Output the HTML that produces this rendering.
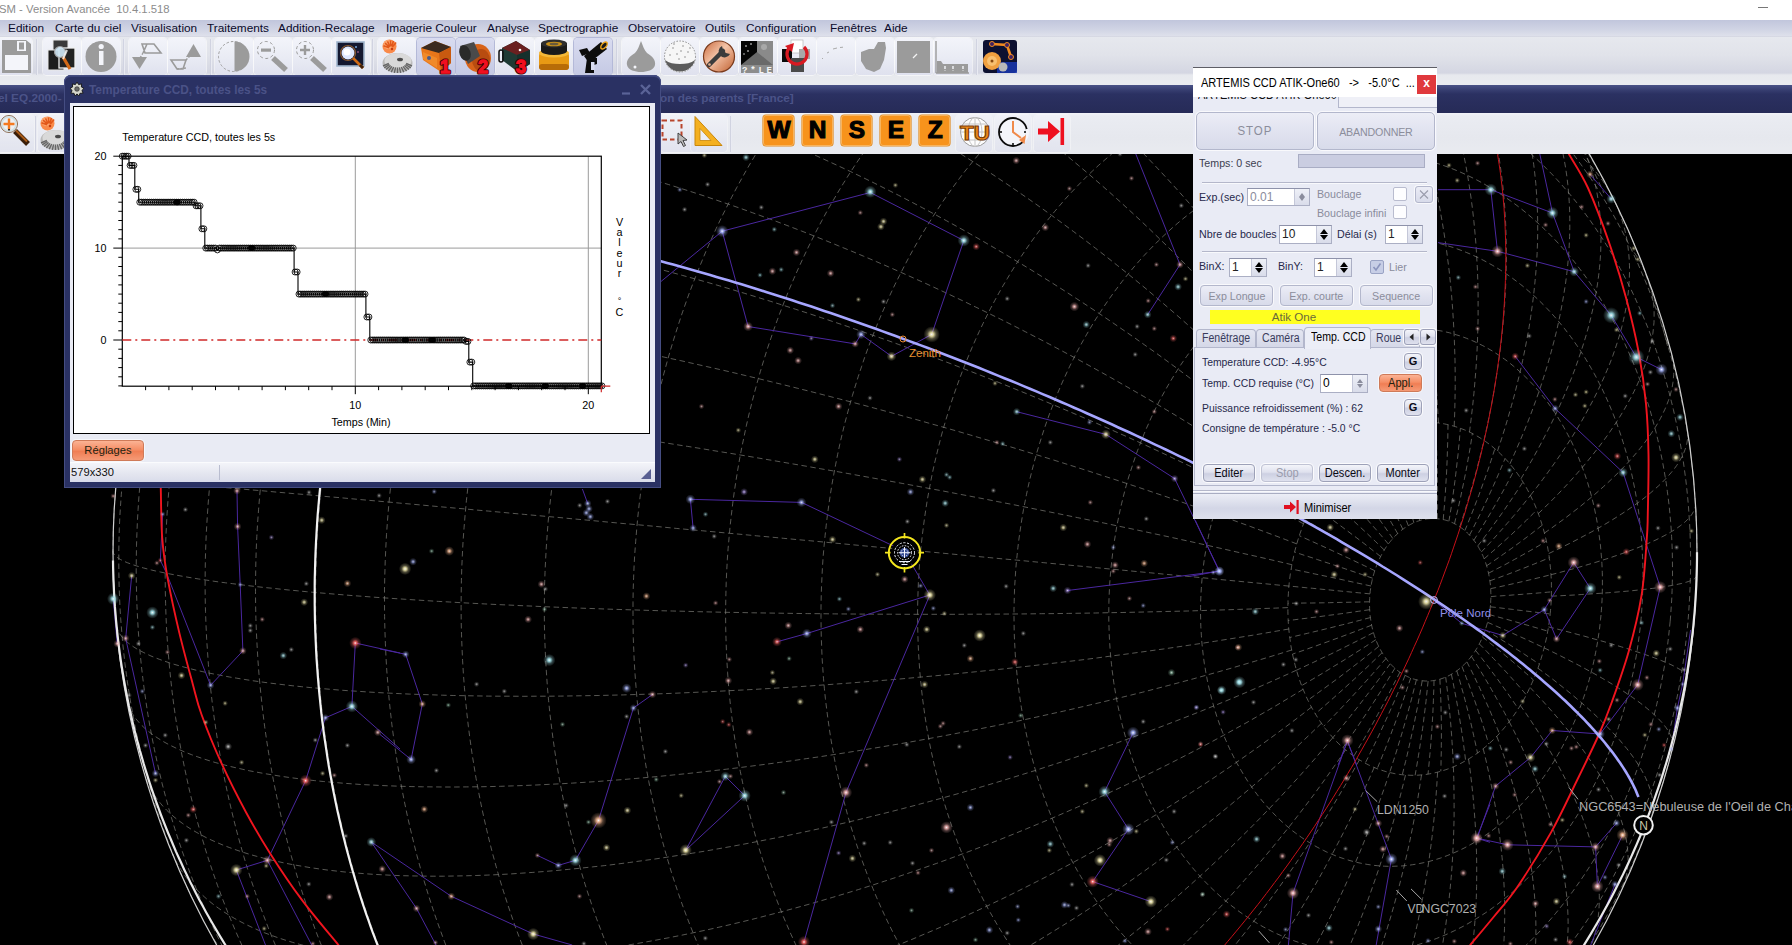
<!DOCTYPE html><html lang="fr"><head><meta charset="utf-8"><title>PRISM</title><style>
*{box-sizing:border-box;margin:0;padding:0}
html,body{width:1792px;height:945px;overflow:hidden;background:#000}
body{position:relative;font-family:"Liberation Sans",sans-serif;font-size:12px;color:#000}
.abs{position:absolute}
#titlebar{left:0;top:0;width:1792px;height:20px;background:#fff}
#titlebar span{position:absolute;left:-1px;top:2.500px;font-size:11.400px;color:#8c8c8c;white-space:pre;transform:scaleX(.992);transform-origin:0 50%}
#menubar{left:0;top:20px;width:1792px;height:17px;background:linear-gradient(#c1c6dc,#d0d4e4 55%,#dee0eb 94%,#cfd1dc)}
#menubar span{position:absolute;top:.700px;font-size:11.600px;color:#0a0a2a;white-space:nowrap;transform:scaleX(1.020);transform-origin:0 50%}
#tb1{left:0;top:37px;width:1792px;height:49px;background:linear-gradient(#e6e8ee 0,#e1e3ea 18px,#d4d6e2 36px,#e7e9ee 38px,#eaecf0 49px)}
.tbtn{position:absolute;top:1px;width:38px;height:37px;border-radius:4px;background:linear-gradient(#f3f4fa,#e9ebf4 55%,#dfe1ee);box-shadow:0 0 0 1px rgba(255,255,255,.55)}
.tbtn.hi{background:linear-gradient(#d9dcf0,#c5c9e4);box-shadow:0 0 0 1px #b4b9d8}
.tsep{position:absolute;top:2px;width:2px;height:36px;background:linear-gradient(90deg,#c4c7d8,#f6f7fb)}
#mdititle{left:0;top:85px;width:1792px;height:28px;background:linear-gradient(#4a5286 0,#3a4174 4px,#2b3162 9px,#292e5d 60%,#262b57)}
#mdititle span{position:absolute;top:6px;font-size:11.800px;font-weight:bold;color:#4b5388;white-space:nowrap}
#tb2{left:0;top:113px;width:1792px;height:41px;background:linear-gradient(#f1f2f8 0,#eaecf2 3px,#e6e8ee 60%,#e9ebf0 100%)}
svg{position:absolute;left:0;top:0;overflow:visible}


#cw{left:63.5px;top:75px;width:597.5px;height:413px;border-radius:7px 7px 0 0;background:#2a3163;box-shadow:inset 0 0 0 1px #454d82, inset 0 2px 0 #3b437a}
#cw .ttl{position:absolute;left:25.5px;top:7.5px;font-size:11.850px;font-weight:bold;color:#4a5287;white-space:nowrap}
#cwc{left:6.5px;top:28px;width:585px;height:379px;background:#e9ebf4}
#plot{left:3px;top:3px;width:577px;height:328px;background:#fff;border:1px solid #000}
#regl{left:2px;top:337px;width:72px;height:21px;border:1px solid #cf7a58;border-radius:4px;background:linear-gradient(#fbb394,#f58e66 45%,#f07e54 55%,#f59a76);font-size:11.200px;line-height:19px;text-align:center;color:#221;box-shadow:0 0 0 1px rgba(255,255,255,.6)}
#cwst{left:0;top:359px;width:585px;height:20px;background:linear-gradient(#f3f4f9,#e3e5ef 60%,#d9dcea);border-top:1px solid #fafbfd;font-size:11.200px}
#cwst span{position:absolute;left:1px;top:3px;color:#111}
#cwst i{position:absolute;left:149px;top:2px;width:1px;height:15px;background:#b9bdd0}


#dg{left:1193px;top:67px;width:244px;height:452px;background:#e9ebf5;border-top:1px solid #5e5e66;overflow:hidden;font-size:11.6px;color:#26284a}
#dg .abs{white-space:nowrap}
.nw{transform:scaleX(.92);transform-origin:0 50%}
.nx{display:inline-block;transform:scaleX(.92);transform-origin:50% 50%}
#dgt{left:0;top:0;width:244px;height:29px;background:#fff;z-index:3}
#dgt span{position:absolute;left:8px;top:8px;font-size:12.2px;color:#000;white-space:pre;transform:scaleX(.905);transform-origin:0 50%}
#dgx{left:224px;top:7px;width:19px;height:19px;background:#e0393d;color:#fff;font-size:12px;font-weight:bold;text-align:center;line-height:17px}
.bb{border:1px solid #b3b7cc;border-radius:5px;background:linear-gradient(#ecedf6,#e1e3f0 50%,#d8dbea);color:#8b8d9b;text-align:center;box-shadow:0 0 0 1px rgba(255,255,255,.7)}
.sb{border:1px solid #9da1b8;border-radius:4px;background:linear-gradient(#f4f5fa,#dfe1ee 45%,#cdd0e2 55%,#dfe1ee);color:#0a0a14;text-align:center;box-shadow:0 0 0 1px rgba(255,255,255,.8);font-size:12px;line-height:16px}
.sb.dis{color:#9a9cac;border-color:#c0c3d4}
.gl{color:#8a8c9c}
.in{background:#fff;border:1px solid #abafc4;border-top-color:#8e92aa;font-size:12px;line-height:16px;padding-left:2px;color:#222}
.in.g{color:#8a8c9c}
.sp{position:absolute;right:0;top:0;width:15px;height:100%;background:linear-gradient(#eef0f7,#d9dcea);border-left:1px solid #c4c7d8}
.sp:before,.sp:after{content:"";position:absolute;left:3px;border:4px solid transparent}
.sp:before{top:-1px;border-bottom:5px solid #000}
.sp:after{bottom:-1px;border-top:5px solid #000}
.sp.g:before{border-bottom-color:#8a8c9c;border-width:3px;border-bottom-width:4px;left:4px;top:1px}
.sp.g:after{border-top-color:#8a8c9c;border-width:3px;border-top-width:4px;left:4px;bottom:1px}
.cb{background:#fdfdff;border:1px solid #b9bccf;border-radius:2px}
.hr{height:1px;background:#b4b7ca;box-shadow:0 1px 0 #f8f9fc}
.tab{top:261px;height:19px;border:1px solid #b3b7cc;border-bottom:none;border-radius:4px 4px 0 0;background:linear-gradient(#e4e6f1,#d4d7e7);color:#3a3c5c;font-size:12px;line-height:17px;padding-left:5px}

</style></head><body>
<svg id="sky" width="1792" height="945" viewBox="0 0 1792 945">
<defs><clipPath id="skyclip"><rect x="0" y="154" width="1792" height="791"/></clipPath></defs>
<g clip-path="url(#skyclip)">
<path d="M1490.5 605.1L1490.3 606.5L1490.2 607.9L1490.0 609.4L1489.8 610.8L1489.6 612.2L1489.4 613.6L1489.1 615.0L1488.9 616.3L1488.6 617.7L1488.3 619.1L1488.0 620.5L1487.6 621.9L1487.3 623.2L1486.9 624.6L1486.5 625.9L1486.1 627.3L1485.7 628.6L1485.3 629.9L1484.8 631.2L1484.4 632.5L1483.9 633.8L1483.4 635.1L1482.8 636.4L1482.3 637.6L1481.8 638.9L1481.2 640.1L1480.6 641.3L1480.0 642.6L1479.4 643.8L1478.8 644.9L1478.1 646.1L1477.5 647.3L1476.8 648.4L1476.1 649.5L1475.4 650.7L1474.7 651.8L1474.0 652.8L1473.2 653.9L1472.5 655.0L1471.7 656.0L1470.9 657.0L1470.1 658.0L1469.3 659.0L1468.5 659.9L1467.7 660.9L1466.9 661.8L1466.0 662.7L1465.2 663.6L1464.3 664.5L1463.4 665.3L1462.5 666.1L1461.6 667.0L1460.7 667.7L1459.8 668.5L1458.8 669.3L1457.9 670.0L1457.0 670.7L1456.0 671.4L1455.0 672.0L1454.1 672.7L1453.1 673.3L1452.1 673.9L1451.1 674.4L1450.1 675.0L1449.1 675.5L1448.1 676.0L1447.1 676.5L1446.1 676.9L1445.1 677.4L1444.0 677.8L1443.0 678.2L1442.0 678.5L1440.9 678.9L1439.9 679.2L1438.8 679.5L1437.8 679.7L1436.7 680.0L1435.7 680.2L1434.6 680.4L1433.6 680.5L1432.5 680.7L1431.4 680.8L1430.4 680.9L1429.3 681.0L1428.3 681.0L1427.2 681.0L1426.1 681.0L1425.1 681.0L1424.0 680.9L1423.0 680.8L1421.9 680.7L1420.9 680.6L1419.8 680.5L1418.8 680.3L1417.8 680.1L1416.7 679.8L1415.7 679.6L1414.7 679.3L1413.6 679.0L1412.6 678.7L1411.6 678.3L1410.6 678.0L1409.6 677.6L1408.6 677.1L1407.6 676.7L1406.7 676.2L1405.7 675.7L1404.7 675.2L1403.8 674.7L1402.8 674.1L1401.9 673.5L1400.9 672.9L1400.0 672.3L1399.1 671.7L1398.2 671.0L1397.3 670.3L1396.4 669.6L1395.5 668.8L1394.7 668.1L1393.8 667.3L1393.0 666.5L1392.2 665.7L1391.3 664.8L1390.5 664.0L1389.7 663.1L1388.9 662.2L1388.2 661.3L1387.4 660.3L1386.7 659.4L1385.9 658.4L1385.2 657.4L1384.5 656.4L1383.8 655.4L1383.2 654.4L1382.5 653.3L1381.8 652.2L1381.2 651.1L1380.6 650.0L1380.0 648.9L1379.4 647.8L1378.8 646.6L1378.3 645.4L1377.7 644.3L1377.2 643.1L1376.7 641.9L1376.2 640.7L1375.7 639.4L1375.3 638.2L1374.8 636.9L1374.4 635.7L1374.0 634.4L1373.6 633.1L1373.2 631.8L1372.9 630.5L1372.5 629.2L1372.2 627.8L1371.9 626.5L1371.6 625.2L1371.4 623.8L1371.1 622.4L1370.9 621.1L1370.7 619.7L1370.5 618.3L1370.3 616.9L1370.1 615.6L1370.0 614.2L1369.9 612.8L1369.8 611.4L1369.7 610.0L1369.6 608.6L1369.6 607.1L1369.5 605.7L1369.5 604.3L1369.5 602.9L1369.6 601.5L1369.6 600.1L1369.7 598.6L1369.7 597.2L1369.8 595.8L1370.0 594.4L1370.1 593.0L1370.2 591.6L1370.4 590.2L1370.6 588.7L1370.8 587.3L1371.0 585.9L1371.3 584.5L1371.5 583.2L1371.8 581.8L1372.1 580.4L1372.4 579.0L1372.8 577.6L1373.1 576.3L1373.5 574.9L1373.9 573.6L1374.3 572.2L1374.7 570.9L1375.1 569.6L1375.6 568.3L1376.1 567.0L1376.5 565.7L1377.0 564.4L1377.6 563.1L1378.1 561.9L1378.6 560.6L1379.2 559.4L1379.8 558.2L1380.4 556.9L1381.0 555.7L1381.6 554.6L1382.3 553.4L1382.9 552.2L1383.6 551.1L1384.3 550.0L1385.0 548.8L1385.7 547.7L1386.4 546.7L1387.2 545.6L1387.9 544.6L1388.7 543.5L1389.5 542.5L1390.3 541.5L1391.1 540.5L1391.9 539.6L1392.7 538.6L1393.5 537.7L1394.4 536.8L1395.3 535.9L1396.1 535.0L1397.0 534.2L1397.9 533.4L1398.8 532.5L1399.7 531.8L1400.6 531.0L1401.6 530.2L1402.5 529.5L1403.4 528.8L1404.4 528.1L1405.4 527.5L1406.3 526.8L1407.3 526.2L1408.3 525.6L1409.3 525.1L1410.3 524.5L1411.3 524.0L1412.3 523.5L1413.3 523.0L1414.3 522.6L1415.4 522.1L1416.4 521.7L1417.4 521.3L1418.4 521.0L1419.5 520.6L1420.5 520.3L1421.6 520.0L1422.6 519.8L1423.7 519.5L1424.7 519.3L1425.8 519.1L1426.8 519.0L1427.9 518.8L1429.0 518.7L1430.0 518.6L1431.1 518.5L1432.1 518.5L1433.2 518.5L1434.3 518.5L1435.3 518.5L1436.4 518.6L1437.4 518.7L1438.5 518.8L1439.5 518.9L1440.6 519.1L1441.6 519.2L1442.6 519.4L1443.7 519.7L1444.7 519.9L1445.7 520.2L1446.8 520.5L1447.8 520.8L1448.8 521.2L1449.8 521.5L1450.8 521.9L1451.8 522.4L1452.8 522.8L1453.7 523.3L1454.7 523.8L1455.7 524.3L1456.6 524.8L1457.6 525.4L1458.5 526.0L1459.5 526.6L1460.4 527.2L1461.3 527.9L1462.2 528.5L1463.1 529.2L1464.0 529.9L1464.9 530.7L1465.7 531.4L1466.6 532.2L1467.4 533.0L1468.3 533.8L1469.1 534.7L1469.9 535.5L1470.7 536.4L1471.5 537.3L1472.2 538.2L1473.0 539.2L1473.7 540.1L1474.5 541.1L1475.2 542.1L1475.9 543.1L1476.6 544.1L1477.2 545.1L1477.9 546.2L1478.6 547.3L1479.2 548.4L1479.8 549.5L1480.4 550.6L1481.0 551.7L1481.6 552.9L1482.1 554.1L1482.7 555.2L1483.2 556.4L1483.7 557.6L1484.2 558.9L1484.7 560.1L1485.1 561.3L1485.6 562.6L1486.0 563.9L1486.4 565.1L1486.8 566.4L1487.2 567.7L1487.5 569.0L1487.9 570.3L1488.2 571.7L1488.5 573.0L1488.8 574.3L1489.0 575.7L1489.3 577.1L1489.5 578.4L1489.7 579.8L1489.9 581.2L1490.1 582.6L1490.3 583.9L1490.4 585.3L1490.5 586.7L1490.6 588.1L1490.7 589.5L1490.8 591.0L1490.8 592.4L1490.9 593.8L1490.9 595.2L1490.9 596.6L1490.9 598.0L1490.8 599.4L1490.7 600.9L1490.7 602.3L1490.6 603.7L1490.5 605.1M1550.5 610.5L1550.2 613.5L1549.9 616.6L1549.5 619.7L1549.1 622.7L1548.7 625.8L1548.2 628.8L1547.6 631.8L1547.1 634.9L1546.5 637.9L1545.8 640.9L1545.1 643.9L1544.4 646.8L1543.6 649.8L1542.8 652.7L1542.0 655.6L1541.1 658.6L1540.2 661.4L1539.3 664.3L1538.3 667.2L1537.3 670.0L1536.2 672.8L1535.1 675.6L1534.0 678.4L1532.8 681.1L1531.6 683.8L1530.4 686.5L1529.1 689.1L1527.9 691.8L1526.5 694.4L1525.2 697.0L1523.8 699.5L1522.3 702.0L1520.9 704.5L1519.4 707.0L1517.9 709.4L1516.3 711.8L1514.7 714.1L1513.1 716.4L1511.5 718.7L1509.8 720.9L1508.1 723.1L1506.4 725.3L1504.7 727.4L1502.9 729.5L1501.1 731.6L1499.3 733.6L1497.5 735.6L1495.6 737.5L1493.7 739.4L1491.8 741.2L1489.8 743.0L1487.9 744.8L1485.9 746.5L1483.9 748.1L1481.9 749.8L1479.8 751.3L1477.8 752.9L1475.7 754.3L1473.6 755.8L1471.5 757.2L1469.4 758.5L1467.3 759.8L1465.1 761.0L1462.9 762.2L1460.8 763.4L1458.6 764.4L1456.4 765.5L1454.2 766.5L1451.9 767.4L1449.7 768.3L1447.5 769.1L1445.2 769.9L1442.9 770.6L1440.7 771.3L1438.4 771.9L1436.1 772.5L1433.8 773.0L1431.5 773.5L1429.3 773.9L1427.0 774.3L1424.7 774.6L1422.4 774.8L1420.1 775.0L1417.8 775.2L1415.5 775.3L1413.2 775.3L1410.9 775.3L1408.6 775.2L1406.3 775.1L1404.0 774.9L1401.7 774.7L1399.4 774.4L1397.2 774.1L1394.9 773.7L1392.7 773.2L1390.4 772.7L1388.2 772.2L1385.9 771.6L1383.7 770.9L1381.5 770.2L1379.3 769.5L1377.1 768.7L1375.0 767.8L1372.8 766.9L1370.7 765.9L1368.5 764.9L1366.4 763.8L1364.3 762.7L1362.2 761.5L1360.2 760.3L1358.1 759.1L1356.1 757.7L1354.1 756.4L1352.1 755.0L1350.2 753.5L1348.2 752.0L1346.3 750.4L1344.4 748.8L1342.5 747.2L1340.7 745.5L1338.8 743.8L1337.0 742.0L1335.3 740.2L1333.5 738.3L1331.8 736.4L1330.1 734.4L1328.4 732.5L1326.8 730.4L1325.1 728.4L1323.6 726.2L1322.0 724.1L1320.5 721.9L1319.0 719.7L1317.5 717.4L1316.1 715.1L1314.7 712.8L1313.3 710.4L1311.9 708.0L1310.6 705.6L1309.4 703.1L1308.1 700.6L1306.9 698.1L1305.7 695.5L1304.6 692.9L1303.5 690.3L1302.4 687.6L1301.4 685.0L1300.4 682.3L1299.4 679.5L1298.5 676.8L1297.6 674.0L1296.8 671.2L1296.0 668.4L1295.2 665.5L1294.5 662.7L1293.8 659.8L1293.1 656.9L1292.5 654.0L1291.9 651.1L1291.3 648.1L1290.8 645.1L1290.4 642.2L1290.0 639.2L1289.6 636.2L1289.2 633.1L1288.9 630.1L1288.6 627.1L1288.4 624.0L1288.2 621.0L1288.1 617.9L1288.0 614.9L1287.9 611.8L1287.9 608.7L1287.9 605.6L1288.0 602.6L1288.0 599.5L1288.2 596.4L1288.4 593.3L1288.6 590.2L1288.8 587.2L1289.1 584.1L1289.4 581.0L1289.8 578.0L1290.2 574.9L1290.7 571.9L1291.2 568.8L1291.7 565.8L1292.3 562.8L1292.9 559.8L1293.5 556.8L1294.2 553.8L1294.9 550.8L1295.7 547.8L1296.5 544.9L1297.3 542.0L1298.2 539.1L1299.1 536.2L1300.1 533.3L1301.1 530.5L1302.1 527.6L1303.1 524.8L1304.2 522.0L1305.3 519.3L1306.5 516.5L1307.7 513.8L1308.9 511.1L1310.2 508.5L1311.5 505.8L1312.8 503.2L1314.2 500.7L1315.6 498.1L1317.0 495.6L1318.5 493.1L1320.0 490.7L1321.5 488.3L1323.0 485.9L1324.6 483.5L1326.2 481.2L1327.8 478.9L1329.5 476.7L1331.2 474.5L1332.9 472.3L1334.7 470.2L1336.4 468.1L1338.2 466.0L1340.1 464.0L1341.9 462.1L1343.8 460.1L1345.7 458.3L1347.6 456.4L1349.5 454.6L1351.5 452.9L1353.4 451.1L1355.4 449.5L1357.5 447.9L1359.5 446.3L1361.6 444.8L1363.6 443.3L1365.7 441.9L1367.8 440.5L1369.9 439.1L1372.1 437.8L1374.2 436.6L1376.4 435.4L1378.6 434.3L1380.8 433.2L1383.0 432.1L1385.2 431.2L1387.4 430.2L1389.7 429.3L1391.9 428.5L1394.1 427.7L1396.4 427.0L1398.7 426.3L1400.9 425.7L1403.2 425.1L1405.5 424.6L1407.8 424.1L1410.1 423.7L1412.4 423.3L1414.7 423.0L1417.0 422.8L1419.3 422.6L1421.6 422.4L1423.9 422.4L1426.2 422.3L1428.5 422.3L1430.8 422.4L1433.1 422.5L1435.4 422.7L1437.6 422.9L1439.9 423.2L1442.2 423.5L1444.4 423.9L1446.7 424.4L1448.9 424.9L1451.2 425.4L1453.4 426.0L1455.6 426.7L1457.8 427.4L1460.0 428.2L1462.2 429.0L1464.4 429.8L1466.5 430.7L1468.7 431.7L1470.8 432.7L1472.9 433.8L1475.0 434.9L1477.1 436.1L1479.2 437.3L1481.2 438.6L1483.2 439.9L1485.2 441.2L1487.2 442.7L1489.2 444.1L1491.1 445.6L1493.0 447.2L1494.9 448.8L1496.8 450.4L1498.7 452.1L1500.5 453.9L1502.3 455.6L1504.1 457.5L1505.8 459.3L1507.6 461.2L1509.3 463.2L1510.9 465.2L1512.6 467.2L1514.2 469.3L1515.8 471.4L1517.4 473.5L1518.9 475.7L1520.4 478.0L1521.8 480.2L1523.3 482.5L1524.7 484.9L1526.1 487.2L1527.4 489.6L1528.7 492.1L1530.0 494.5L1531.2 497.0L1532.4 499.6L1533.6 502.1L1534.8 504.7L1535.9 507.3L1536.9 510.0L1538.0 512.7L1539.0 515.4L1539.9 518.1L1540.8 520.8L1541.7 523.6L1542.6 526.4L1543.4 529.2L1544.2 532.1L1544.9 534.9L1545.6 537.8L1546.3 540.7L1546.9 543.6L1547.5 546.6L1548.0 549.5L1548.5 552.5L1549.0 555.5L1549.4 558.5L1549.8 561.5L1550.1 564.5L1550.4 567.5L1550.7 570.5L1550.9 573.6L1551.1 576.6L1551.3 579.7L1551.4 582.8L1551.4 585.8L1551.5 588.9L1551.4 592.0L1551.4 595.1L1551.3 598.1L1551.2 601.2L1551.0 604.3L1550.8 607.4L1550.5 610.5M1601.0 615.0L1600.5 619.6L1600.0 624.3L1599.5 629.0L1598.8 633.6L1598.1 638.3L1597.4 642.9L1596.6 647.5L1595.7 652.2L1594.8 656.7L1593.8 661.3L1592.8 665.9L1591.6 670.4L1590.5 674.9L1589.3 679.4L1588.0 683.8L1586.7 688.3L1585.3 692.7L1583.8 697.1L1582.3 701.4L1580.8 705.7L1579.2 710.0L1577.5 714.2L1575.8 718.5L1574.0 722.6L1572.2 726.8L1570.3 730.9L1568.4 734.9L1566.4 738.9L1564.4 742.9L1562.3 746.8L1560.2 750.7L1558.0 754.5L1555.8 758.3L1553.5 762.1L1551.2 765.8L1548.8 769.4L1546.4 773.0L1544.0 776.5L1541.5 780.0L1538.9 783.4L1536.4 786.8L1533.7 790.1L1531.1 793.3L1528.4 796.5L1525.6 799.6L1522.9 802.7L1520.1 805.7L1517.2 808.6L1514.3 811.5L1511.4 814.3L1508.5 817.0L1505.5 819.7L1502.4 822.3L1499.4 824.9L1496.3 827.3L1493.2 829.7L1490.1 832.1L1486.9 834.3L1483.7 836.5L1480.5 838.6L1477.3 840.7L1474.0 842.6L1470.7 844.5L1467.4 846.3L1464.1 848.1L1460.8 849.7L1457.4 851.3L1454.0 852.8L1450.7 854.2L1447.2 855.6L1443.8 856.9L1440.4 858.1L1436.9 859.2L1433.5 860.2L1430.0 861.2L1426.5 862.0L1423.1 862.8L1419.6 863.5L1416.1 864.2L1412.6 864.7L1409.1 865.2L1405.6 865.6L1402.1 865.9L1398.6 866.1L1395.0 866.2L1391.5 866.3L1388.0 866.3L1384.5 866.2L1381.1 866.0L1377.6 865.7L1374.1 865.4L1370.6 864.9L1367.2 864.4L1363.7 863.8L1360.3 863.1L1356.8 862.4L1353.4 861.5L1350.0 860.6L1346.7 859.6L1343.3 858.5L1339.9 857.4L1336.6 856.2L1333.3 854.8L1330.0 853.4L1326.7 852.0L1323.5 850.4L1320.3 848.8L1317.1 847.1L1313.9 845.3L1310.8 843.4L1307.7 841.5L1304.6 839.5L1301.5 837.4L1298.5 835.3L1295.5 833.0L1292.5 830.8L1289.6 828.4L1286.7 825.9L1283.8 823.4L1281.0 820.9L1278.2 818.2L1275.5 815.5L1272.8 812.7L1270.1 809.9L1267.5 807.0L1264.9 804.0L1262.3 801.0L1259.8 797.9L1257.3 794.7L1254.9 791.5L1252.5 788.2L1250.2 784.9L1247.9 781.5L1245.7 778.0L1243.5 774.5L1241.4 770.9L1239.3 767.3L1237.2 763.7L1235.2 760.0L1233.3 756.2L1231.4 752.4L1229.5 748.5L1227.8 744.6L1226.0 740.7L1224.3 736.7L1222.7 732.6L1221.1 728.5L1219.6 724.4L1218.2 720.3L1216.7 716.1L1215.4 711.8L1214.1 707.6L1212.9 703.3L1211.7 698.9L1210.6 694.6L1209.5 690.2L1208.5 685.8L1207.5 681.3L1206.7 676.8L1205.8 672.3L1205.1 667.8L1204.3 663.3L1203.7 658.7L1203.1 654.1L1202.6 649.5L1202.1 644.9L1201.7 640.3L1201.4 635.7L1201.1 631.0L1200.8 626.3L1200.7 621.7L1200.6 617.0L1200.5 612.3L1200.6 607.6L1200.6 602.9L1200.8 598.2L1201.0 593.5L1201.3 588.8L1201.6 584.1L1202.0 579.4L1202.4 574.8L1202.9 570.1L1203.5 565.4L1204.1 560.7L1204.8 556.1L1205.6 551.5L1206.4 546.8L1207.2 542.2L1208.2 537.6L1209.1 533.1L1210.2 528.5L1211.3 524.0L1212.5 519.5L1213.7 515.0L1214.9 510.5L1216.3 506.1L1217.7 501.7L1219.1 497.3L1220.6 493.0L1222.2 488.7L1223.8 484.4L1225.4 480.1L1227.2 475.9L1228.9 471.8L1230.8 467.6L1232.6 463.5L1234.6 459.5L1236.5 455.5L1238.6 451.5L1240.6 447.6L1242.8 443.7L1244.9 439.8L1247.2 436.1L1249.4 432.3L1251.8 428.6L1254.1 425.0L1256.5 421.4L1259.0 417.9L1261.5 414.4L1264.0 411.0L1266.6 407.6L1269.2 404.3L1271.9 401.1L1274.6 397.9L1277.3 394.8L1280.1 391.7L1282.9 388.7L1285.7 385.8L1288.6 382.9L1291.5 380.1L1294.5 377.3L1297.5 374.7L1300.5 372.1L1303.5 369.5L1306.6 367.0L1309.7 364.7L1312.9 362.3L1316.0 360.1L1319.2 357.9L1322.4 355.8L1325.7 353.7L1328.9 351.8L1332.2 349.9L1335.5 348.1L1338.8 346.3L1342.2 344.7L1345.5 343.1L1348.9 341.6L1352.3 340.1L1355.7 338.8L1359.1 337.5L1362.6 336.3L1366.0 335.2L1369.5 334.2L1372.9 333.2L1376.4 332.4L1379.9 331.6L1383.4 330.9L1386.9 330.2L1390.4 329.7L1393.9 329.2L1397.4 328.8L1400.9 328.5L1404.4 328.3L1407.9 328.1L1411.4 328.1L1414.9 328.1L1418.4 328.2L1421.9 328.4L1425.4 328.7L1428.9 329.0L1432.3 329.5L1435.8 330.0L1439.2 330.6L1442.7 331.2L1446.1 332.0L1449.5 332.8L1452.9 333.8L1456.3 334.8L1459.7 335.8L1463.0 337.0L1466.3 338.2L1469.6 339.6L1472.9 340.9L1476.2 342.4L1479.4 344.0L1482.7 345.6L1485.9 347.3L1489.0 349.1L1492.2 350.9L1495.3 352.9L1498.4 354.9L1501.4 357.0L1504.5 359.1L1507.5 361.3L1510.4 363.6L1513.3 366.0L1516.2 368.4L1519.1 371.0L1521.9 373.5L1524.7 376.2L1527.5 378.9L1530.2 381.7L1532.9 384.5L1535.5 387.4L1538.1 390.4L1540.6 393.4L1543.1 396.5L1545.6 399.7L1548.0 402.9L1550.4 406.2L1552.7 409.5L1555.0 412.9L1557.3 416.4L1559.4 419.9L1561.6 423.4L1563.7 427.1L1565.7 430.7L1567.7 434.4L1569.7 438.2L1571.6 442.0L1573.4 445.9L1575.2 449.8L1576.9 453.7L1578.6 457.7L1580.2 461.8L1581.8 465.8L1583.3 470.0L1584.8 474.1L1586.2 478.3L1587.6 482.5L1588.8 486.8L1590.1 491.1L1591.3 495.4L1592.4 499.8L1593.5 504.2L1594.5 508.6L1595.4 513.1L1596.3 517.5L1597.1 522.0L1597.9 526.6L1598.6 531.1L1599.2 535.7L1599.8 540.3L1600.4 544.8L1600.8 549.5L1601.2 554.1L1601.6 558.7L1601.9 563.4L1602.1 568.1L1602.3 572.7L1602.4 577.4L1602.4 582.1L1602.4 586.8L1602.3 591.5L1602.2 596.2L1602.0 600.9L1601.7 605.6L1601.4 610.3L1601.0 615.0M1641.1 618.5L1640.5 624.7L1639.8 631.0L1639.0 637.2L1638.2 643.4L1637.3 649.5L1636.3 655.7L1635.2 661.8L1634.1 668.0L1632.8 674.1L1631.5 680.1L1630.1 686.2L1628.7 692.2L1627.1 698.2L1625.5 704.2L1623.8 710.1L1622.0 716.0L1620.2 721.8L1618.3 727.7L1616.3 733.4L1614.2 739.2L1612.1 744.9L1609.8 750.5L1607.6 756.1L1605.2 761.7L1602.8 767.1L1600.3 772.6L1597.7 778.0L1595.1 783.3L1592.4 788.6L1589.6 793.8L1586.8 799.0L1583.9 804.1L1581.0 809.1L1578.0 814.1L1574.9 819.0L1571.7 823.8L1568.5 828.6L1565.3 833.3L1562.0 837.9L1558.6 842.4L1555.2 846.9L1551.7 851.3L1548.1 855.6L1544.6 859.8L1540.9 864.0L1537.2 868.1L1533.5 872.0L1529.7 876.0L1525.9 879.8L1522.0 883.5L1518.1 887.1L1514.1 890.7L1510.1 894.2L1506.0 897.5L1501.9 900.8L1497.8 904.0L1493.7 907.1L1489.5 910.1L1485.2 913.0L1480.9 915.8L1476.6 918.5L1472.3 921.1L1468.0 923.6L1463.6 926.1L1459.1 928.4L1454.7 930.6L1450.2 932.7L1445.8 934.7L1441.2 936.6L1436.7 938.4L1432.2 940.1L1427.6 941.7L1423.0 943.1L1418.4 944.5L1413.8 945.8L1409.2 946.9L1404.6 948.0L1399.9 948.9L1395.3 949.8L1390.6 950.5L1386.0 951.1L1381.3 951.6L1376.7 952.0L1372.0 952.3L1367.3 952.5L1362.7 952.6L1358.0 952.6L1353.4 952.4L1348.7 952.2L1344.1 951.8L1339.5 951.4L1334.9 950.8L1330.3 950.1L1325.7 949.3L1321.1 948.4L1316.6 947.4L1312.0 946.3L1307.5 945.1L1303.0 943.7L1298.5 942.3L1294.1 940.8L1289.7 939.1L1285.3 937.4L1280.9 935.5L1276.5 933.6L1272.2 931.5L1268.0 929.3L1263.7 927.1L1259.5 924.7L1255.3 922.2L1251.2 919.7L1247.1 917.0L1243.0 914.2L1239.0 911.4L1235.0 908.4L1231.1 905.4L1227.2 902.2L1223.3 899.0L1219.5 895.6L1215.8 892.2L1212.1 888.7L1208.4 885.1L1204.8 881.4L1201.2 877.6L1197.7 873.7L1194.3 869.8L1190.9 865.8L1187.6 861.6L1184.3 857.4L1181.1 853.2L1177.9 848.8L1174.8 844.4L1171.8 839.8L1168.8 835.3L1165.9 830.6L1163.0 825.9L1160.3 821.1L1157.5 816.2L1154.9 811.3L1152.3 806.3L1149.8 801.2L1147.3 796.1L1145.0 790.9L1142.7 785.6L1140.4 780.3L1138.3 774.9L1136.2 769.5L1134.1 764.0L1132.2 758.5L1130.3 752.9L1128.5 747.3L1126.8 741.6L1125.2 735.9L1123.6 730.2L1122.1 724.4L1120.7 718.5L1119.4 712.6L1118.1 706.7L1116.9 700.8L1115.8 694.8L1114.8 688.8L1113.8 682.8L1113.0 676.7L1112.2 670.6L1111.5 664.5L1110.9 658.4L1110.3 652.2L1109.9 646.0L1109.5 639.8L1109.2 633.6L1109.0 627.4L1108.8 621.2L1108.8 615.0L1108.8 608.7L1108.9 602.5L1109.1 596.3L1109.4 590.0L1109.7 583.8L1110.2 577.5L1110.7 571.3L1111.3 565.1L1112.0 558.9L1112.7 552.7L1113.5 546.5L1114.5 540.3L1115.5 534.1L1116.5 528.0L1117.7 521.9L1118.9 515.8L1120.2 509.7L1121.6 503.6L1123.1 497.6L1124.6 491.6L1126.2 485.7L1127.9 479.7L1129.7 473.8L1131.6 468.0L1133.5 462.2L1135.5 456.4L1137.5 450.7L1139.7 445.0L1141.9 439.3L1144.2 433.7L1146.5 428.2L1149.0 422.7L1151.4 417.2L1154.0 411.8L1156.6 406.5L1159.3 401.2L1162.1 396.0L1164.9 390.9L1167.8 385.8L1170.8 380.7L1173.8 375.8L1176.9 370.9L1180.0 366.0L1183.2 361.3L1186.5 356.6L1189.8 352.0L1193.1 347.4L1196.6 342.9L1200.1 338.5L1203.6 334.2L1207.2 330.0L1210.8 325.8L1214.5 321.8L1218.2 317.8L1222.0 313.9L1225.9 310.1L1229.7 306.3L1233.7 302.7L1237.6 299.1L1241.6 295.7L1245.7 292.3L1249.8 289.0L1253.9 285.8L1258.1 282.7L1262.3 279.7L1266.5 276.8L1270.8 274.0L1275.1 271.3L1279.4 268.7L1283.8 266.2L1288.2 263.8L1292.6 261.5L1297.0 259.3L1301.5 257.1L1306.0 255.1L1310.5 253.2L1315.0 251.4L1319.6 249.8L1324.1 248.2L1328.7 246.7L1333.3 245.3L1337.9 244.0L1342.5 242.9L1347.2 241.8L1351.8 240.9L1356.5 240.1L1361.1 239.3L1365.8 238.7L1370.4 238.2L1375.1 237.8L1379.7 237.5L1384.4 237.3L1389.1 237.2L1393.7 237.3L1398.4 237.4L1403.0 237.6L1407.6 238.0L1412.3 238.5L1416.9 239.0L1421.5 239.7L1426.1 240.5L1430.6 241.4L1435.2 242.4L1439.7 243.5L1444.2 244.8L1448.7 246.1L1453.2 247.5L1457.7 249.1L1462.1 250.7L1466.5 252.5L1470.9 254.3L1475.2 256.3L1479.5 258.3L1483.8 260.5L1488.0 262.8L1492.2 265.1L1496.4 267.6L1500.6 270.2L1504.7 272.8L1508.7 275.6L1512.8 278.5L1516.7 281.4L1520.7 284.5L1524.6 287.6L1528.4 290.9L1532.2 294.2L1536.0 297.6L1539.7 301.1L1543.3 304.7L1546.9 308.4L1550.5 312.2L1554.0 316.1L1557.4 320.0L1560.8 324.1L1564.2 328.2L1567.4 332.4L1570.7 336.7L1573.8 341.0L1576.9 345.5L1580.0 350.0L1582.9 354.6L1585.8 359.2L1588.7 364.0L1591.5 368.8L1594.2 373.6L1596.9 378.6L1599.4 383.6L1602.0 388.6L1604.4 393.8L1606.8 399.0L1609.1 404.2L1611.3 409.5L1613.5 414.9L1615.6 420.3L1617.6 425.8L1619.5 431.3L1621.4 436.9L1623.2 442.5L1624.9 448.2L1626.6 453.9L1628.1 459.7L1629.6 465.5L1631.1 471.3L1632.4 477.2L1633.6 483.1L1634.8 489.0L1635.9 495.0L1637.0 501.0L1637.9 507.1L1638.8 513.1L1639.5 519.2L1640.2 525.3L1640.9 531.5L1641.4 537.6L1641.9 543.8L1642.2 550.0L1642.5 556.2L1642.8 562.4L1642.9 568.6L1643.0 574.8L1642.9 581.1L1642.8 587.3L1642.6 593.6L1642.4 599.8L1642.0 606.0L1641.6 612.3L1641.1 618.5M1670.2 621.1L1669.4 628.8L1668.6 636.4L1667.7 644.1L1666.6 651.7L1665.5 659.3L1664.3 666.9L1662.9 674.5L1661.5 682.1L1660.0 689.6L1658.4 697.1L1656.7 704.5L1654.9 712.0L1653.0 719.3L1651.0 726.7L1648.9 734.0L1646.7 741.3L1644.4 748.5L1642.1 755.7L1639.6 762.8L1637.0 769.8L1634.4 776.9L1631.7 783.8L1628.9 790.7L1626.0 797.6L1623.0 804.3L1619.9 811.0L1616.7 817.7L1613.5 824.3L1610.2 830.8L1606.8 837.2L1603.3 843.6L1599.7 849.9L1596.1 856.1L1592.4 862.2L1588.6 868.2L1584.7 874.2L1580.8 880.0L1576.7 885.8L1572.7 891.5L1568.5 897.1L1564.3 902.6L1560.0 908.0L1555.6 913.4L1551.2 918.6L1546.7 923.7L1542.2 928.7L1537.6 933.6L1532.9 938.5L1528.2 943.2L1523.4 947.8L1518.5 952.3L1513.6 956.6L1508.7 960.9M1150.5 962.7L1145.9 958.5L1141.3 954.2L1136.8 949.7L1132.4 945.2L1128.0 940.5L1123.7 935.7L1119.4 930.9L1115.2 925.9L1111.1 920.8L1107.1 915.6L1103.1 910.4L1099.2 905.0L1095.4 899.5L1091.6 894.0L1088.0 888.3L1084.4 882.6L1080.9 876.7L1077.4 870.8L1074.1 864.8L1070.8 858.7L1067.6 852.5L1064.5 846.3L1061.5 840.0L1058.6 833.6L1055.7 827.1L1053.0 820.5L1050.3 813.9L1047.7 807.2L1045.3 800.5L1042.9 793.7L1040.5 786.8L1038.3 779.9L1036.2 772.9L1034.2 765.8L1032.3 758.7L1030.4 751.6L1028.7 744.4L1027.0 737.1L1025.5 729.9L1024.0 722.5L1022.7 715.2L1021.4 707.7L1020.2 700.3L1019.2 692.8L1018.2 685.3L1017.3 677.8L1016.6 670.2L1015.9 662.6L1015.3 655.0L1014.9 647.4L1014.5 639.8L1014.2 632.1L1014.1 624.4L1014.0 616.7L1014.0 609.1L1014.2 601.4L1014.4 593.7L1014.7 586.0L1015.2 578.3L1015.7 570.6L1016.3 562.9L1017.1 555.2L1017.9 547.6L1018.8 539.9L1019.9 532.3L1021.0 524.7L1022.2 517.1L1023.5 509.5L1025.0 502.0L1026.5 494.4L1028.1 486.9L1029.8 479.5L1031.6 472.1L1033.5 464.7L1035.5 457.3L1037.6 450.0L1039.8 442.8L1042.1 435.5L1044.4 428.4L1046.9 421.2L1049.4 414.2L1052.1 407.2L1054.8 400.2L1057.6 393.3L1060.5 386.5L1063.5 379.7L1066.6 373.0L1069.7 366.3L1073.0 359.8L1076.3 353.2L1079.7 346.8L1083.2 340.5L1086.8 334.2L1090.4 328.0L1094.1 321.8L1097.9 315.8L1101.8 309.8L1105.7 304.0L1109.7 298.2L1113.8 292.5L1118.0 286.9L1122.2 281.4L1126.5 276.0L1130.9 270.7L1135.3 265.4L1139.8 260.3L1144.3 255.3L1148.9 250.4L1153.6 245.6L1158.3 240.9L1163.1 236.3L1168.0 231.8L1172.8 227.4L1177.8 223.1L1182.8 218.9L1187.8 214.9L1192.9 211.0L1198.0 207.2L1203.2 203.5L1208.4 199.9L1213.7 196.4L1219.0 193.1L1224.4 189.9L1229.7 186.8L1235.1 183.8L1240.6 180.9L1246.1 178.2L1251.6 175.6L1257.1 173.2L1262.7 170.8L1268.2 168.6L1273.8 166.5L1279.5 164.6L1285.1 162.7L1290.8 161.0L1296.5 159.5L1302.2 158.0L1307.9 156.7L1313.6 155.6L1319.3 154.5L1325.1 153.6L1330.8 152.9L1336.5 152.2L1342.3 151.7L1348.0 151.4L1353.8 151.2L1359.5 151.1L1365.2 151.1L1371.0 151.3L1376.7 151.6L1382.4 152.0L1388.1 152.6L1393.8 153.3L1399.5 154.1L1405.1 155.1L1410.8 156.2L1416.4 157.5L1422.0 158.8L1427.5 160.3L1433.1 162.0L1438.6 163.8L1444.1 165.7L1449.5 167.7L1454.9 169.8L1460.3 172.1L1465.7 174.5L1471.0 177.1L1476.3 179.7L1481.5 182.5L1486.7 185.5L1491.9 188.5L1497.0 191.7L1502.0 195.0L1507.0 198.4L1512.0 201.9L1516.9 205.5L1521.8 209.3L1526.6 213.2L1531.3 217.2L1536.0 221.3L1540.6 225.5L1545.2 229.8L1549.7 234.3L1554.1 238.8L1558.5 243.5L1562.8 248.3L1567.1 253.2L1571.3 258.1L1575.4 263.2L1579.4 268.4L1583.4 273.7L1587.3 279.0L1591.1 284.5L1594.8 290.1L1598.5 295.7L1602.1 301.5L1605.6 307.3L1609.0 313.2L1612.4 319.2L1615.7 325.3L1618.9 331.5L1622.0 337.7L1625.0 344.1L1627.9 350.5L1630.7 356.9L1633.5 363.5L1636.2 370.1L1638.7 376.8L1641.2 383.5L1643.6 390.3L1645.9 397.2L1648.2 404.1L1650.3 411.1L1652.3 418.2L1654.2 425.3L1656.1 432.4L1657.8 439.6L1659.5 446.9L1661.0 454.2L1662.5 461.5L1663.8 468.9L1665.1 476.3L1666.3 483.7L1667.3 491.2L1668.3 498.7L1669.2 506.2L1669.9 513.8L1670.6 521.4L1671.2 529.0L1671.6 536.6L1672.0 544.3L1672.3 551.9L1672.4 559.6L1672.5 567.3L1672.5 575.0L1672.3 582.7L1672.1 590.3L1671.8 598.0L1671.3 605.7L1670.8 613.4L1670.2 621.1M1687.9 622.7L1687.0 631.7L1686.0 640.7L1684.9 649.7L1683.7 658.6L1682.4 667.6L1680.9 676.5L1679.4 685.4L1677.7 694.2L1675.9 703.1L1674.0 711.9L1672.0 720.6L1669.9 729.3L1667.7 738.0L1665.3 746.6L1662.9 755.2L1660.3 763.7L1657.6 772.2L1654.9 780.6L1652.0 789.0L1649.0 797.3L1645.9 805.5L1642.7 813.7L1639.4 821.8L1636.0 829.8L1632.5 837.8L1628.9 845.7L1625.2 853.5L1621.3 861.2L1617.4 868.8L1613.5 876.4L1609.4 883.8L1605.2 891.2L1600.9 898.5L1596.5 905.7L1592.1 912.8L1587.5 919.8L1582.9 926.7L1578.2 933.4L1573.4 940.1L1568.5 946.7L1563.6 953.2L1558.5 959.5M1022.2 962.2L1017.6 955.9L1013.1 949.5L1008.7 943.0L1004.4 936.3L1000.2 929.6L996.1 922.8L992.1 915.8L988.1 908.8L984.3 901.6L980.6 894.4L976.9 887.0L973.4 879.6L969.9 872.1L966.6 864.5L963.4 856.8L960.2 849.0L957.2 841.2L954.3 833.3L951.5 825.3L948.8 817.2L946.2 809.1L943.7 800.9L941.3 792.6L939.0 784.2L936.9 775.9L934.8 767.4L932.9 758.9L931.0 750.3L929.3 741.7L927.7 733.1L926.3 724.4L924.9 715.6L923.7 706.9L922.5 698.1L921.5 689.2L920.6 680.3L919.8 671.4L919.2 662.5L918.6 653.5L918.2 644.6L917.9 635.6L917.7 626.6L917.6 617.6L917.6 608.5L917.8 599.5L918.1 590.5L918.4 581.4L919.0 572.4L919.6 563.4L920.3 554.4L921.2 545.4L922.2 536.4L923.3 527.4L924.5 518.4L925.8 509.5L927.2 500.6L928.8 491.7L930.5 482.8L932.2 474.0L934.1 465.2L936.2 456.4L938.3 447.7L940.5 439.0L942.8 430.4L945.3 421.8L947.9 413.3L950.5 404.8L953.3 396.4L956.2 388.1L959.2 379.8L962.3 371.5L965.5 363.4L968.8 355.3L972.2 347.2L975.7 339.3L979.3 331.4L983.0 323.6L986.8 315.9L990.7 308.2L994.7 300.7L998.8 293.2L1003.0 285.8L1007.3 278.6L1011.6 271.4L1016.1 264.3L1020.6 257.3L1025.3 250.4L1030.0 243.6L1034.8 236.9L1039.7 230.3L1044.6 223.9L1049.7 217.5L1054.8 211.3L1060.0 205.2L1065.2 199.1L1070.6 193.2L1076.0 187.5L1081.5 181.8L1087.0 176.3L1092.6 170.9L1098.3 165.6L1104.1 160.5L1109.9 155.5L1115.7 150.6L1121.6 145.8L1127.6 141.2L1133.6 136.7L1139.7 132.4M1502.2 130.6L1507.9 134.8L1513.6 139.3L1519.3 143.8L1524.9 148.5L1530.4 153.3L1535.8 158.3L1541.2 163.4L1546.4 168.6L1551.7 173.9L1556.8 179.4L1561.9 185.0L1566.9 190.7L1571.8 196.6L1576.6 202.5L1581.3 208.6L1586.0 214.8L1590.6 221.1L1595.0 227.5L1599.4 234.1L1603.7 240.7L1608.0 247.5L1612.1 254.3L1616.1 261.2L1620.0 268.3L1623.9 275.4L1627.6 282.7L1631.3 290.0L1634.8 297.4L1638.2 305.0L1641.6 312.6L1644.8 320.2L1648.0 328.0L1651.0 335.9L1653.9 343.8L1656.7 351.8L1659.4 359.9L1662.0 368.0L1664.5 376.2L1666.9 384.5L1669.2 392.8L1671.3 401.2L1673.4 409.6L1675.3 418.2L1677.1 426.7L1678.8 435.3L1680.4 444.0L1681.9 452.7L1683.3 461.4L1684.5 470.2L1685.7 479.0L1686.7 487.8L1687.6 496.7L1688.4 505.6L1689.0 514.6L1689.6 523.5L1690.0 532.5L1690.3 541.5L1690.5 550.5L1690.6 559.5L1690.6 568.5L1690.4 577.5L1690.1 586.6L1689.7 595.6L1689.2 604.6L1688.6 613.7L1687.9 622.7M1693.9 623.2L1692.9 633.4L1691.8 643.6L1690.6 653.8L1689.2 664.0L1687.7 674.1L1686.1 684.2L1684.3 694.3L1682.4 704.3L1680.4 714.3L1678.2 724.3L1675.9 734.2L1673.5 744.1L1671.0 753.9L1668.4 763.7L1665.6 773.4L1662.7 783.1L1659.6 792.7L1656.5 802.2L1653.2 811.7L1649.8 821.1L1646.3 830.4L1642.7 839.7L1638.9 848.9L1635.1 858.0L1631.1 867.0L1627.0 875.9L1622.8 884.7L1618.5 893.5L1614.1 902.1L1609.6 910.7L1604.9 919.2L1600.2 927.5L1595.3 935.8L1590.4 943.9L1585.3 952.0L1580.2 959.9M910.0 963.3L905.4 955.4L900.9 947.4L896.6 939.3L892.3 931.1L888.2 922.8L884.2 914.4L880.3 905.9L876.5 897.2L872.9 888.5L869.3 879.7L865.9 870.8L862.6 861.9L859.4 852.8L856.3 843.6L853.4 834.4L850.5 825.1L847.8 815.8L845.3 806.3L842.8 796.8L840.5 787.2L838.3 777.6L836.2 767.9L834.3 758.1L832.5 748.3L830.8 738.5L829.3 728.6L827.9 718.6L826.6 708.6L825.4 698.6L824.4 688.6L823.5 678.5L822.8 668.3L822.1 658.2L821.7 648.0L821.3 637.8L821.1 627.6L821.0 617.4L821.0 607.2L821.2 597.0L821.5 586.7L822.0 576.5L822.5 566.2L823.2 556.0L824.1 545.8L825.1 535.6L826.2 525.4L827.4 515.2L828.8 505.1L830.3 494.9L831.9 484.8L833.7 474.8L835.6 464.7L837.6 454.7L839.7 444.7L842.0 434.8L844.4 424.9L847.0 415.1L849.6 405.3L852.4 395.6L855.3 386.0L858.3 376.4L861.5 366.8L864.7 357.3L868.1 347.9L871.6 338.6L875.3 329.3L879.0 320.2L882.9 311.1L886.9 302.1L890.9 293.1L895.1 284.3L899.5 275.5L903.9 266.9L908.4 258.3L913.0 249.9L917.8 241.5L922.6 233.2L927.6 225.1L932.6 217.1L937.8 209.1L943.0 201.3L948.4 193.6L953.8 186.1L959.3 178.6L964.9 171.3L970.7 164.1L976.5 157.0L982.3 150.1L988.3 143.2L994.4 136.6L1000.5 130.0M1556.8 133.7L1562.3 140.3L1567.8 147.1L1573.2 154.0L1578.4 161.0L1583.6 168.2L1588.7 175.4L1593.7 182.8L1598.6 190.4L1603.3 198.0L1608.0 205.8L1612.6 213.6L1617.0 221.6L1621.4 229.7L1625.6 237.9L1629.8 246.2L1633.8 254.7L1637.7 263.2L1641.4 271.8L1645.1 280.5L1648.7 289.3L1652.1 298.2L1655.4 307.2L1658.6 316.2L1661.7 325.4L1664.6 334.6L1667.4 343.9L1670.1 353.3L1672.7 362.7L1675.2 372.2L1677.5 381.8L1679.7 391.4L1681.7 401.1L1683.7 410.9L1685.5 420.7L1687.1 430.5L1688.7 440.5L1690.1 450.4L1691.4 460.4L1692.5 470.4L1693.6 480.5L1694.5 490.6L1695.2 500.7L1695.8 510.8L1696.3 521.0L1696.7 531.2L1696.9 541.4L1697.0 551.6L1696.9 561.8L1696.8 572.1L1696.5 582.3L1696.0 592.5L1695.4 602.8L1694.7 613.0L1693.9 623.2M804.3 962.2L799.8 953.0L795.3 943.7L791.0 934.4L786.9 924.9L782.8 915.3L778.9 905.6L775.1 895.7L771.5 885.8L768.0 875.9L764.6 865.8L761.3 855.6L758.2 845.3L755.2 835.0L752.4 824.6L749.7 814.1L747.2 803.5L744.7 792.9L742.5 782.2L740.3 771.5L738.3 760.7L736.5 749.8L734.8 738.9L733.2 727.9L731.8 716.9L730.5 705.8L729.4 694.7L728.4 683.6L727.6 672.5L726.9 661.3L726.4 650.1L726.0 638.8L725.7 627.6L725.6 616.3L725.7 605.0L725.9 593.8L726.2 582.5L726.7 571.2L727.3 559.9L728.1 548.6L729.1 537.3L730.1 526.1L731.4 514.8L732.7 503.6L734.2 492.4L735.9 481.2L737.7 470.1L739.6 459.0L741.7 447.9L744.0 436.9L746.3 425.9L748.8 415.0L751.5 404.1L754.3 393.2L757.2 382.5L760.3 371.7L763.5 361.1L766.8 350.5L770.3 340.0L773.9 329.5L777.6 319.2L781.5 308.9L785.5 298.7L789.6 288.5L793.9 278.5L798.3 268.6L802.8 258.7L807.4 249.0L812.2 239.3L817.0 229.8L822.0 220.3L827.1 211.0L832.4 201.8L837.7 192.7L843.2 183.7L848.7 174.9L854.4 166.1L860.2 157.5L866.1 149.0L872.1 140.7L878.2 132.5M1577.7 137.1L1583.0 145.4L1588.3 153.8L1593.5 162.4L1598.5 171.1L1603.4 179.9L1608.2 188.8L1612.9 197.9L1617.4 207.0L1621.9 216.3L1626.2 225.7L1630.3 235.2L1634.4 244.8L1638.3 254.5L1642.1 264.3L1645.7 274.2L1649.2 284.2L1652.6 294.3L1655.9 304.5L1659.0 314.7L1662.0 325.0L1664.8 335.5L1667.5 345.9M703.5 957.2L699.0 946.9L694.6 936.6L690.4 926.1L686.3 915.5L682.4 904.9L678.6 894.1L675.0 883.2L671.4 872.3L668.1 861.2L664.9 850.1L661.8 838.8L658.9 827.5L656.2 816.1L653.6 804.7L651.1 793.2L648.8 781.6L646.6 769.9L644.7 758.2L642.8 746.4L641.1 734.6L639.6 722.7L638.2 710.8L637.0 698.8L636.0 686.8L635.1 674.8L634.3 662.7L633.8 650.7L633.3 638.5L633.1 626.4L633.0 614.3L633.0 602.1L633.2 589.9L633.6 577.8L634.1 565.6L634.8 553.4L635.7 541.3L636.7 529.1L637.8 517.0L639.1 504.9L640.6 492.8L642.2 480.7L644.0 468.6L646.0 456.6L648.1 444.6L650.3 432.7L652.7 420.8L655.3 409.0L658.0 397.2L660.8 385.4L663.8 373.8L667.0 362.1L670.3 350.6L673.8 339.1L677.4 327.7L681.1 316.3L685.0 305.1L689.0 293.9L693.2 282.8L697.5 271.8L702.0 260.9L706.5 250.0L711.3 239.3L716.1 228.7L721.1 218.2L726.3 207.8L731.5 197.5L736.9 187.3L742.4 177.3L748.0 167.3L753.8 157.5L759.7 147.8L765.7 138.3M1574.1 134.2L1579.4 143.7L1584.5 153.3L1589.6 163.1L1594.5 173.0L1599.3 183.0L1603.9 193.1M614.2 963.1L609.6 952.2L605.1 941.1L600.8 929.9L596.6 918.7L592.6 907.3L588.8 895.8L585.0 884.2L581.5 872.5L578.1 860.7L574.9 848.8L571.8 836.8L568.9 824.8L566.1 812.7L563.5 800.5L561.1 788.2L558.8 775.9L556.7 763.5L554.8 751.1L553.0 738.6L551.4 726.0L549.9 713.4L548.6 700.7L547.5 688.1L546.6 675.3L545.8 662.6L545.2 649.8L544.7 637.0L544.4 624.1L544.3 611.3L544.4 598.4L544.6 585.6L545.0 572.7L545.6 559.8L546.3 547.0L547.2 534.1L548.2 521.2L549.5 508.4L550.9 495.6L552.4 482.8L554.1 470.0L556.0 457.3L558.1 444.6L560.3 431.9L562.7 419.3L565.2 406.7L567.9 394.2L570.8 381.7L573.8 369.3L577.0 356.9L580.3 344.6L583.8 332.4L587.5 320.3L591.3 308.2L595.3 296.2L599.4 284.3L603.6 272.5L608.0 260.7L612.6 249.1L617.3 237.5L622.2 226.1L627.2 214.8L632.3 203.5L637.6 192.4L643.0 181.4L648.6 170.5L654.3 159.8L660.1 149.1L666.1 138.6M528.9 961.8L524.3 950.3L519.8 938.7L515.4 927.0L511.3 915.1L507.3 903.2L503.4 891.1L499.7 879.0L496.2 866.7L492.8 854.4L489.6 841.9L486.6 829.4L483.7 816.8L481.0 804.1L478.5 791.4L476.1 778.6L474.0 765.7L471.9 752.8L470.1 739.8L468.4 726.7L466.9 713.6L465.6 700.4L464.4 687.3L463.4 674.0L462.6 660.8L462.0 647.5L461.5 634.2L461.2 620.8L461.1 607.5L461.2 594.1L461.4 580.7L461.8 567.3L462.4 554.0L463.1 540.6L464.1 527.2L465.2 513.8L466.4 500.5L467.9 487.2L469.5 473.9L471.3 460.6L473.3 447.4L475.4 434.1L477.7 421.0L480.2 407.9L482.8 394.8L485.6 381.8L488.6 368.8L491.7 355.9L495.0 343.0L498.5 330.3L502.2 317.5L506.0 304.9L509.9 292.4L514.0 279.9L518.3 267.5L522.7 255.2L527.3 243.0L532.1 230.9L537.0 218.9L542.0 207.0L547.2 195.2L552.5 183.6L558.0 172.0L563.7 160.6L569.5 149.3L575.4 138.1M449.1 953.6L444.5 941.7L440.1 929.7L435.8 917.6L431.7 905.4L427.8 893.1L424.0 880.6L420.4 868.1L416.9 855.4L413.7 842.7L410.6 829.9L407.6 817.0L404.9 804.1L402.3 791.0L399.9 777.9L397.6 764.7L395.6 751.5L393.7 738.2L391.9 724.8L390.4 711.4L389.0 698.0L387.9 684.5L386.8 670.9L386.0 657.4L385.4 643.8L384.9 630.1L384.6 616.5L384.5 602.8L384.5 589.1L384.8 575.5L385.2 561.8L385.8 548.1L386.5 534.4L387.5 520.7L388.6 507.0L389.9 493.4L391.4 479.7L393.1 466.1L394.9 452.6L396.9 439.0L399.1 425.5L401.5 412.0L404.0 398.6L406.7 385.2L409.6 371.9L412.6 358.6L415.8 345.4L419.2 332.3L422.8 319.2L426.5 306.2L430.4 293.3L434.4 280.4L438.6 267.7L443.0 255.0L447.5 242.4L452.2 229.9L457.1 217.6L462.1 205.3L467.3 193.1L472.6 181.0L478.0 169.1L483.7 157.3L489.4 145.6L495.3 134.0M385.5 962.8L380.7 951.0L376.1 939.0L371.6 926.9L367.3 914.7L363.2 902.3L359.2 889.9L355.4 877.4L351.8 864.7L348.3 852.0L345.0 839.2L341.9 826.3L338.9 813.3L336.2 800.2L333.6 787.1L331.1 773.9L328.9 760.6L326.8 747.2L324.9 733.8L323.1 720.4L321.6 706.9L320.2 693.3L319.0 679.7L318.0 666.1L317.2 652.4L316.5 638.7L316.0 625.0L315.7 611.2L315.6 597.4L315.7 583.7L315.9 569.9L316.3 556.1L316.9 542.3L317.7 528.5L318.7 514.7L319.8 500.9L321.1 487.1L322.6 473.4L324.3 459.7L326.1 446.0L328.1 432.4L330.3 418.7L332.7 405.2L335.3 391.6L338.0 378.1L340.9 364.7L344.0 351.3L347.2 338.0L350.6 324.8L354.2 311.6L357.9 298.5L361.9 285.5L365.9 272.5L370.2 259.7L374.6 246.9L379.2 234.2L383.9 221.7L388.8 209.2L393.8 196.8L399.0 184.6L404.4 172.4L409.9 160.4L415.6 148.5L421.4 136.7M324.9 954.1L320.2 942.4L315.6 930.5L311.2 918.4L306.9 906.3L302.8 894.1L298.8 881.7L295.1 869.3L291.5 856.8L288.0 844.1L284.7 831.4L281.6 818.6L278.7 805.7L275.9 792.7L273.3 779.7L270.9 766.5L268.7 753.4L266.6 740.1L264.7 726.8L263.0 713.4L261.5 700.0L260.1 686.6L258.9 673.1L257.9 659.5L257.1 645.9L256.4 632.3L255.9 618.7L255.6 605.1L255.5 591.4L255.6 577.7L255.8 564.0L256.2 550.3L256.8 536.6L257.6 522.9L258.6 509.2L259.7 495.6L261.0 481.9L262.5 468.3L264.1 454.6L266.0 441.1L268.0 427.5L270.2 414.0L272.5 400.5L275.0 387.1L277.8 373.7L280.6 360.3L283.7 347.1L286.9 333.9L290.3 320.7L293.8 307.6L297.6 294.6L301.4 281.7L305.5 268.8L309.7 256.1L314.1 243.4L318.6 230.8L323.3 218.3L328.2 205.9L333.2 193.7L338.3 181.5L343.7 169.4L349.1 157.5L354.8 145.7L360.5 133.9M282.7 962.1L277.8 950.8L273.0 939.5L268.3 927.9L263.9 916.3L259.5 904.6L255.4 892.7L251.3 880.7L247.5 868.7L243.8 856.5L240.3 844.2L236.9 831.9L233.7 819.4L230.7 806.9L227.8 794.3L225.1 781.6L222.6 768.9L220.2 756.0L218.0 743.1L216.0 730.2L214.1 717.2L212.4 704.1L210.9 691.0L209.6 677.8L208.4 664.6L207.5 651.4L206.6 638.1L206.0 624.8L205.5 611.5L205.2 598.1L205.1 584.8L205.2 571.4L205.4 558.0L205.8 544.6L206.4 531.2L207.2 517.8L208.1 504.4L209.2 491.1L210.5 477.7L211.9 464.4L213.5 451.1L215.3 437.8L217.3 424.5L219.4 411.3L221.7 398.1L224.2 385.0L226.9 371.9L229.7 358.9L232.7 345.9L235.8 333.0L239.1 320.1L242.6 307.3L246.2 294.6L250.0 281.9L254.0 269.4L258.1 256.9L262.4 244.5L266.8 232.2L271.4 220.0L276.2 207.9L281.1 195.9L286.1 184.0L291.3 172.2L296.7 160.5L302.2 148.9L307.8 137.5M249.8 962.1L244.8 951.6L239.9 940.8L235.1 930.0L230.5 919.0L226.0 907.9L221.7 896.7L217.5 885.4L213.5 874.0L209.6 862.5L205.9 850.9L202.4 839.2L199.0 827.4L195.7 815.5L192.7 803.5L189.7 791.5L187.0 779.3L184.4 767.1L181.9 754.8L179.7 742.5L177.6 730.1L175.6 717.6L173.8 705.1L172.2 692.5L170.8 679.9L169.5 667.2L168.4 654.5L167.4 641.8L166.6 629.0L166.0 616.2L165.6 603.4L165.3 590.5L165.2 577.7L165.2 564.8L165.4 551.9L165.8 539.0L166.4 526.1L167.1 513.2L168.0 500.4L169.1 487.5L170.3 474.6L171.7 461.8L173.3 449.0L175.0 436.2L176.9 423.4L178.9 410.7L181.2 398.0L183.5 385.4L186.1 372.8L188.8 360.3L191.7 347.8L194.7 335.3L197.9 323.0L201.2 310.6L204.7 298.4L208.4 286.2L212.2 274.2L216.1 262.1L220.3 250.2L224.5 238.4L229.0 226.6L233.5 215.0L238.2 203.4L243.1 192.0L248.1 180.6L253.3 169.4L258.5 158.2L264.0 147.2L269.5 136.3M231.5 963.2L226.3 953.6L221.2 943.8L216.3 933.9L211.5 923.9L206.9 913.8L202.4 903.5L198.0 893.1L193.8 882.6L189.7 872.1L185.8 861.4L182.0 850.6L178.3 839.7L174.8 828.7L171.4 817.6L168.2 806.4L165.2 795.2L162.2 783.9L159.5 772.5L156.9 761.0L154.4 749.4L152.1 737.8L149.9 726.1L147.9 714.4L146.1 702.6L144.4 690.7L142.9 678.9L141.5 666.9L140.3 654.9L139.2 642.9L138.3 630.9L137.6 618.8L137.0 606.7L136.6 594.5L136.3 582.4L136.2 570.2L136.3 558.0L136.5 545.8L136.9 533.6L137.4 521.4L138.1 509.3L138.9 497.1L139.9 484.9L141.1 472.7L142.4 460.6L143.9 448.5L145.5 436.4L147.3 424.3L149.3 412.3L151.4 400.3L153.6 388.3L156.0 376.4L158.6 364.5L161.3 352.7L164.2 341.0L167.2 329.2L170.3 317.6L173.6 306.0L177.1 294.5L180.7 283.1L184.5 271.7L188.4 260.4L192.4 249.2L196.6 238.1L200.9 227.1L205.4 216.2L210.0 205.3L214.7 194.6L219.6 183.9L224.6 173.4L229.7 163.0L235.0 152.7L240.4 142.5L245.9 132.4M193.1 900.0L188.6 890.7L184.3 881.3L180.1 871.8L176.1 862.2L172.2 852.4L168.4 842.6L164.7 832.7L161.2 822.7L157.8 812.6L154.5 802.4L151.4 792.1L148.4 781.7L145.6 771.3L142.9 760.8L140.3 750.2L137.9 739.5L135.6 728.8L133.5 718.0L131.5 707.2L129.6 696.3L127.9 685.3L126.4 674.4L124.9 663.3L123.7 652.2L122.5 641.1L121.6 630.0L120.7 618.8L120.0 607.6L119.5 596.3L119.1 585.1L118.9 573.8L118.8 562.5L118.8 551.2L119.0 539.9L119.3 528.6L119.8 517.2L120.5 505.9L121.3 494.6L122.2 483.3L123.3 472.0L124.5 460.8L125.9 449.5L127.4 438.3L129.0 427.1L130.8 415.9L132.8 404.8L134.9 393.7L137.1 382.6L139.5 371.6L142.0 360.7L144.7 349.7L147.5 338.9L150.4 328.1L153.5 317.3L156.7 306.6L160.0 296.0L163.5 285.5L167.1 275.0L170.9 264.6L174.8 254.3L178.8 244.1L182.9 233.9L187.2 223.9L191.6 213.9L196.1 204.0L200.7 194.2L205.5 184.6L210.4 175.0L215.4 165.6L220.5 156.2L225.8 147.0L231.1 137.8M113.0 554.6L113.0 544.4L113.2 534.1L113.5 523.8L114.0 513.6L114.6 503.3L115.3 493.0L116.1 482.8L117.1 472.5L118.2 462.3L119.5 452.1L120.8 441.9L122.3 431.8L124.0 421.6L125.7 411.5L127.6 401.4L129.7 391.4L131.8 381.4L134.1 371.5L136.5 361.5L139.1 351.7L141.7 341.9L144.5 332.1L147.4 322.4L150.5 312.8L153.6 303.2L156.9 293.7L160.3 284.3L163.8 274.9L167.5 265.6L171.2 256.4L175.1 247.3L179.1 238.3L183.2 229.3L187.4 220.4L191.7 211.7L196.2 203.0L200.7 194.4L205.4 185.9L210.1 177.5L215.0 169.2L219.9 161.1L225.0 153.0L230.2 145.1L235.4 137.2M1548.5 626.9L1556.2 628.8L1563.6 630.7L1570.9 632.6L1577.9 634.5L1584.8 636.3L1591.4 638.2L1597.9 640.0L1604.1 641.7L1610.1 643.5L1615.9 645.2L1621.5 646.9L1626.9 648.5L1632.0 650.2L1636.9 651.8L1641.6 653.3L1646.1 654.9L1650.4 656.4L1654.4 657.8L1658.2 659.3L1661.7 660.7L1665.1 662.1L1668.2 663.4L1671.0 664.7L1673.7 666.0L1676.1 667.3L1678.3 668.5L1680.2 669.6L1681.9 670.8L1683.3 671.9L1684.6 673.0L1685.5 674.0L1686.3 675.0L1686.8 675.9L1687.1 676.9L1687.1 677.7M1544.1 647.9L1551.5 651.4L1558.6 654.9L1565.5 658.4L1572.3 661.9L1578.8 665.3L1585.1 668.7L1591.2 672.0L1597.1 675.3L1602.8 678.6L1608.3 681.8L1613.6 685.0L1618.7 688.2L1623.5 691.3L1628.1 694.4L1632.5 697.4L1636.7 700.4L1640.6 703.3L1644.4 706.2L1647.9 709.1L1651.1 711.9L1654.2 714.6L1657.0 717.3L1659.6 720.0L1662.0 722.6L1664.1 725.1L1666.0 727.6L1667.7 730.1L1669.1 732.5L1670.3 734.8L1671.3 737.1L1672.0 739.3L1672.5 741.5L1672.8 743.6L1672.8 745.6L1672.6 747.6M1537.9 668.2L1544.8 673.3L1551.5 678.3L1557.9 683.3L1564.2 688.3L1570.3 693.2L1576.1 698.1L1581.8 703.0L1587.2 707.8L1592.5 712.5L1597.5 717.2L1602.3 721.9L1606.9 726.5L1611.3 731.0L1615.5 735.5L1619.5 739.9L1623.2 744.3L1626.8 748.6L1630.1 752.9L1633.2 757.1L1636.0 761.2L1638.7 765.3L1641.1 769.3L1643.3 773.3L1645.3 777.2L1647.0 781.0L1648.5 784.7L1649.8 788.4L1650.9 792.0L1651.8 795.5L1652.4 799.0L1652.8 802.3L1652.9 805.6L1652.8 808.9L1652.5 812.0L1652.0 815.1L1651.3 818.1M1530.0 687.4L1536.2 694.0L1542.3 700.5L1548.1 707.0L1553.8 713.4L1559.3 719.8L1564.6 726.1L1569.6 732.3L1574.5 738.5L1579.2 744.7L1583.6 750.8L1587.9 756.8L1591.9 762.8L1595.7 768.7L1599.4 774.5L1602.8 780.3L1606.0 786.0L1609.0 791.7L1611.8 797.2L1614.3 802.7L1616.7 808.1L1618.8 813.4L1620.7 818.7L1622.4 823.9L1623.8 829.0L1625.1 834.0L1626.1 838.9L1626.9 843.7L1627.5 848.5L1627.9 853.1L1628.1 857.7L1628.0 862.2L1627.7 866.5L1627.2 870.8L1626.5 875.0L1625.5 879.1L1624.4 883.1L1623.0 887.0L1621.4 890.7M1520.3 705.4L1525.9 713.3L1531.2 721.2L1536.3 729.0L1541.3 736.7L1546.0 744.5L1550.6 752.1L1555.0 759.7L1559.1 767.2L1563.1 774.7L1566.9 782.1L1570.4 789.4L1573.8 796.6L1576.9 803.8L1579.9 810.9L1582.6 817.9L1585.2 824.9L1587.5 831.7L1589.6 838.5L1591.6 845.2L1593.3 851.8L1594.8 858.3L1596.0 864.7L1597.1 871.0L1598.0 877.2L1598.6 883.3L1599.1 889.4L1599.3 895.3L1599.3 901.1L1599.1 906.8L1598.7 912.4L1598.1 917.9L1597.3 923.3L1596.3 928.5L1595.0 933.7L1593.6 938.7L1591.9 943.6L1590.0 948.4L1587.9 953.1L1585.7 957.7L1583.2 962.1M1509.2 721.7L1513.9 730.9L1518.4 740.0L1522.7 749.1L1526.8 758.0L1530.7 767.0L1534.5 775.8L1538.0 784.6L1541.4 793.3L1544.5 802.0L1547.5 810.6L1550.2 819.1L1552.8 827.5L1555.2 835.8L1557.4 844.0L1559.3 852.2L1561.1 860.3L1562.7 868.2L1564.1 876.1L1565.2 883.9L1566.2 891.5L1567.0 899.1L1567.6 906.6L1567.9 913.9L1568.1 921.2L1568.1 928.3L1567.8 935.4L1567.4 942.3L1566.7 949.0L1565.9 955.7L1564.9 962.3M1496.8 736.3L1500.5 746.5L1504.1 756.7L1507.4 766.9L1510.6 776.9L1513.6 787.0L1516.4 796.9L1519.0 806.8L1521.5 816.5L1523.7 826.2L1525.8 835.9L1527.7 845.4L1529.3 854.8L1530.8 864.2L1532.1 873.5L1533.2 882.6L1534.2 891.7L1534.9 900.6L1535.4 909.5L1535.8 918.2L1535.9 926.9L1535.9 935.4L1535.6 943.8L1535.2 952.1L1534.6 960.2M1483.2 748.7L1485.9 759.9L1488.4 771.1L1490.7 782.2L1492.9 793.2L1494.9 804.1L1496.7 815.0L1498.3 825.8L1499.7 836.5L1501.0 847.1L1502.1 857.6L1503.0 868.0L1503.7 878.4L1504.2 888.6L1504.6 898.7L1504.7 908.8L1504.7 918.7L1504.5 928.5L1504.1 938.2L1503.6 947.8L1502.8 957.2M1468.6 759.0L1470.2 771.0L1471.6 782.9L1472.9 794.7L1473.9 806.5L1474.8 818.2L1475.6 829.8L1476.1 841.4L1476.5 852.8L1476.7 864.2L1476.7 875.4L1476.6 886.6L1476.3 897.7L1475.8 908.6L1475.1 919.5L1474.2 930.2L1473.2 940.8L1472.0 951.3L1470.7 961.7M1453.4 766.8L1453.8 779.4L1454.0 791.9L1454.1 804.4L1454.1 816.7L1453.8 829.0L1453.4 841.2L1452.8 853.3L1452.1 865.4L1451.2 877.3L1450.1 889.1L1448.9 900.8L1447.4 912.5L1445.9 924.0L1444.1 935.4L1442.2 946.7L1440.2 957.8M1437.6 772.2L1436.8 785.1L1435.9 798.1L1434.8 810.9L1433.5 823.7L1432.1 836.4L1430.5 849.0L1428.8 861.5L1426.9 873.9L1424.8 886.2L1422.6 898.4L1420.2 910.5L1417.7 922.5L1415.0 934.4L1412.2 946.2L1409.2 957.9M1421.5 774.9L1419.5 788.1L1417.4 801.2L1415.1 814.3L1412.6 827.3L1410.0 840.2L1407.2 853.0L1404.3 865.7L1401.2 878.3L1398.0 890.8L1394.6 903.2L1391.1 915.6L1387.4 927.8L1383.6 939.8L1379.6 951.8L1375.5 963.6M1405.5 775.1L1402.2 788.3L1398.9 801.4L1395.4 814.5L1391.7 827.5L1387.9 840.4L1383.9 853.2L1379.8 865.9L1375.5 878.5L1371.1 891.1L1366.6 903.5L1361.9 915.8L1357.1 928.0L1352.2 940.1L1347.1 952.1L1341.8 963.9M1389.6 772.6L1385.2 785.6L1380.6 798.5L1375.9 811.4L1371.0 824.2L1366.0 836.9L1360.9 849.6L1355.6 862.1L1350.2 874.5L1344.6 886.9L1339.0 899.1L1333.1 911.3L1327.2 923.3L1321.1 935.2L1314.9 947.0L1308.6 958.7M1374.2 767.5L1368.6 780.1L1362.9 792.7L1357.0 805.2L1351.0 817.6L1344.8 829.9L1338.5 842.2L1332.1 854.3L1325.6 866.4L1318.9 878.4L1312.1 890.3L1305.2 902.0L1298.1 913.7L1291.0 925.3L1283.7 936.7L1276.3 948.0L1268.8 959.3M1359.4 759.9L1352.7 771.9L1345.9 783.9L1338.9 795.8L1331.8 807.7L1324.5 819.5L1317.2 831.2L1309.7 842.8L1302.0 854.3L1294.3 865.7L1286.4 877.0L1278.4 888.3L1270.3 899.4L1262.1 910.4L1253.8 921.3L1245.4 932.1L1236.9 942.8L1228.2 953.4L1219.5 963.8M1345.6 749.9L1337.8 761.2L1329.9 772.4L1321.9 783.6L1313.8 794.7L1305.5 805.7L1297.1 816.6L1288.6 827.5L1279.9 838.3L1271.2 849.0L1262.3 859.6L1253.3 870.1L1244.2 880.5L1235.1 890.8L1225.8 901.1L1216.4 911.2L1206.9 921.2L1197.4 931.0L1187.7 940.8L1178.0 950.5L1168.1 960.0M1332.9 737.6L1324.1 748.0L1315.3 758.3L1306.3 768.5L1297.2 778.7L1287.9 788.8L1278.6 798.9L1269.1 808.8L1259.6 818.7L1249.9 828.5L1240.1 838.2L1230.2 847.9L1220.2 857.4L1210.1 866.9L1200.0 876.2L1189.7 885.5L1179.4 894.6L1168.9 903.7L1158.4 912.6L1147.8 921.5L1137.1 930.2L1126.4 938.8L1115.6 947.3L1104.7 955.7L1093.8 963.9M1321.4 723.3L1311.8 732.6L1302.1 741.8L1292.3 751.0L1282.3 760.1L1272.2 769.1L1262.0 778.1L1251.7 787.0L1241.3 795.8L1230.8 804.6L1220.2 813.3L1209.5 821.9L1198.7 830.4L1187.8 838.9L1176.8 847.2L1165.7 855.5L1154.6 863.6L1143.4 871.7L1132.1 879.7L1120.7 887.6L1109.3 895.4L1097.8 903.0L1086.3 910.6L1074.7 918.1L1063.0 925.4L1051.3 932.6L1039.6 939.8L1027.8 946.8L1016.0 953.6L1004.1 960.4M1311.5 707.1L1301.1 715.2L1290.6 723.2L1280.0 731.1L1269.3 739.0L1258.5 746.8L1247.5 754.6L1236.5 762.3L1225.4 770.0L1214.1 777.6L1202.8 785.1L1191.4 792.5L1179.8 799.9L1168.3 807.2L1156.6 814.4L1144.8 821.6L1133.0 828.6L1121.1 835.6L1109.1 842.5L1097.1 849.3L1085.0 856.0L1072.9 862.6L1060.7 869.1L1048.5 875.6L1036.2 881.9L1023.9 888.1L1011.5 894.3L999.2 900.3L986.7 906.2L974.3 912.0L961.8 917.7L949.4 923.3L936.9 928.8L924.4 934.1L911.9 939.4L899.4 944.5L886.8 949.5L874.3 954.4L861.9 959.2L849.4 963.8M233.9 964.4L229.6 959.8L225.5 955.0L221.6 950.2L218.0 945.2L214.5 940.1L211.2 934.8L208.2 929.5M1303.1 689.3L1292.1 696.0L1281.0 702.7L1269.8 709.3L1258.4 715.8L1247.0 722.4L1235.4 728.8L1223.7 735.2L1212.0 741.6L1200.1 747.9L1188.2 754.1L1176.2 760.3L1164.1 766.4L1151.9 772.4L1139.6 778.4L1127.3 784.3L1114.9 790.1L1102.4 795.9L1089.9 801.6L1077.3 807.2L1064.7 812.7L1052.0 818.2L1039.3 823.5L1026.5 828.8L1013.7 834.0L1000.9 839.2L988.0 844.2L975.1 849.2L962.2 854.0L949.3 858.8L936.3 863.5L923.4 868.0L910.4 872.5L897.5 876.9L884.5 881.2L871.6 885.4L858.6 889.5L845.7 893.4L832.8 897.3L819.9 901.1L807.0 904.8L794.2 908.3L781.4 911.8L768.6 915.1L755.9 918.4L743.3 921.5L730.6 924.5L718.1 927.4L705.5 930.2L693.1 932.8L680.7 935.4L668.4 937.8L656.1 940.1L644.0 942.3L631.9 944.4L619.9 946.4L607.9 948.2L596.1 949.9L584.4 951.5L572.7 953.0L561.2 954.4L549.8 955.6L538.4 956.7L527.2 957.7L516.1 958.6L505.1 959.3L494.3 960.0L483.5 960.4L472.9 960.8L462.5 961.1L452.1 961.2L441.9 961.2L431.9 961.1L421.9 960.8L412.2 960.4L402.6 959.9L393.1 959.3L383.8 958.6L374.6 957.7L365.6 956.7L356.8 955.6L348.1 954.4L339.7 953.0L331.3 951.5L323.2 949.9L315.2 948.2L307.5 946.3L299.8 944.4L292.4 942.3L285.2 940.1L278.2 937.8L271.3 935.3L264.6 932.8L258.2 930.1L251.9 927.3L245.8 924.4L240.0 921.4L234.3 918.3L228.8 915.0L223.6 911.7L218.5 908.2L213.7 904.7L209.1 901.0L204.7 897.2L200.5 893.3L196.5 889.4L192.7 885.3L189.1 881.1L185.8 876.8L182.7 872.4L179.8 867.9L177.1 863.3L174.7 858.7L172.4 853.9M1296.5 670.2L1285.0 675.4L1273.4 680.6L1261.6 685.8L1249.8 690.9L1237.8 696.0L1225.8 701.0L1213.6 706.0L1201.4 711.0L1189.1 715.9L1176.7 720.7L1164.2 725.5L1151.6 730.3L1138.9 734.9L1126.2 739.6L1113.4 744.2L1100.6 748.7L1087.6 753.1L1074.7 757.5L1061.7 761.9L1048.6 766.1L1035.5 770.4L1022.3 774.5L1009.1 778.6L995.9 782.6L982.7 786.5L969.4 790.4L956.1 794.2L942.8 797.9L929.5 801.5L916.1 805.1L902.8 808.6L889.5 812.0L876.2 815.3L862.9 818.6L849.5 821.8L836.3 824.9L823.0 827.9L809.8 830.8L796.5 833.6L783.4 836.4L770.2 839.0L757.1 841.6L744.1 844.1L731.1 846.5L718.1 848.8L705.2 851.1L692.4 853.2L679.6 855.2L666.9 857.2L654.3 859.1L641.7 860.8L629.3 862.5L616.9 864.1L604.6 865.6L592.4 866.9L580.3 868.2L568.2 869.4L556.3 870.5L544.5 871.5L532.8 872.4L521.2 873.2L509.8 874.0L498.4 874.6L487.2 875.1L476.1 875.5L465.2 875.8L454.3 876.0L443.6 876.2L433.1 876.2L422.7 876.1L412.4 875.9L402.3 875.7L392.3 875.3L382.5 874.8L372.9 874.3L363.4 873.6L354.1 872.8L345.0 872.0L336.0 871.0L327.2 870.0L318.5 868.8L310.1 867.6L301.8 866.2L293.7 864.8L285.8 863.3L278.1 861.6L270.6 859.9L263.3 858.1L256.2 856.2L249.2 854.2L242.5 852.1L236.0 849.9L229.6 847.6L223.5 845.3L217.6 842.8L211.9 840.3L206.4 837.7L201.1 834.9L196.1 832.1L191.2 829.3L186.6 826.3L182.2 823.2L178.0 820.1L174.0 816.9L170.3 813.6L166.7 810.2L163.4 806.8L160.4 803.2L157.5 799.6L154.9 795.9L152.5 792.2L150.3 788.4L148.4 784.5L146.7 780.5L145.2 776.4M1291.7 650.0L1279.8 653.7L1267.8 657.4L1255.7 661.0L1243.5 664.6L1231.2 668.2L1218.8 671.7L1206.3 675.2L1193.8 678.7L1181.1 682.1L1168.3 685.5L1155.5 688.8L1142.6 692.2L1129.6 695.4L1116.5 698.6L1103.4 701.8L1090.2 704.9L1077.0 708.0L1063.7 711.1L1050.3 714.0L1036.9 717.0L1023.5 719.9L1010.1 722.7L996.6 725.5L983.0 728.2L969.5 730.9L955.9 733.5L942.3 736.1L928.8 738.6L915.2 741.1L901.6 743.5L888.0 745.8L874.4 748.1L860.8 750.3L847.2 752.5L833.6 754.6L820.1 756.7L806.6 758.6L793.1 760.6L779.7 762.4L766.3 764.2L752.9 765.9L739.6 767.6L726.3 769.2L713.1 770.7L700.0 772.2L686.9 773.6L673.8 774.9L660.9 776.2L648.0 777.4L635.2 778.5L622.5 779.6L609.8 780.5L597.3 781.5L584.9 782.3L572.5 783.1L560.3 783.8L548.1 784.4L536.1 785.0L524.1 785.5L512.3 785.9L500.6 786.3L489.1 786.6L477.6 786.8L466.3 786.9L455.2 787.0L444.1 787.0L433.2 786.9L422.5 786.8L411.9 786.6L401.4 786.3L391.1 785.9L380.9 785.5L371.0 785.0L361.1 784.5L351.5 783.8L342.0 783.1L332.7 782.3L323.5 781.5L314.5 780.6L305.8 779.6L297.2 778.5L288.7 777.4L280.5 776.2L272.5 774.9L264.6 773.6L257.0 772.2L249.5 770.8L242.2 769.2L235.2 767.6L228.3 766.0L221.7 764.2L215.2 762.5L209.0 760.6L203.0 758.7L197.2 756.7L191.6 754.7L186.2 752.6L181.1 750.4L176.2 748.2L171.5 745.9L167.0 743.6L162.7 741.2L158.7 738.7L154.9 736.2L151.3 733.6L148.0 731.0L144.8 728.3L142.0 725.6L139.3 722.8L136.9 720.0L134.7 717.1L132.7 714.1L131.0 711.1L129.5 708.1L128.3 705.0L127.3 701.9L126.5 698.7M1288.8 629.0L1276.7 631.1L1264.5 633.2L1252.2 635.3L1239.8 637.3L1227.3 639.3L1214.7 641.3L1202.0 643.3L1189.2 645.2L1176.3 647.1L1163.3 649.0L1150.2 650.8L1137.1 652.6L1123.9 654.4L1110.7 656.1L1097.3 657.9L1084.0 659.6L1070.5 661.2L1057.0 662.8L1043.5 664.4L1029.9 666.0L1016.3 667.5L1002.7 669.0L989.0 670.4L975.3 671.8L961.6 673.2L947.8 674.6L934.1 675.9L920.3 677.1L906.5 678.4L892.8 679.6L879.0 680.7L865.3 681.8L851.5 682.9L837.8 683.9L824.1 684.9L810.4 685.9L796.7 686.8L783.1 687.7L769.5 688.5L756.0 689.3L742.5 690.0L729.0 690.7L715.6 691.4L702.3 692.0L689.0 692.6L675.8 693.2L662.7 693.7L649.6 694.1L636.6 694.5L623.7 694.9L610.9 695.2L598.2 695.5L585.5 695.7L573.0 695.9L560.6 696.1L548.2 696.2L536.0 696.2L523.9 696.3L511.9 696.2L500.0 696.2L488.3 696.1L476.6 695.9L465.1 695.7L453.8 695.5L442.5 695.2L431.5 694.8L420.5 694.5L409.7 694.1L399.1 693.6L388.6 693.1L378.3 692.6L368.1 692.0L358.1 691.3L348.3 690.7L338.6 690.0L329.1 689.2L319.8 688.4L310.6 687.6L301.7 686.7L292.9 685.8L284.3 684.8L275.9 683.8L267.7 682.8L259.7 681.7L251.8 680.6L244.2 679.4L236.8 678.2L229.6 677.0L222.6 675.7L215.8 674.4L209.2 673.1L202.8 671.7L196.6 670.3L190.7 668.8L184.9 667.3L179.4 665.8L174.1 664.3L169.0 662.7L164.2 661.0L159.6 659.4L155.2 657.7L151.0 656.0L147.1 654.2L143.4 652.4L139.9 650.6L136.7 648.8L133.7 646.9L130.9 645.0L128.4 643.1L126.1 641.1L124.0 639.1L122.2 637.1L120.6 635.1L119.2 633.0L118.1 630.9L117.3 628.8L116.6 626.7L116.2 624.5M1287.9 607.6L1275.7 608.1L1263.5 608.5L1251.1 609.0L1238.6 609.4L1226.0 609.8L1213.3 610.2L1200.5 610.6L1187.7 611.0L1174.7 611.3L1161.7 611.6L1148.6 611.9L1135.4 612.2L1122.1 612.5L1108.8 612.7L1095.4 613.0L1082.0 613.2L1068.5 613.4L1054.9 613.6L1041.3 613.7L1027.7 613.9L1014.0 614.0L1000.3 614.1L986.6 614.2L972.8 614.2L959.0 614.3L945.2 614.3L931.4 614.3L917.6 614.3L903.8 614.3L889.9 614.2L876.1 614.2L862.3 614.1L848.5 614.0L834.7 613.9L821.0 613.7L807.3 613.6L793.5 613.4L779.9 613.2L766.3 613.0L752.7 612.8L739.1 612.5L725.6 612.3L712.2 612.0L698.8 611.7L685.5 611.3L672.3 611.0L659.1 610.7L646.0 610.3L633.0 609.9L620.0 609.5L607.2 609.1L594.4 608.6L581.7 608.2L569.2 607.7L556.7 607.2L544.3 606.7L532.1 606.1L520.0 605.6L507.9 605.0L496.0 604.5L484.3 603.9L472.6 603.3L461.1 602.7L449.7 602.0L438.5 601.4L427.4 600.7L416.4 600.0L405.6 599.3L395.0 598.6L384.5 597.9L374.1 597.2L364.0 596.4L353.9 595.7L344.1 594.9L334.4 594.1L324.9 593.3L315.6 592.5L306.5 591.7L297.5 590.8L288.7 590.0L280.1 589.1L271.7 588.2L263.5 587.4L255.5 586.5L247.7 585.6L240.1 584.6L232.7 583.7L225.5 582.8L218.5 581.9L211.7 580.9L205.1 579.9L198.8 579.0L192.6 578.0L186.7 577.0L181.0 576.0L175.5 575.0L170.2 574.0L165.2 573.0L160.3 572.0L155.7 571.0L151.4 570.0L147.2 568.9L143.3 567.9L139.7 566.9L136.2 565.8L133.0 564.8L130.1 563.7L127.3 562.7L124.8 561.6L122.6 560.5L120.5 559.5L118.8 558.4L117.2 557.4L115.9 556.3L114.8 555.2L114.0 554.1L113.4 553.1L113.1 552.0L113.0 550.9M1288.9 586.1L1276.8 584.9L1264.6 583.7L1252.3 582.6L1239.9 581.4L1227.4 580.2L1214.8 579.0L1202.1 577.7L1189.3 576.5L1176.4 575.3L1163.5 574.1L1150.4 572.8L1137.3 571.6L1124.1 570.3L1110.9 569.1L1097.6 567.8L1084.2 566.5L1070.8 565.3L1057.3 564.0L1043.8 562.7L1030.2 561.4L1016.6 560.1L1002.9 558.9L989.3 557.6L975.6 556.3L961.9 555.0L948.1 553.7L934.4 552.4L920.6 551.1L906.9 549.8L893.1 548.5L879.3 547.3L865.6 546.0L851.9 544.7L838.1 543.4L824.4 542.1L810.7 540.8L797.1 539.6L783.5 538.3L769.9 537.0L756.4 535.8L742.9 534.5L729.4 533.3L716.0 532.0L702.7 530.8L689.4 529.6L676.2 528.4L663.1 527.1L650.0 525.9L637.1 524.7L624.2 523.6L611.3 522.4L598.6 521.2L586.0 520.0L573.4 518.9L561.0 517.7L548.7 516.6L536.4 515.5L524.3 514.4L512.3 513.3L500.5 512.2L488.7 511.1L477.1 510.1L465.6 509.0L454.2 508.0L443.0 507.0L431.9 506.0L421.0 505.0L410.2 504.0L399.6 503.1L389.1 502.1L378.7 501.2L368.6 500.3L358.6 499.4L348.7 498.5L339.1 497.6L329.6 496.8L320.2 496.0L311.1 495.1L302.1 494.3L293.4 493.6L284.8 492.8L276.4 492.1L268.2 491.3L260.1 490.6L252.3 490.0L244.7 489.3L237.3 488.6L230.0 488.0L223.0 487.4L216.2 486.8L209.6 486.3L203.2 485.7L197.1 485.2L191.1 484.7L185.4 484.2L179.9 483.7L174.6 483.3L169.5 482.9L164.6 482.5L160.0 482.1L155.6 481.7L151.5 481.4L147.5 481.1L143.8 480.8L140.3 480.5L137.1 480.3L134.1 480.0L131.3 479.8L128.8 479.7L126.5 479.5L124.4 479.4L122.6 479.3L121.0 479.2L119.6 479.1L118.5 479.0L117.6 479.0L117.0 479.0L116.6 479.0L116.5 479.1L116.5 479.2M1291.9 564.7L1280.1 561.9L1268.1 559.1L1256.0 556.3L1243.8 553.6L1231.5 550.8L1219.2 548.0L1206.7 545.2L1194.1 542.4L1181.4 539.6L1168.7 536.8L1155.9 534.1L1143.0 531.3L1130.0 528.5L1116.9 525.8L1103.8 523.0L1090.7 520.3L1077.4 517.6L1064.2 514.9L1050.8 512.2L1037.5 509.5L1024.0 506.8L1010.6 504.1L997.1 501.5L983.6 498.8L970.1 496.2L956.5 493.6L943.0 491.0L929.4 488.5L915.8 485.9L902.2 483.4L888.6 480.9L875.0 478.4L861.5 476.0L847.9 473.5L834.3 471.1L820.8 468.8L807.3 466.4L793.9 464.1L780.4 461.8L767.0 459.5L753.7 457.2L740.4 455.0L727.1 452.8L713.9 450.7L700.8 448.5L687.7 446.4L674.7 444.4L661.7 442.3L648.8 440.3L636.1 438.4L623.3 436.5L610.7 434.6L598.2 432.7L585.7 430.9L573.4 429.1L561.1 427.4L549.0 425.7L537.0 424.0L525.1 422.4L513.2 420.8L501.6 419.2L490.0 417.7L478.6 416.3L467.3 414.8L456.1 413.4L445.1 412.1L434.2 410.8L423.4 409.6L412.8 408.3L402.3 407.2L392.0 406.1L381.9 405.0L371.9 403.9L362.1 403.0L352.4 402.0L342.9 401.1L333.6 400.3L324.5 399.5L315.5 398.7L306.7 398.0L298.1 397.4L289.7 396.7L281.5 396.2L273.4 395.7L265.6 395.2L257.9 394.8L250.4 394.4L243.2 394.1L236.1 393.8L229.3 393.6L222.6 393.4L216.2 393.2L209.9 393.2L203.9 393.1L198.1 393.1L192.5 393.2L187.1 393.3L182.0 393.5L177.1 393.7L172.3 394.0L167.9 394.3L163.6 394.6L159.5 395.0L155.7 395.5L152.1 396.0L148.8 396.5L145.7 397.1L142.8 397.7L140.1 398.4L137.7 399.2L135.5 400.0L133.5 400.8L131.8 401.7L130.3 402.6L129.1 403.6L128.0 404.6L127.3 405.6L126.7 406.7L126.4 407.9L126.3 409.1L126.5 410.3M1296.8 543.9L1285.3 539.5L1273.7 535.1L1262.0 530.8L1250.2 526.4L1238.3 522.1L1226.2 517.7L1214.1 513.4L1201.9 509.1L1189.6 504.8L1177.2 500.5L1164.7 496.2L1152.2 492.0L1139.6 487.7L1126.8 483.5L1114.1 479.3L1101.2 475.2L1088.4 471.0L1075.4 466.9L1062.4 462.8L1049.4 458.7L1036.3 454.7L1023.1 450.7L1010.0 446.7L996.8 442.8L983.5 438.9L970.3 435.0L957.0 431.1L943.7 427.3L930.4 423.6L917.1 419.8L903.8 416.2L890.5 412.5L877.2 408.9L863.9 405.3L850.6 401.8L837.3 398.4L824.1 395.0L810.9 391.6L797.7 388.3L784.5 385.0L771.4 381.8L758.3 378.6L745.3 375.5L732.3 372.4L719.3 369.4L706.4 366.5L693.6 363.6L680.9 360.7L668.2 358.0L655.6 355.2L643.0 352.6L630.6 350.0L618.2 347.5L605.9 345.0L593.7 342.6L581.6 340.2L569.6 337.9L557.7 335.7L545.9 333.6L534.2 331.5L522.6 329.5L511.1 327.5L499.8 325.7L488.6 323.9L477.5 322.1L466.5 320.5L455.7 318.9L445.0 317.3L434.5 315.9L424.1 314.5L413.8 313.2L403.7 312.0L393.8 310.8L384.0 309.7L374.3 308.7L364.8 307.8L355.5 306.9L346.4 306.1L337.4 305.4L328.6 304.7L320.0 304.2L311.5 303.7L303.2 303.3L295.2 302.9L287.3 302.7L279.5 302.5L272.0 302.4L264.7 302.4L257.6 302.4L250.6 302.5L243.9 302.7L237.3 303.0L231.0 303.3L224.9 303.8L219.0 304.3L213.2 304.9L207.7 305.5L202.5 306.2L197.4 307.0L192.5 307.9L187.9 308.9L183.5 309.9L179.3 311.0L175.3 312.2L171.5 313.4L168.0 314.7L164.7 316.1L161.6 317.6L158.7 319.1L156.1 320.8L153.7 322.4L151.5 324.2L149.5 326.0L147.8 327.9L146.3 329.9L145.1 331.9L144.1 334.0L143.3 336.1L142.7 338.4L142.4 340.7L142.3 343.0L142.4 345.4M1303.5 523.8L1292.5 517.9L1281.5 512.0L1270.3 506.2L1258.9 500.3L1247.5 494.5L1236.0 488.7L1224.4 482.9L1212.7 477.1L1200.8 471.3L1188.9 465.6L1176.9 459.9L1164.9 454.2L1152.7 448.5L1140.5 442.9L1128.2 437.3L1115.8 431.8L1103.4 426.3L1090.9 420.8L1078.3 415.4L1065.7 410.0L1053.1 404.7L1040.4 399.4L1027.6 394.1L1014.8 388.9L1002.0 383.7L989.2 378.6L976.3 373.6L963.4 368.6L950.5 363.6L937.6 358.8L924.7 353.9L911.7 349.2L898.8 344.5L885.9 339.8L872.9 335.3L860.0 330.8L847.1 326.3L834.2 322.0L821.4 317.7L808.5 313.4L795.7 309.3L782.9 305.2L770.2 301.2L757.5 297.3L744.8 293.4L732.2 289.6L719.7 285.9L707.2 282.3L694.7 278.8L682.4 275.4L670.1 272.0L657.8 268.7L645.7 265.6L633.6 262.5L621.6 259.4L609.7 256.5L597.8 253.7L586.1 251.0L574.5 248.3L563.0 245.7L551.5 243.3L540.2 240.9L529.0 238.6L517.9 236.5L506.9 234.4L496.1 232.4L485.4 230.5L474.8 228.7L464.3 227.1L454.0 225.5L443.8 224.0L433.7 222.6L423.8 221.3L414.0 220.1L404.4 219.0L394.9 218.0L385.6 217.2L376.5 216.4L367.5 215.7L358.7 215.1L350.0 214.7L341.5 214.3L333.2 214.0L325.0 213.9L317.1 213.8L309.3 213.9L301.7 214.0L294.3 214.3L287.0 214.6L280.0 215.1L273.1 215.6L266.4 216.3L260.0 217.1L253.7 217.9L247.6 218.9L241.7 220.0L236.1 221.1L230.6 222.4L225.3 223.8L220.3 225.3L215.4 226.8L210.8 228.5L206.3 230.3L202.1 232.2L198.1 234.1L194.3 236.2L190.8 238.4L187.4 240.6L184.3 243.0L181.4 245.4L178.7 248.0L176.2 250.6L173.9 253.3L171.9 256.1L170.1 259.1L168.5 262.1L167.2 265.1L166.0 268.3L165.1 271.6L164.4 274.9L164.0 278.4L163.8 281.9M1312.0 504.9L1301.6 497.6L1291.2 490.3L1280.6 483.0L1270.0 475.7L1259.2 468.4L1248.3 461.2L1237.3 454.0L1226.2 446.8L1215.0 439.7L1203.7 432.6L1192.3 425.6L1180.8 418.5L1169.2 411.5L1157.6 404.6L1145.9 397.7L1134.1 390.9L1122.2 384.1L1110.3 377.3L1098.3 370.6L1086.3 364.0L1074.2 357.4L1062.0 350.9L1049.8 344.4L1037.6 338.0L1025.3 331.7L1013.0 325.4L1000.6 319.2L988.2 313.1L975.8 307.1L963.4 301.1L950.9 295.2L938.5 289.4L926.0 283.6L913.5 278.0L901.0 272.4L888.6 266.9L876.1 261.5L863.6 256.2L851.2 251.0L838.7 245.9L826.3 240.8L813.9 235.9L801.5 231.0L789.2 226.3L776.9 221.6L764.6 217.1L752.4 212.7L740.3 208.3L728.1 204.1L716.1 200.0L704.1 195.9L692.1 192.0L680.2 188.2L668.4 184.5L656.7 180.9L645.0 177.5L633.4 174.1L621.9 170.9L610.5 167.8L599.2 164.8L587.9 161.9L576.8 159.1L565.7 156.5L554.8 154.0L544.0 151.6L533.2 149.3L522.6 147.1L512.2 145.1L501.8 143.2L491.5 141.4L481.4 139.7L471.4 138.2L461.6 136.8L451.8 135.5L442.2 134.4L432.8 133.3L423.5 132.4L414.3 131.7L405.3 131.0L396.5 130.5L387.8 130.1M346.7 130.2L339.0 130.5L331.4 131.1L324.1 131.7L316.9 132.5L309.9 133.4L303.0 134.4L296.4 135.6L289.9 136.9L283.6 138.3L277.6 139.8L271.7 141.5L266.0 143.3L260.4 145.2L255.1 147.2L250.0 149.4L245.1 151.7L240.4 154.1L235.9 156.6L231.6 159.3L227.5 162.0L223.6 164.9L219.9 167.9L216.4 171.1L213.1 174.3L210.1 177.7L207.2 181.1L204.6 184.7L202.2 188.4L200.0 192.2L198.0 196.1L196.2 200.2L194.7 204.3L193.3 208.5L192.2 212.9L191.3 217.3L190.6 221.9M1322.0 487.4L1312.5 478.7L1302.8 470.1L1293.0 461.5L1283.1 452.9L1273.0 444.3L1262.9 435.8L1252.6 427.3L1242.2 418.9L1231.8 410.5L1221.2 402.1L1210.5 393.8L1199.8 385.5L1188.9 377.3L1178.0 369.1L1167.0 361.0L1155.9 352.9L1144.7 345.0L1133.5 337.0L1122.1 329.2L1110.8 321.4L1099.3 313.6L1087.8 306.0L1076.2 298.4L1064.6 290.9L1053.0 283.5L1041.3 276.2L1029.5 268.9L1017.7 261.8L1005.9 254.7L994.1 247.7L982.2 240.8L970.3 234.0L958.4 227.3L946.4 220.7L934.5 214.2L922.5 207.8L910.5 201.5L898.6 195.3L886.6 189.3L874.7 183.3L862.7 177.4L850.8 171.7L838.8 166.1L826.9 160.6L815.1 155.2L803.2 149.9L791.4 144.8L779.6 139.8L767.9 134.9L756.2 130.1M235.5 130.3L233.1 135.1L230.8 140.0L228.7 145.0L226.8 150.1L225.2 155.4L223.7 160.8L222.5 166.3M1333.5 471.5L1324.9 461.7L1316.0 451.8L1307.1 442.0L1298.0 432.2L1288.9 422.5L1279.6 412.8L1270.2 403.1L1260.6 393.5L1251.0 384.0L1241.3 374.5L1231.4 365.0L1221.5 355.6L1211.5 346.3L1201.3 337.0L1191.1 327.8L1180.8 318.6L1170.4 309.6L1159.9 300.6L1149.4 291.6L1138.8 282.8L1128.1 274.0L1117.3 265.4L1106.5 256.8L1095.6 248.3L1084.7 239.9L1073.6 231.6L1062.6 223.4L1051.5 215.3L1040.4 207.3L1029.2 199.4L1017.9 191.6L1006.7 183.9L995.4 176.3L984.1 168.9L972.7 161.5L961.4 154.3L950.0 147.2L938.6 140.2L927.2 133.4M1346.3 457.6L1338.6 446.7L1330.8 435.8L1322.8 424.9L1314.7 414.1L1306.5 403.3L1298.1 392.6L1289.7 381.9L1281.1 371.2L1272.4 360.7L1263.6 350.1L1254.7 339.7L1245.6 329.3L1236.5 319.0L1227.3 308.7L1217.9 298.5L1208.5 288.4L1199.0 278.4L1189.4 268.5L1179.7 258.6L1169.9 248.9L1160.0 239.2L1150.1 229.6L1140.1 220.1L1130.0 210.8L1119.9 201.5L1109.6 192.3L1099.4 183.3L1089.0 174.3L1078.6 165.5L1068.2 156.8L1057.7 148.2L1047.2 139.8L1036.6 131.4M1360.2 445.7L1353.6 433.9L1346.8 422.1L1339.9 410.4L1332.8 398.6L1325.6 387.0L1318.3 375.4L1310.9 363.8L1303.3 352.3L1295.6 340.9L1287.8 329.5L1279.9 318.2L1271.8 306.9L1263.7 295.8L1255.4 284.7L1247.0 273.7L1238.6 262.8L1230.0 251.9L1221.3 241.2L1212.6 230.6L1203.7 220.0L1194.8 209.6L1185.7 199.2L1176.6 189.0L1167.4 178.9L1158.1 168.9L1148.7 159.0L1139.3 149.2L1129.8 139.6L1120.2 130.1M1375.0 436.2L1369.5 423.6L1363.8 411.1L1358.0 398.6L1352.0 386.2L1346.0 373.8L1339.7 361.5L1333.4 349.2L1326.9 337.0L1320.3 324.9L1313.5 312.8L1306.7 300.8L1299.7 288.9L1292.6 277.1L1285.4 265.3L1278.0 253.6L1270.6 242.1L1263.0 230.6L1255.3 219.2L1247.5 207.9L1239.7 196.7L1231.7 185.7L1223.6 174.7L1215.4 163.9L1207.1 153.2L1198.8 142.6L1190.3 132.1M1390.5 429.0L1386.1 415.9L1381.6 402.9L1376.9 389.8L1372.2 376.9L1367.2 364.0L1362.1 351.1L1356.9 338.3L1351.6 325.6L1346.1 312.9L1340.5 300.4L1334.7 287.9L1328.8 275.4L1322.8 263.1L1316.7 250.8L1310.4 238.7L1304.0 226.6L1297.5 214.6L1290.9 202.8L1284.1 191.0L1277.2 179.4L1270.3 167.8L1263.2 156.4L1256.0 145.1L1248.7 134.0M1406.3 424.4L1403.2 411.0L1399.9 397.6L1396.4 384.2L1392.8 370.9L1389.1 357.6L1385.2 344.4L1381.1 331.3L1376.9 318.2L1372.6 305.2L1368.1 292.3L1363.5 279.5L1358.8 266.7L1353.9 254.1L1348.8 241.5L1343.7 229.0L1338.4 216.6L1332.9 204.3L1327.4 192.2L1321.7 180.1L1315.9 168.1L1309.9 156.3L1303.9 144.6L1297.7 133.0M1422.4 422.4L1420.5 408.8L1418.4 395.2L1416.2 381.7L1413.8 368.3L1411.2 354.9L1408.5 341.5L1405.7 328.2L1402.6 315.0L1399.5 301.9L1396.2 288.8L1392.7 275.8L1389.1 262.9L1385.3 250.1L1381.4 237.4L1377.4 224.8L1373.2 212.3L1368.8 199.8L1364.4 187.5L1359.7 175.3L1355.0 163.3L1350.1 151.3L1345.1 139.4M1438.5 423.0L1437.7 409.5L1436.9 395.9L1435.8 382.5L1434.6 369.1L1433.3 355.7L1431.8 342.4L1430.1 329.2L1428.3 316.0L1426.3 302.9L1424.1 289.9L1421.8 277.0L1419.3 264.1L1416.7 251.3L1413.9 238.7L1411.0 226.1L1407.9 213.6L1404.7 201.2L1401.3 189.0L1397.7 176.8L1394.0 164.8L1390.2 152.8L1386.2 141.0M1454.2 426.3L1454.7 412.9L1455.0 399.7L1455.2 386.5L1455.2 373.3L1455.0 360.2L1454.6 347.1L1454.1 334.1L1453.4 321.2L1452.6 308.3L1451.6 295.5L1450.4 282.8L1449.1 270.2L1447.5 257.7L1445.9 245.2L1444.0 232.9L1442.0 220.6L1439.8 208.5L1437.5 196.4L1435.0 184.5L1432.3 172.6L1429.5 160.9L1426.5 149.3L1423.4 137.9M1469.5 432.1L1471.1 419.2L1472.6 406.4L1473.9 393.6L1475.0 380.8L1476.0 368.2L1476.8 355.5L1477.4 343.0L1477.8 330.5L1478.1 318.0L1478.1 305.7L1478.1 293.4L1477.8 281.2L1477.4 269.0L1476.7 257.0L1476.0 245.0L1475.0 233.2L1473.9 221.4L1472.6 209.8L1471.1 198.2L1469.4 186.8L1467.6 175.4L1465.6 164.2L1463.4 153.1L1461.1 142.1L1458.6 131.3M1484.0 440.4L1486.7 428.1L1489.3 415.9L1491.7 403.8L1493.9 391.7L1495.9 379.6L1497.8 367.6L1499.5 355.6L1501.0 343.7L1502.3 331.9L1503.4 320.1L1504.4 308.4L1505.1 296.8L1505.7 285.3L1506.1 273.8L1506.4 262.4L1506.4 251.2L1506.2 240.0L1505.9 228.9L1505.4 217.9L1504.7 207.0L1503.8 196.2L1502.8 185.5L1501.5 174.9L1500.1 164.5L1498.5 154.1L1496.7 143.9L1494.8 133.8M1497.5 451.0L1501.3 439.6L1504.9 428.2L1508.3 416.8L1511.5 405.5L1514.6 394.3L1517.4 383.0L1520.1 371.9L1522.6 360.8L1524.9 349.7L1527.0 338.7L1529.0 327.8L1530.7 316.9L1532.2 306.1L1533.6 295.4L1534.7 284.8L1535.7 274.2L1536.5 263.8L1537.1 253.4L1537.5 243.1L1537.7 232.9L1537.7 222.8L1537.5 212.8L1537.1 202.9L1536.5 193.1L1535.8 183.4L1534.8 173.9L1533.7 164.4L1532.3 155.1L1530.8 145.9L1529.1 136.8M1509.9 463.9L1514.6 453.4L1519.1 443.0L1523.5 432.6L1527.7 422.3L1531.6 412.0L1535.4 401.7L1539.0 391.5L1542.4 381.3L1545.6 371.2L1548.6 361.1L1551.4 351.1L1554.0 341.2L1556.5 331.3L1558.7 321.5L1560.7 311.7L1562.5 302.1L1564.1 292.5L1565.6 283.0L1566.8 273.5L1567.8 264.2L1568.6 254.9L1569.2 245.8L1569.6 236.7L1569.8 227.7L1569.8 218.8L1569.6 210.1L1569.2 201.4L1568.6 192.8L1567.8 184.4L1566.8 176.0L1565.6 167.8L1564.2 159.7L1562.6 151.7L1560.8 143.8L1558.8 136.1M1520.9 478.8L1526.5 469.4L1531.9 460.1L1537.0 450.9L1542.0 441.6L1546.8 432.4L1551.4 423.3L1555.8 414.2L1560.0 405.1L1564.0 396.0L1567.8 387.0L1571.5 378.1L1574.9 369.2L1578.0 360.4L1581.0 351.6L1583.8 342.9L1586.4 334.3L1588.8 325.7L1590.9 317.2L1592.9 308.7L1594.6 300.4L1596.2 292.1L1597.5 283.9L1598.6 275.8L1599.5 267.7L1600.2 259.8L1600.7 251.9L1600.9 244.1L1601.0 236.4L1600.8 228.9L1600.5 221.4L1599.9 214.0L1599.1 206.7L1598.1 199.5L1596.9 192.5L1595.5 185.5L1593.8 178.7L1592.0 171.9L1589.9 165.3L1587.7 158.8L1585.2 152.5L1582.5 146.2L1579.6 140.1L1576.5 134.1M1530.4 495.4L1536.7 487.4L1542.8 479.3L1548.7 471.3L1554.4 463.3L1559.9 455.4L1565.2 447.5L1570.4 439.6L1575.3 431.7L1580.0 423.9L1584.5 416.1L1588.7 408.3L1592.8 400.7L1596.7 393.0L1600.3 385.4L1603.8 377.8L1607.0 370.3L1610.1 362.9L1612.9 355.5L1615.4 348.2L1617.8 340.9L1620.0 333.7L1621.9 326.6L1623.6 319.5L1625.1 312.5L1626.4 305.6L1627.5 298.8L1628.3 292.0L1628.9 285.3L1629.3 278.7L1629.5 272.2L1629.5 265.8L1629.2 259.4L1628.7 253.1L1628.0 247.0L1627.1 240.9L1626.0 234.9L1624.6 229.0L1623.0 223.3L1621.2 217.6L1619.2 212.0L1617.0 206.5L1614.5 201.1L1611.9 195.9L1609.0 190.7L1605.9 185.7L1602.6 180.7L1599.1 175.9L1595.3 171.2L1591.4 166.6L1587.2 162.2L1582.9 157.8M1538.3 513.6L1545.2 507.0L1551.9 500.3L1558.4 493.7L1564.7 487.1L1570.8 480.5L1576.7 473.9L1582.4 467.3L1587.8 460.8L1593.1 454.3L1598.2 447.8L1603.0 441.4L1607.7 435.0L1612.1 428.6L1616.3 422.3L1620.3 416.0L1624.1 409.7L1627.6 403.5L1631.0 397.4L1634.1 391.3L1637.0 385.2L1639.7 379.2L1642.1 373.2L1644.3 367.3L1646.3 361.5L1648.1 355.7L1649.6 350.0L1651.0 344.3L1652.0 338.7L1652.9 333.2L1653.5 327.7L1654.0 322.3L1654.1 317.0L1654.1 311.7L1653.8 306.5L1653.3 301.4L1652.6 296.4L1651.6 291.4L1650.4 286.5L1649.0 281.7L1647.4 277.0L1645.5 272.4L1643.4 267.9L1641.1 263.4L1638.5 259.0L1635.8 254.8L1632.8 250.6M1544.4 533.1L1551.8 527.9L1558.9 522.7L1565.9 517.6L1572.6 512.4L1579.2 507.3L1585.5 502.1L1591.7 497.0L1597.6 491.9L1603.3 486.8L1608.8 481.8L1614.1 476.7L1619.2 471.7L1624.1 466.7L1628.7 461.8L1633.1 456.8L1637.3 451.9L1641.3 447.0L1645.0 442.2L1648.5 437.4L1651.8 432.6L1654.9 427.9L1657.8 423.2L1660.4 418.5L1662.7 413.9L1664.9 409.3L1666.8 404.8L1668.5 400.3L1670.0 395.8L1671.2 391.4L1672.2 387.1L1672.9 382.8L1673.4 378.5L1673.7 374.3L1673.8 370.2L1673.6 366.1L1673.2 362.1L1672.5 358.1L1671.7 354.2L1670.5 350.4L1669.2 346.6L1667.6 342.9L1665.8 339.2M1548.7 553.6L1556.3 549.9L1563.8 546.3L1571.1 542.7L1578.2 539.0L1585.0 535.4L1591.7 531.8L1598.2 528.2L1604.4 524.6L1610.4 521.0L1616.2 517.4L1621.8 513.8L1627.2 510.3L1632.4 506.7L1637.3 503.2L1642.0 499.7L1646.5 496.2L1650.8 492.7L1654.8 489.2L1658.6 485.8L1662.2 482.4L1665.5 479.0L1668.6 475.6L1671.5 472.2L1674.2 468.9L1676.6 465.6L1678.8 462.3L1680.7 459.0L1682.4 455.8L1683.9 452.6L1685.1 449.4L1686.1 446.3L1686.9 443.2L1687.4 440.1L1687.7 437.1L1687.7 434.1L1687.5 431.1L1687.1 428.2L1686.4 425.3L1685.5 422.5M1551.0 574.7L1558.9 572.7L1566.5 570.6L1574.0 568.6L1581.2 566.6L1588.2 564.5L1595.1 562.5L1601.7 560.4L1608.1 558.4L1614.3 556.3L1620.3 554.2L1626.0 552.2L1631.6 550.1L1636.9 548.1L1642.0 546.0L1646.9 544.0L1651.5 541.9L1656.0 539.9L1660.1 537.8L1664.1 535.8L1667.8 533.8L1671.3 531.7L1674.6 529.7L1677.6 527.7L1680.4 525.7L1683.0 523.7L1685.3 521.7L1687.4 519.7L1689.2 517.8L1690.8 515.8L1692.2 513.9L1693.3 511.9L1694.2 510.0L1694.9 508.1L1695.3 506.2L1695.4 504.3L1695.4 502.5M1551.4 596.2L1559.2 595.8L1566.9 595.4L1574.4 595.0L1581.7 594.5L1588.7 594.1L1595.6 593.6L1602.3 593.2L1608.7 592.7L1614.9 592.2L1620.9 591.7L1626.7 591.2L1632.3 590.7L1637.6 590.1L1642.8 589.6L1647.7 589.0L1652.3 588.4L1656.8 587.9L1661.0 587.3L1665.0 586.7L1668.7 586.0L1672.3 585.4L1675.5 584.8L1678.6 584.1L1681.4 583.5L1684.0 582.8L1686.3 582.2L1688.4 581.5L1690.3 580.8L1691.9 580.1L1693.3 579.4L1694.5 578.7L1695.4 578.0L1696.1 577.2L1696.5 576.5L1696.7 575.7M1490.3 606.8L1494.9 607.3L1499.4 607.8L1503.9 608.4L1508.3 608.9L1512.7 609.4L1517.1 610.0L1521.4 610.5L1525.6 611.0L1529.9 611.5L1534.0 612.0L1538.1 612.5L1542.2 613.0L1546.2 613.5L1550.2 614.0M1489.2 614.6L1493.7 615.8L1498.1 617.0L1502.5 618.2L1506.9 619.4L1511.2 620.6L1515.4 621.8L1519.6 623.0L1523.8 624.2L1527.9 625.3L1532.0 626.5L1536.0 627.7L1540.0 628.8L1543.9 630.0L1547.8 631.1M1487.5 622.3L1491.9 624.2L1496.2 626.1L1500.4 627.9L1504.6 629.8L1508.8 631.6L1512.9 633.4L1517.0 635.3L1521.0 637.1L1525.0 638.9L1528.9 640.7L1532.8 642.5L1536.6 644.3L1540.4 646.1L1544.1 647.9M1485.3 629.9L1489.4 632.4L1493.6 634.8L1497.6 637.3L1501.6 639.8L1505.6 642.3L1509.6 644.7L1513.4 647.2L1517.3 649.7L1521.1 652.1L1524.8 654.5L1528.5 657.0L1532.2 659.4L1535.8 661.8L1539.3 664.2M1482.5 637.1L1486.5 640.2L1490.3 643.3L1494.2 646.4L1498.0 649.5L1501.7 652.5L1505.4 655.6L1509.1 658.7L1512.7 661.7L1516.2 664.8L1519.8 667.8L1523.2 670.9L1526.7 673.9L1530.0 676.9L1533.4 679.9M1479.3 643.9L1483.0 647.6L1486.6 651.3L1490.1 655.0L1493.6 658.6L1497.1 662.3L1500.5 666.0L1503.9 669.6L1507.3 673.2L1510.5 676.8L1513.8 680.5L1517.0 684.1L1520.1 687.6L1523.2 691.2L1526.3 694.8M1475.6 650.4L1478.9 654.6L1482.2 658.8L1485.5 663.1L1488.7 667.3L1491.8 671.5L1494.9 675.7L1498.0 679.8L1501.0 684.0L1504.0 688.2L1507.0 692.3L1509.8 696.4L1512.7 700.6L1515.5 704.7L1518.2 708.8M1471.4 656.4L1474.4 661.1L1477.4 665.8L1480.3 670.5L1483.1 675.2L1485.9 679.9L1488.7 684.6L1491.4 689.3L1494.1 694.0L1496.7 698.6L1499.3 703.3L1501.9 707.9L1504.4 712.5L1506.8 717.1L1509.2 721.7M1466.9 661.8L1469.5 667.0L1472.1 672.1L1474.6 677.3L1477.1 682.5L1479.5 687.6L1481.9 692.8L1484.2 697.9L1486.5 703.0L1488.8 708.1L1491.0 713.2L1493.1 718.3L1495.3 723.4L1497.3 728.5L1499.4 733.5M1462.0 666.6L1464.2 672.2L1466.3 677.8L1468.5 683.4L1470.5 688.9L1472.5 694.5L1474.5 700.0L1476.4 705.6L1478.3 711.1L1480.2 716.6L1482.0 722.1L1483.7 727.6L1485.5 733.1L1487.1 738.6L1488.7 744.0M1456.8 670.8L1458.6 676.7L1460.3 682.7L1461.9 688.6L1463.6 694.5L1465.2 700.5L1466.7 706.4L1468.2 712.2L1469.6 718.1L1471.1 724.0L1472.4 729.8L1473.7 735.7L1475.0 741.5L1476.3 747.3L1477.5 753.1M1451.4 674.3L1452.7 680.6L1453.9 686.8L1455.1 693.0L1456.3 699.2L1457.4 705.4L1458.5 711.6L1459.5 717.8L1460.5 724.0L1461.5 730.2L1462.4 736.3L1463.3 742.4L1464.1 748.5L1464.9 754.6L1465.6 760.7M1445.7 677.1L1446.5 683.6L1447.3 690.1L1448.0 696.5L1448.7 703.0L1449.4 709.4L1450.0 715.9L1450.6 722.3L1451.1 728.7L1451.6 735.1L1452.0 741.5L1452.4 747.8L1452.8 754.2L1453.1 760.5L1453.4 766.8M1439.9 679.2L1440.2 685.8L1440.5 692.5L1440.8 699.1L1441.0 705.7L1441.1 712.4L1441.3 719.0L1441.3 725.6L1441.4 732.1L1441.4 738.7L1441.3 745.2L1441.3 751.8L1441.1 758.3L1441.0 764.8L1440.8 771.3M1434.0 680.5L1433.9 687.2L1433.6 694.0L1433.4 700.7L1433.1 707.5L1432.8 714.2L1432.4 720.9L1432.0 727.6L1431.5 734.3L1431.0 741.0L1430.5 747.6L1429.9 754.3L1429.3 760.9L1428.7 767.5L1428.0 774.1M1428.1 681.0L1427.4 687.8L1426.7 694.6L1426.0 701.4L1425.2 708.2L1424.3 715.0L1423.5 721.7L1422.6 728.5L1421.6 735.2L1420.6 741.9L1419.6 748.6L1418.5 755.3L1417.4 762.0L1416.3 768.6L1415.1 775.3M1422.2 680.8L1421.0 687.6L1419.8 694.3L1418.6 701.1L1417.3 707.9L1415.9 714.6L1414.6 721.4L1413.2 728.1L1411.7 734.8L1410.2 741.5L1408.7 748.2L1407.2 754.9L1405.6 761.5L1403.9 768.1L1402.3 774.8M1416.4 679.7L1414.7 686.5L1413.0 693.2L1411.3 699.8L1409.5 706.5L1407.7 713.2L1405.8 719.8L1403.9 726.5L1402.0 733.1L1400.0 739.7L1398.0 746.3L1396.0 752.9L1393.9 759.5L1391.8 766.0L1389.6 772.6M1410.7 678.0L1408.5 684.5L1406.3 691.1L1404.1 697.6L1401.9 704.1L1399.6 710.7L1397.2 717.2L1394.9 723.7L1392.4 730.1L1390.0 736.6L1387.5 743.0L1385.0 749.5L1382.4 755.9L1379.8 762.3L1377.2 768.7M1405.1 675.4L1402.5 681.8L1399.9 688.1L1397.2 694.5L1394.5 700.8L1391.7 707.1L1388.9 713.4L1386.1 719.6L1383.2 725.9L1380.3 732.2L1377.4 738.4L1374.4 744.6L1371.4 750.8L1368.3 757.0L1365.2 763.2M1399.9 672.2L1396.8 678.3L1393.7 684.3L1390.6 690.4L1387.4 696.4L1384.2 702.5L1381.0 708.5L1377.7 714.5L1374.4 720.5L1371.1 726.5L1367.7 732.4L1364.3 738.4L1360.8 744.3L1357.3 750.2L1353.8 756.2M1394.9 668.3L1391.4 674.0L1387.9 679.7L1384.4 685.4L1380.8 691.2L1377.1 696.9L1373.5 702.5L1369.8 708.2L1366.1 713.9L1362.3 719.5L1358.5 725.2L1354.7 730.8L1350.8 736.4L1346.9 742.0L1343.0 747.6M1390.2 663.7L1386.4 669.0L1382.5 674.4L1378.5 679.7L1374.6 685.0L1370.5 690.3L1366.5 695.6L1362.4 700.9L1358.3 706.2L1354.1 711.5L1350.0 716.7L1345.7 722.0L1341.5 727.2L1337.2 732.4L1332.9 737.6M1386.0 658.5L1381.7 663.4L1377.5 668.3L1373.2 673.2L1368.9 678.1L1364.5 682.9L1360.1 687.8L1355.6 692.7L1351.2 697.5L1346.7 702.3L1342.1 707.2L1337.5 712.0L1332.9 716.8L1328.3 721.6L1323.6 726.3M1382.1 652.7L1377.6 657.1L1373.0 661.5L1368.4 666.0L1363.7 670.4L1359.0 674.7L1354.3 679.1L1349.5 683.5L1344.7 687.9L1339.9 692.2L1335.0 696.6L1330.1 700.9L1325.2 705.2L1320.3 709.5L1315.3 713.8M1378.7 646.4L1373.9 650.3L1369.0 654.2L1364.1 658.1L1359.2 662.0L1354.2 665.8L1349.2 669.7L1344.2 673.5L1339.1 677.4L1334.0 681.2L1328.8 685.0L1323.6 688.8L1318.4 692.6L1313.2 696.4L1307.9 700.2M1375.9 639.7L1370.8 643.0L1365.7 646.4L1360.5 649.7L1355.3 653.0L1350.1 656.3L1344.8 659.6L1339.6 662.9L1334.2 666.1L1328.9 669.4L1323.5 672.7L1318.1 675.9L1312.6 679.2L1307.1 682.4L1301.6 685.6M1373.5 632.6L1368.2 635.3L1362.9 638.1L1357.5 640.8L1352.1 643.5L1346.7 646.2L1341.3 648.9L1335.8 651.6L1330.3 654.3L1324.7 656.9L1319.1 659.6L1313.5 662.3L1307.9 664.9L1302.2 667.6L1296.5 670.2M1371.6 625.2L1366.2 627.3L1360.7 629.4L1355.2 631.5L1349.7 633.6L1344.1 635.7L1338.5 637.8L1332.9 639.8L1327.2 641.9L1321.5 643.9L1315.8 646.0L1310.0 648.0L1304.2 650.1L1298.4 652.1L1292.5 654.1M1370.4 617.6L1364.8 619.0L1359.3 620.5L1353.6 621.9L1348.0 623.4L1342.3 624.8L1336.6 626.2L1330.8 627.7L1325.1 629.1L1319.3 630.5L1313.4 631.9L1307.5 633.3L1301.6 634.7L1295.7 636.1L1289.7 637.5M1369.7 609.7L1364.1 610.5L1358.4 611.3L1352.8 612.1L1347.1 612.9L1341.3 613.7L1335.5 614.5L1329.7 615.2L1323.9 616.0L1318.0 616.8L1312.1 617.5L1306.2 618.3L1300.2 619.0L1294.2 619.8L1288.2 620.5M1369.5 601.8L1363.9 601.9L1358.3 602.1L1352.6 602.2L1346.9 602.3L1341.1 602.4L1335.3 602.5L1329.5 602.7L1323.7 602.8L1317.8 602.9L1311.9 603.0L1305.9 603.0L1300.0 603.1L1294.0 603.2L1287.9 603.3M1370.0 593.9L1364.4 593.3L1358.8 592.8L1353.2 592.3L1347.5 591.7L1341.8 591.2L1336.0 590.6L1330.3 590.0L1324.4 589.5L1318.6 588.9L1312.7 588.3L1306.8 587.8L1300.9 587.2L1294.9 586.6L1288.9 586.1M1371.0 586.0L1365.5 584.8L1360.0 583.6L1354.5 582.4L1348.9 581.2L1343.2 579.9L1337.6 578.7L1331.9 577.5L1326.2 576.3L1320.4 575.1L1314.6 573.9L1308.8 572.6L1302.9 571.4L1297.1 570.2L1291.2 568.9M1372.6 578.2L1367.3 576.4L1361.9 574.5L1356.5 572.7L1351.0 570.8L1345.5 568.9L1340.0 567.1L1334.4 565.2L1328.8 563.3L1323.2 561.5L1317.5 559.6L1311.9 557.7L1306.1 555.9L1300.4 554.0L1294.6 552.1M1374.8 570.7L1369.6 568.2L1364.4 565.7L1359.1 563.2L1353.9 560.7L1348.6 558.2L1343.2 555.7L1337.8 553.2L1332.4 550.7L1327.0 548.2L1321.5 545.7L1316.0 543.2L1310.4 540.7L1304.9 538.2L1299.3 535.7M1377.4 563.4L1372.5 560.3L1367.5 557.2L1362.5 554.1L1357.4 551.0L1352.3 547.9L1347.2 544.8L1342.1 541.7L1336.9 538.6L1331.7 535.4L1326.4 532.3L1321.1 529.2L1315.8 526.1L1310.5 523.0L1305.1 519.9M1380.6 556.5L1375.9 552.8L1371.2 549.1L1366.5 545.4L1361.7 541.7L1356.9 538.0L1352.0 534.4L1347.1 530.7L1342.2 527.0L1337.2 523.3L1332.2 519.6L1327.2 515.9L1322.2 512.3L1317.1 508.6L1312.0 504.9M1384.3 550.0L1379.9 545.8L1375.5 541.5L1371.0 537.3L1366.6 533.0L1362.0 528.8L1357.5 524.6L1352.9 520.3L1348.3 516.1L1343.6 511.9L1339.0 507.6L1334.2 503.4L1329.5 499.2L1324.7 495.0L1319.9 490.8M1388.4 544.0L1384.3 539.2L1380.3 534.5L1376.2 529.7L1372.0 525.0L1367.9 520.2L1363.7 515.5L1359.4 510.7L1355.1 506.0L1350.8 501.3L1346.5 496.5L1342.1 491.8L1337.7 487.1L1333.3 482.4L1328.8 477.7M1392.8 538.5L1389.2 533.3L1385.5 528.0L1381.8 522.8L1378.0 517.6L1374.2 512.4L1370.4 507.2L1366.5 502.0L1362.6 496.8L1358.7 491.6L1354.7 486.4L1350.7 481.2L1346.7 476.1L1342.6 470.9L1338.5 465.7M1397.7 533.6L1394.4 527.9L1391.2 522.3L1387.9 516.7L1384.5 511.0L1381.1 505.4L1377.7 499.8L1374.2 494.2L1370.7 488.6L1367.2 483.0L1363.6 477.4L1360.0 471.8L1356.4 466.2L1352.7 460.6L1349.0 455.0M1402.8 529.3L1400.0 523.3L1397.2 517.3L1394.3 511.3L1391.4 505.3L1388.4 499.3L1385.5 493.4L1382.4 487.4L1379.4 481.4L1376.3 475.5L1373.1 469.5L1370.0 463.5L1366.8 457.6L1363.5 451.7L1360.2 445.7M1408.3 525.7L1405.9 519.4L1403.5 513.1L1401.1 506.8L1398.6 500.5L1396.1 494.2L1393.6 487.9L1391.0 481.6L1388.4 475.4L1385.8 469.1L1383.1 462.9L1380.4 456.6L1377.6 450.4L1374.8 444.1L1372.0 437.9M1413.9 522.8L1412.0 516.2L1410.1 509.7L1408.1 503.1L1406.2 496.6L1404.1 490.1L1402.1 483.5L1400.0 477.0L1397.8 470.5L1395.7 464.0L1393.4 457.5L1391.2 451.0L1388.9 444.5L1386.6 438.1L1384.2 431.6M1419.7 520.6L1418.3 513.9L1416.9 507.1L1415.4 500.4L1413.9 493.7L1412.3 487.0L1410.8 480.3L1409.2 473.6L1407.5 466.9L1405.8 460.2L1404.1 453.5L1402.3 446.8L1400.5 440.2L1398.7 433.5L1396.8 426.9M1425.5 519.2L1424.7 512.3L1423.7 505.5L1422.8 498.6L1421.8 491.8L1420.7 485.0L1419.6 478.2L1418.5 471.3L1417.3 464.5L1416.1 457.7L1414.9 450.9L1413.6 444.1L1412.3 437.3L1410.9 430.6L1409.5 423.8M1431.5 518.5L1431.1 511.6L1430.7 504.7L1430.2 497.8L1429.7 490.9L1429.1 484.1L1428.5 477.2L1427.9 470.3L1427.2 463.4L1426.5 456.6L1425.8 449.7L1425.0 442.9L1424.2 436.0L1423.3 429.2L1422.4 422.4M1437.4 518.7L1437.5 511.8L1437.6 504.9L1437.6 498.0L1437.6 491.1L1437.5 484.2L1437.4 477.4L1437.3 470.5L1437.1 463.7L1436.9 456.8L1436.7 450.0L1436.4 443.1L1436.0 436.3L1435.7 429.5L1435.3 422.7M1443.2 519.6L1443.8 512.7L1444.4 505.9L1444.9 499.1L1445.4 492.3L1445.8 485.5L1446.2 478.7L1446.6 472.0L1446.9 465.2L1447.2 458.4L1447.4 451.6L1447.6 444.9L1447.8 438.1L1447.9 431.4L1448.0 424.7M1448.9 521.2L1450.0 514.6L1451.1 507.9L1452.1 501.2L1453.1 494.6L1454.0 487.9L1454.9 481.3L1455.7 474.6L1456.5 468.0L1457.2 461.3L1458.0 454.7L1458.6 448.1L1459.3 441.5L1459.8 434.9L1460.4 428.3M1454.5 523.7L1456.0 517.2L1457.6 510.7L1459.0 504.3L1460.5 497.8L1461.8 491.3L1463.2 484.9L1464.5 478.5L1465.8 472.0L1467.0 465.6L1468.1 459.2L1469.3 452.7L1470.4 446.3L1471.4 439.9L1472.4 433.5M1459.8 526.8L1461.8 520.6L1463.8 514.4L1465.7 508.2L1467.6 502.0L1469.4 495.8L1471.2 489.6L1472.9 483.5L1474.6 477.3L1476.3 471.1L1477.9 464.9L1479.5 458.8L1481.0 452.6L1482.5 446.5L1484.0 440.4M1464.8 530.6L1467.3 524.8L1469.6 518.9L1472.0 513.0L1474.3 507.1L1476.5 501.3L1478.8 495.4L1480.9 489.6L1483.0 483.7L1485.1 477.9L1487.2 472.0L1489.2 466.2L1491.1 460.4L1493.0 454.5L1494.9 448.7M1469.5 535.1L1472.4 529.6L1475.1 524.1L1477.9 518.7L1480.6 513.2L1483.2 507.7L1485.8 502.2L1488.4 496.7L1490.9 491.2L1493.4 485.8L1495.8 480.3L1498.2 474.8L1500.5 469.4L1502.8 463.9L1505.1 458.5M1473.8 540.3L1477.0 535.2L1480.2 530.1L1483.3 525.1L1486.3 520.0L1489.4 515.0L1492.3 509.9L1495.3 504.8L1498.1 499.8L1501.0 494.8L1503.8 489.7L1506.5 484.7L1509.2 479.7L1511.9 474.6L1514.5 469.6M1477.8 545.9L1481.3 541.4L1484.7 536.8L1488.2 532.2L1491.6 527.6L1494.9 523.0L1498.2 518.5L1501.5 513.9L1504.7 509.3L1507.8 504.7L1510.9 500.2L1514.0 495.6L1517.0 491.1L1520.0 486.5L1522.9 482.0M1481.2 552.1L1485.0 548.1L1488.8 544.0L1492.5 540.0L1496.2 535.9L1499.8 531.8L1503.4 527.8L1506.9 523.7L1510.4 519.7L1513.9 515.6L1517.3 511.6L1520.7 507.5L1524.0 503.5L1527.2 499.5L1530.4 495.4M1484.2 558.8L1488.2 555.3L1492.2 551.8L1496.2 548.3L1500.1 544.8L1504.0 541.3L1507.9 537.8L1511.7 534.3L1515.4 530.8L1519.1 527.3L1522.7 523.8L1526.4 520.3L1529.9 516.8L1533.4 513.4L1536.9 509.9M1486.6 565.8L1490.9 562.9L1495.1 560.0L1499.3 557.1L1503.4 554.2L1507.5 551.3L1511.6 548.4L1515.5 545.5L1519.5 542.6L1523.4 539.7L1527.3 536.8L1531.1 533.9L1534.8 531.0L1538.5 528.1L1542.2 525.2M1488.5 573.2L1493.0 570.9L1497.3 568.6L1501.7 566.4L1506.0 564.1L1510.2 561.8L1514.4 559.5L1518.6 557.2L1522.7 554.9L1526.8 552.6L1530.8 550.3L1534.7 548.1L1538.7 545.8L1542.5 543.5L1546.4 541.2M1489.9 580.8L1494.4 579.2L1498.9 577.6L1503.4 575.9L1507.8 574.3L1512.2 572.6L1516.5 571.0L1520.7 569.3L1525.0 567.7L1529.1 566.0L1533.3 564.4L1537.3 562.7L1541.4 561.1L1545.4 559.4L1549.3 557.7M1490.7 588.6L1495.3 587.7L1499.8 586.7L1504.4 585.7L1508.8 584.7L1513.3 583.7L1517.7 582.7L1522.0 581.7L1526.3 580.7L1530.5 579.7L1534.7 578.7L1538.9 577.7L1543.0 576.7L1547.0 575.7L1551.0 574.7M1490.9 596.6L1495.5 596.2L1500.1 595.9L1504.6 595.6L1509.1 595.3L1513.6 594.9L1518.0 594.6L1522.3 594.3L1526.6 593.9L1530.9 593.6L1535.1 593.3L1539.3 592.9L1543.4 592.6L1547.4 592.2L1551.5 591.9" fill="none" stroke="#8c8c86" stroke-width="1" stroke-dasharray="5.5 3.5" opacity="0.62"/>
<path d="M660.0 282.3L722.2 231.2L870.3 192.5L963.8 240.5L931.7 334.4L891.5 356.3L861.0 334.4L855.2 343.9L748.1 326.5L722.2 231.2M1135.8 154.0L1180.0 264.6L1147.7 314.6M693.1 528.1L690.4 499.3L801.5 502.4L904.0 551.0M904.0 551.0L929.8 595.0M929.8 595.0L806.8 633.5L777.0 641.8M929.8 595.0L846.0 792.5L804.0 942.0M1016.7 411.7L1105.9 434.4L1174.7 478.6L1219.6 571.2L1067.5 590.5M1438.0 189.7L1490.8 189.7L1552.5 213.0L1574.2 271.7L1611.2 315.3L1636.3 357.1L1661.5 369.6M1490.8 189.7L1497.5 251.3M1438.0 242.6L1497.5 251.3L1574.2 271.7M1539.8 154.0L1552.5 213.0M1590.0 174.3L1611.2 198.9M1515.2 356.3L1555.1 408.5L1623.1 472.5L1660.2 587.1L1637.7 684.8L1600.1 734.0L1552.2 730.5L1530.5 757.5L1495.6 786.1L1477.1 838.2L1507.5 844.8L1595.6 846.9L1616.5 823.1M1595.6 846.9L1597.4 886.4L1622.6 835.0M1433.9 600.5L1461.7 623.3L1502.8 635.5L1544.3 609.6L1573.7 562.5L1590.3 588.4L1556.5 638.9L1544.3 609.6M1690.6 630.0L1682.6 684.2L1677.4 708.0L1671.3 749.0M1615.0 884.3L1590.7 945.0M1195.3 520.3L1219.1 571.1L1190.0 576.4M1338.1 765.0L1347.4 741.0L1356.7 765.0M1347.4 741.0L1293.0 893.1L1288.4 945.0M1347.4 741.0L1391.4 859.2L1376.2 945.0M1490.0 804.2L1476.6 838.1L1490.0 842.3M237.0 490.8L237.6 526.5L240.2 584.7L242.9 650.9L210.6 685.3L166.0 572.0L160.3 560.4L162.7 514.1M131.7 575.7L125.7 638.4L155.5 773.4M113.2 598.8L117.2 643.7M400.0 653.0L355.3 643.0L351.9 706.4L325.4 717.8L305.6 780.7L267.4 860.3L236.3 870.0L265.5 945.0M351.9 706.4L400.0 749.0M267.4 860.3L311.7 945.0M582.4 489.0L587.7 503.5M380.0 649.0L405.7 654.3L422.3 704.0L411.1 759.5L380.0 734.5M652.5 694.5L633.4 708.0L598.5 820.4L575.4 860.3L558.3 865.4L537.4 855.4M371.3 842.0L451.3 896.3L533.3 934.0L572.2 945.0M371.3 842.0L416.5 908.4L436.0 945.0M725.3 776.3L744.7 795.6L685.7 850.2L725.3 776.3M1133.1 732.7L1104.6 791.7L1128.4 829.2L1092.7 881.6L1150.9 901.6" fill="none" stroke="#4a279f" stroke-width="1" stroke-linejoin="round"/>
<circle cx="905.0" cy="553.0" r="792.0" fill="none" stroke="#cfcfcf" stroke-width="1.2"/>
<path d="M1697.0 552.3L1697.0 558.9L1696.9 565.6L1696.7 572.2L1696.5 578.9L1696.3 585.5L1695.9 592.2L1695.5 598.8L1695.1 605.4L1694.6 612.1L1694.0 618.7L1693.4 625.3L1692.7 632.0L1691.9 638.6L1691.1 645.2L1690.2 651.8L1689.3 658.4L1688.3 665.0L1687.3 671.5L1686.2 678.1L1685.0 684.7L1683.8 691.2L1682.5 697.8L1681.1 704.3L1679.7 710.8L1678.3 717.3L1676.7 723.8L1675.2 730.3L1673.5 736.8L1671.8 743.2L1670.1 749.6L1668.3 756.1L1666.4 762.5L1664.4 768.9L1662.5 775.2L1660.4 781.6L1658.3 787.9L1656.1 794.2L1653.9 800.6L1651.6 806.8L1649.3 813.1L1646.9 819.3L1644.5 825.6L1642.0 831.8L1639.4 838.0L1636.8 844.1L1634.1 850.3L1631.4 856.4L1628.6 862.5L1625.8 868.5L1622.9 874.6L1619.9 880.6L1616.9 886.6L1613.9 892.6L1610.8 898.5L1607.6 904.4L1604.4 910.3L1601.1 916.2L1597.8 922.0L1594.4 927.8L1591.0 933.6L1587.5 939.4L1584.0 945.1L1580.4 950.8L1576.8 956.5L1573.1 962.1M237.2 963.3L233.5 957.7L229.8 952.1L226.2 946.4L222.7 940.7L219.2 934.9L215.8 929.1L212.4 923.3L209.1 917.5L205.8 911.7L202.6 905.8L199.4 899.9L196.3 893.9L193.3 887.9L190.2 882.0L187.3 875.9L184.4 869.9L181.6 863.8L178.8 857.7L176.0 851.6L173.4 845.5L170.8 839.3L168.2 833.2L165.7 827.0L163.2 820.7L160.8 814.5L158.5 808.2L156.2 802.0L154.0 795.7L151.8 789.3L149.7 783.0L147.7 776.7L145.7 770.3L143.7 763.9L141.9 757.5L140.0 751.1L138.3 744.6L136.6 738.2L134.9 731.7L133.3 725.3L131.8 718.8L130.4 712.3L128.9 705.8L127.6 699.2L126.3 692.7L125.1 686.1L123.9 679.6L122.8 673.0L121.7 666.4L120.7 659.9L119.8 653.3L118.9 646.7L118.1 640.1L117.4 633.5L116.7 626.8L116.0 620.2L115.5 613.6L114.9 606.9L114.5 600.3L114.1 593.7L113.8 587.0L113.5 580.4L113.3 573.7L113.1 567.1L113.0 560.4" fill="none" stroke="#e8e8e8" stroke-width="2.2"/>
<path d="M384.6 962.7L382.2 956.8L379.8 950.9L377.5 944.9L375.2 938.9L372.9 932.9L370.7 926.8L368.6 920.7L366.4 914.6L364.3 908.4L362.3 902.3L360.3 896.1L358.3 889.8L356.4 883.6L354.5 877.3L352.7 871.0L350.9 864.7L349.1 858.3L347.4 851.9L345.7 845.5L344.1 839.1L342.5 832.7L341.0 826.2L339.5 819.7L338.0 813.2L336.6 806.7L335.2 800.1L333.9 793.6L332.6 787.0L331.4 780.4L330.2 773.8L329.0 767.2L327.9 760.5L326.9 753.8L325.9 747.2L324.9 740.5L323.9 733.8L323.1 727.0L322.2 720.3L321.4 713.5L320.7 706.8L320.0 700.0L319.3 693.2L318.7 686.4L318.1 679.6L317.6 672.8L317.1 666.0L316.6 659.2L316.2 652.3L315.9 645.5L315.6 638.6L315.3 631.7L315.1 624.9L314.9 618.0L314.8 611.1L314.7 604.2L314.7 597.4L314.7 590.5L314.7 583.6L314.8 576.7L315.0 569.8L315.2 562.9L315.4 556.0L315.7 549.1L316.0 542.2L316.4 535.3L316.8 528.4L317.2 521.5L317.7 514.6L318.3 507.7L318.9 500.8L319.5 493.9L320.2 487.1L320.9 480.2L321.7 473.3L322.5 466.5L323.3 459.6L324.2 452.8L325.2 445.9L326.2 439.1L327.2 432.3L328.3 425.5L329.4 418.7L330.6 411.9L331.8 405.1L333.0 398.3L334.3 391.5L335.7 384.8L337.1 378.1L338.5 371.3L340.0 364.6L341.5 357.9L343.0 351.3L344.6 344.6L346.3 337.9L348.0 331.3L349.7 324.7L351.5 318.1L353.3 311.5L355.1 305.0L357.0 298.4L359.0 291.9L360.9 285.4L363.0 278.9L365.0 272.5L367.1 266.0L369.3 259.6L371.4 253.2L373.7 246.8L375.9 240.5L378.2 234.2L380.6 227.9L383.0 221.6L385.4 215.3L387.9 209.1L390.4 202.9L392.9 196.7L395.5 190.6L398.1 184.5L400.8 178.4L403.5 172.3L406.2 166.3L409.0 160.3L411.8 154.3L414.6 148.4L417.5 142.5L420.4 136.6L423.4 130.7" fill="none" stroke="#f2f2f2" stroke-width="2.2"/>
<path d="M1493.8 134.1L1494.8 139.1L1495.8 144.2L1496.7 149.3L1497.6 154.5L1498.4 159.6L1499.2 164.8L1500.0 170.1L1500.7 175.3L1501.3 180.6L1502.0 186.0L1502.5 191.3L1503.1 196.7L1503.5 202.1L1504.0 207.5L1504.3 213.0L1504.7 218.5L1505.0 224.0L1505.2 229.5L1505.4 235.1L1505.6 240.7L1505.7 246.3L1505.8 251.9L1505.8 257.5L1505.8 263.2L1505.7 268.9L1505.6 274.6L1505.4 280.4L1505.2 286.1L1504.9 291.9L1504.6 297.7L1504.3 303.5L1503.9 309.4L1503.5 315.2L1503.0 321.1L1502.5 327.0L1501.9 332.9L1501.3 338.9L1500.6 344.8L1499.9 350.8L1499.1 356.7L1498.3 362.7L1497.5 368.7L1496.6 374.8L1495.7 380.8L1494.7 386.8L1493.7 392.9L1492.6 399.0L1491.5 405.0L1490.3 411.1L1489.1 417.2L1487.9 423.4L1486.6 429.5L1485.2 435.6L1483.9 441.8L1482.4 447.9L1481.0 454.1L1479.4 460.2L1477.9 466.4L1476.3 472.6L1474.6 478.8L1473.0 485.0L1471.2 491.2L1469.4 497.4L1467.6 503.6L1465.8 509.8L1463.9 516.0L1461.9 522.2L1459.9 528.5L1457.9 534.7L1455.8 540.9L1453.7 547.1L1451.6 553.3L1449.4 559.6L1447.1 565.8L1444.8 572.0L1442.5 578.2L1440.2 584.5L1437.8 590.7L1435.3 596.9L1432.8 603.1L1430.3 609.3L1427.7 615.5L1425.1 621.7L1422.5 627.9L1419.8 634.1L1417.1 640.3L1414.3 646.4L1411.5 652.6L1408.7 658.8L1405.8 664.9L1402.9 671.1L1399.9 677.2L1397.0 683.3L1393.9 689.4L1390.9 695.5L1387.8 701.6L1384.6 707.7L1381.4 713.8L1378.2 719.8L1375.0 725.9L1371.7 731.9L1368.4 737.9L1365.0 743.9L1361.6 749.9L1358.2 755.9L1354.8 761.9L1351.3 767.8L1347.7 773.7L1344.2 779.6L1340.6 785.5L1336.9 791.4L1333.3 797.3L1329.6 803.1L1325.9 808.9L1322.1 814.7L1318.3 820.5L1314.5 826.3L1310.7 832.0L1306.8 837.7L1302.9 843.4L1298.9 849.1L1294.9 854.7L1290.9 860.4L1286.9 866.0L1282.8 871.5L1278.8 877.1L1274.6 882.6L1270.5 888.1L1266.3 893.6L1262.1 899.1L1257.9 904.5L1253.6 909.9L1249.3 915.3L1245.0 920.6L1240.7 925.9L1236.3 931.2L1231.9 936.5L1227.5 941.7L1223.1 946.9L1218.6 952.1L1214.2 957.3L1209.6 962.4" fill="none" stroke="#c81018" stroke-width="1"/>
<path d="M160.6 470.0C160.6 473.2 160.5 477.7 160.8 489.0C161.1 500.3 161.1 523.1 162.2 537.9C163.3 552.7 164.6 561.7 167.5 577.6C170.4 593.5 175.2 615.5 179.4 633.1C183.6 650.7 188.9 669.8 192.6 683.4C196.3 697.0 196.8 701.6 201.7 715.0C206.5 728.4 214.3 747.5 221.7 763.7C229.1 779.9 237.9 797.3 246.0 812.3C254.1 827.3 261.0 839.1 270.3 853.7C279.6 868.3 290.5 884.7 301.9 899.9C313.2 915.1 330.9 935.8 338.4 945.0C345.9 954.2 345.6 953.3 347.0 955.0" fill="none" stroke="#f0141e" stroke-width="1.9"/>
<path d="M1558.0 135.0C1559.8 138.2 1564.0 145.4 1569.0 154.2C1574.0 163.0 1581.3 173.2 1588.0 188.0C1594.7 202.8 1602.9 224.7 1609.2 243.0C1615.5 261.3 1621.2 279.7 1626.1 298.0C1631.0 316.3 1635.5 335.4 1638.8 353.0C1642.1 370.6 1644.4 386.9 1646.0 403.8C1647.6 420.7 1648.2 436.3 1648.5 454.6C1648.8 472.9 1648.1 499.6 1647.8 513.8C1647.5 528.0 1647.8 526.4 1646.7 540.0C1645.7 553.6 1644.5 577.1 1641.5 595.7C1638.5 614.3 1633.7 633.6 1628.7 651.5C1623.7 669.4 1616.5 689.1 1611.5 703.0C1606.5 716.9 1604.4 722.2 1598.7 735.0C1593.0 747.8 1585.1 763.9 1577.2 780.0C1569.3 796.1 1561.5 813.7 1551.5 831.6C1541.5 849.5 1526.9 873.1 1517.2 887.3C1507.5 901.5 1501.4 907.4 1493.6 917.0C1485.8 926.6 1475.5 938.7 1470.2 945.0C1464.9 951.3 1463.4 953.3 1462.0 955.0" fill="none" stroke="#f0141e" stroke-width="1.9"/>
<path d="M170.0 258.2L170.7 256.6L171.5 255.0L172.3 253.5L173.2 252.0L174.2 250.5L175.2 249.0L176.2 247.6L177.3 246.2L178.5 244.8L179.7 243.4L181.0 242.0L182.4 240.7L183.8 239.4L185.2 238.1L186.7 236.9L188.3 235.6L189.9 234.4L191.6 233.2L193.3 232.1L195.1 230.9L196.9 229.8L198.8 228.7L200.7 227.7L202.7 226.6L204.7 225.6L206.8 224.6L209.0 223.7L211.2 222.7L213.5 221.8L215.8 221.0L218.1 220.1L220.5 219.3L223.0 218.4L225.5 217.7L228.1 216.9L230.7 216.2L233.4 215.5L236.1 214.8L238.9 214.1L241.7 213.5L244.6 212.9L247.5 212.3L250.5 211.8L253.5 211.2L256.6 210.7L259.7 210.3L262.9 209.8L266.1 209.4L269.4 209.0L272.7 208.6L276.1 208.3L279.5 208.0L283.0 207.7L286.5 207.4L290.0 207.2L293.7 206.9L297.3 206.8L301.0 206.6L304.8 206.5L308.5 206.4L312.4 206.3L316.3 206.2L320.2 206.2L324.2 206.2L328.2 206.2L332.2 206.3L336.3 206.4L340.5 206.5L344.7 206.6L348.9 206.7L353.2 206.9L357.5 207.1L361.8 207.4L366.2 207.6L370.7 207.9L375.2 208.2L379.7 208.6L384.2 208.9L388.8 209.3L393.5 209.8L398.2 210.2L402.9 210.7L407.6 211.2L412.4 211.7L417.3 212.3L422.1 212.8L427.0 213.4L432.0 214.1L437.0 214.7L442.0 215.4L447.0 216.1L452.1 216.8L457.2 217.6L462.4 218.4L467.6 219.2L472.8 220.0L478.0 220.9L483.3 221.7L488.6 222.7L494.0 223.6L499.4 224.6L504.8 225.5L510.2 226.5L515.7 227.6L521.2 228.6L526.7 229.7L532.3 230.8L537.9 232.0L543.5 233.1L549.1 234.3L554.8 235.5L560.5 236.7L566.2 238.0L571.9 239.3L577.7 240.6L583.5 241.9L589.3 243.2L595.2 244.6L601.1 246.0L607.0 247.4L612.9 248.9L618.8 250.3L624.8 251.8L630.7 253.3L636.8 254.9L642.8 256.4L648.8 258.0L654.9 259.6L661.0 261.2L667.1 262.9L673.2 264.6L679.3 266.2L685.5 268.0L691.6 269.7L697.8 271.5L704.0 273.2L710.2 275.0L716.5 276.9L722.7 278.7L729.0 280.6L735.3 282.4L741.5 284.3L747.8 286.3L754.2 288.2L760.5 290.2L766.8 292.2L773.2 294.2L779.5 296.2L785.9 298.2L792.2 300.3L798.6 302.4L805.0 304.5L811.4 306.6L817.8 308.7L824.2 310.9L830.6 313.1L837.1 315.3L843.5 317.5L849.9 319.7L856.4 322.0L862.8 324.2L869.2 326.5L875.7 328.8L882.1 331.1L888.6 333.5L895.0 335.8L901.5 338.2L908.0 340.6L914.4 343.0L920.9 345.4L927.3 347.8L933.8 350.3L940.2 352.7L946.6 355.2L953.1 357.7L959.5 360.2L966.0 362.7L972.4 365.3L978.8 367.8L985.2 370.4L991.6 373.0L998.0 375.6L1004.4 378.2L1010.8 380.8L1017.2 383.4L1023.6 386.1L1029.9 388.7L1036.3 391.4L1042.6 394.1L1049.0 396.8L1055.3 399.5L1061.6 402.2L1067.9 404.9L1074.2 407.7L1080.5 410.4L1086.7 413.2L1093.0 416.0L1099.2 418.7L1105.4 421.5L1111.6 424.3L1117.8 427.2L1124.0 430.0L1130.2 432.8L1136.3 435.7L1142.4 438.5L1148.5 441.4L1154.6 444.3L1160.7 447.1L1166.7 450.0L1172.7 452.9L1178.7 455.8L1184.7 458.7L1190.7 461.6L1196.6 464.6L1202.5 467.5L1208.4 470.4L1214.3 473.4L1220.2 476.3L1226.0 479.3L1231.8 482.2L1237.6 485.2L1243.3 488.2L1249.0 491.1L1254.7 494.1L1260.4 497.1L1266.1 500.1L1271.7 503.1L1277.3 506.1L1282.8 509.1L1288.4 512.1L1293.9 515.1L1299.3 518.1L1304.8 521.1L1310.2 524.1L1315.6 527.2L1320.9 530.2L1326.2 533.2L1331.5 536.2L1336.8 539.2L1342.0 542.3L1347.2 545.3L1352.3 548.3L1357.5 551.3L1362.6 554.4L1367.6 557.4L1372.6 560.4L1377.6 563.4L1382.5 566.5L1387.5 569.5L1392.3 572.5L1397.2 575.5L1402.0 578.6L1406.7 581.6L1411.4 584.6L1416.1 587.6L1420.8 590.6L1425.4 593.6L1429.9 596.6L1434.5 599.6L1438.9 602.6L1443.4 605.6L1447.8 608.6L1452.1 611.6L1456.5 614.6L1460.7 617.5L1465.0 620.5L1469.2 623.5L1473.3 626.4L1477.4 629.4L1481.5 632.3L1485.5 635.3L1489.5 638.2L1493.4 641.2L1497.3 644.1L1501.1 647.0L1504.9 649.9L1508.7 652.8L1512.4 655.7L1516.0 658.6L1519.6 661.5L1523.2 664.3L1526.7 667.2L1530.2 670.1L1533.6 672.9L1537.0 675.7L1540.3 678.6L1543.6 681.4L1546.8 684.2L1550.0 687.0L1553.1 689.8L1556.2 692.5L1559.2 695.3L1562.2 698.1L1565.2 700.8L1568.0 703.5L1570.9 706.3L1573.6 709.0L1576.4 711.7L1579.1 714.3L1581.7 717.0L1584.3 719.7L1586.8 722.3L1589.3 725.0L1591.7 727.6L1594.0 730.2L1596.4 732.8L1598.6 735.4L1600.8 737.9L1603.0 740.5L1605.1 743.0L1607.1 745.6L1609.1 748.1L1611.1 750.6L1613.0 753.0L1614.8 755.5L1616.6 757.9L1618.3 760.4L1620.0 762.8L1621.6 765.2L1623.2 767.6L1624.7 770.0L1626.1 772.3L1627.5 774.6L1628.9 777.0L1630.2 779.3L1631.4 781.6L1632.6 783.8L1633.7 786.1L1634.8 788.3L1635.8 790.5L1636.7 792.7L1637.6 794.9L1638.5 797.1" fill="none" stroke="#a6a6ff" stroke-width="2.6"/>
<defs><radialGradient id="gu"><stop offset="0" stop-color="#fff" stop-opacity="0.95"/><stop offset="0.22" stop-color="#aab8ff" stop-opacity="0.9"/><stop offset="0.55" stop-color="#aab8ff" stop-opacity="0.32"/><stop offset="1" stop-color="#aab8ff" stop-opacity="0"/></radialGradient><radialGradient id="gc"><stop offset="0" stop-color="#fff" stop-opacity="0.95"/><stop offset="0.22" stop-color="#a8e8f0" stop-opacity="0.9"/><stop offset="0.55" stop-color="#a8e8f0" stop-opacity="0.32"/><stop offset="1" stop-color="#a8e8f0" stop-opacity="0"/></radialGradient><radialGradient id="gy"><stop offset="0" stop-color="#fff" stop-opacity="0.95"/><stop offset="0.22" stop-color="#f4ecb0" stop-opacity="0.9"/><stop offset="0.55" stop-color="#f4ecb0" stop-opacity="0.32"/><stop offset="1" stop-color="#f4ecb0" stop-opacity="0"/></radialGradient><radialGradient id="gp"><stop offset="0" stop-color="#fff" stop-opacity="0.95"/><stop offset="0.22" stop-color="#f0b0b0" stop-opacity="0.9"/><stop offset="0.55" stop-color="#f0b0b0" stop-opacity="0.32"/><stop offset="1" stop-color="#f0b0b0" stop-opacity="0"/></radialGradient><radialGradient id="gr"><stop offset="0" stop-color="#fff" stop-opacity="0.95"/><stop offset="0.22" stop-color="#ff6a6a" stop-opacity="0.9"/><stop offset="0.55" stop-color="#ff6a6a" stop-opacity="0.32"/><stop offset="1" stop-color="#ff6a6a" stop-opacity="0"/></radialGradient><radialGradient id="gv"><stop offset="0" stop-color="#fff" stop-opacity="0.95"/><stop offset="0.22" stop-color="#b49cf0" stop-opacity="0.9"/><stop offset="0.55" stop-color="#b49cf0" stop-opacity="0.32"/><stop offset="1" stop-color="#b49cf0" stop-opacity="0"/></radialGradient><radialGradient id="gg"><stop offset="0" stop-color="#fff" stop-opacity="0.95"/><stop offset="0.22" stop-color="#c8c8c8" stop-opacity="0.9"/><stop offset="0.55" stop-color="#c8c8c8" stop-opacity="0.32"/><stop offset="1" stop-color="#c8c8c8" stop-opacity="0"/></radialGradient><radialGradient id="go"><stop offset="0" stop-color="#fff" stop-opacity="0.95"/><stop offset="0.22" stop-color="#ffc098" stop-opacity="0.9"/><stop offset="0.55" stop-color="#ffc098" stop-opacity="0.32"/><stop offset="1" stop-color="#ffc098" stop-opacity="0"/></radialGradient><radialGradient id="gn"><stop offset="0" stop-color="#fff" stop-opacity="0.95"/><stop offset="0.22" stop-color="#a8dcc0" stop-opacity="0.9"/><stop offset="0.55" stop-color="#a8dcc0" stop-opacity="0.32"/><stop offset="1" stop-color="#a8dcc0" stop-opacity="0"/></radialGradient></defs>
<circle cx="722.2" cy="231.2" r="6.2" fill="url(#gu)" opacity="1"/>
<circle cx="870.3" cy="191.8" r="6.2" fill="url(#gc)" opacity="1"/>
<circle cx="931.7" cy="334.4" r="8.2" fill="url(#gy)" opacity="1"/>
<circle cx="748.1" cy="326.5" r="4.9" fill="url(#gp)" opacity="0.9"/>
<circle cx="861" cy="334.4" r="4.9" fill="url(#gu)" opacity="0.9"/>
<circle cx="855.2" cy="343.9" r="3.9" fill="url(#gp)" opacity="0.8"/>
<circle cx="891.5" cy="356.3" r="4.9" fill="url(#gy)" opacity="0.9"/>
<circle cx="883.5" cy="221.4" r="3.9" fill="url(#gy)" opacity="0.8"/>
<circle cx="880.9" cy="226.7" r="3.9" fill="url(#gy)" opacity="0.8"/>
<circle cx="860.3" cy="212.7" r="2.9" fill="url(#gp)" opacity="0.62"/>
<circle cx="774.3" cy="229.4" r="2.9" fill="url(#gc)" opacity="0.62"/>
<circle cx="796.5" cy="252.4" r="3.9" fill="url(#gp)" opacity="0.8"/>
<circle cx="772.4" cy="271.2" r="3.9" fill="url(#gp)" opacity="0.8"/>
<circle cx="781.2" cy="269.6" r="2.9" fill="url(#gc)" opacity="0.62"/>
<circle cx="760" cy="275.1" r="2.9" fill="url(#gc)" opacity="0.62"/>
<circle cx="830.6" cy="273.3" r="3.9" fill="url(#gp)" opacity="0.8"/>
<circle cx="858.4" cy="299.5" r="2.9" fill="url(#gy)" opacity="0.62"/>
<circle cx="832.5" cy="305.6" r="2.9" fill="url(#gc)" opacity="0.62"/>
<circle cx="883.5" cy="301.6" r="2.9" fill="url(#gg)" opacity="0.62"/>
<circle cx="892.3" cy="314.6" r="2.9" fill="url(#gp)" opacity="0.62"/>
<circle cx="811.3" cy="338.4" r="2.9" fill="url(#gv)" opacity="0.62"/>
<circle cx="790.2" cy="350.3" r="3.9" fill="url(#gp)" opacity="0.8"/>
<circle cx="798.1" cy="360.6" r="3.9" fill="url(#gp)" opacity="0.8"/>
<circle cx="746" cy="157.4" r="3.9" fill="url(#gc)" opacity="0.8"/>
<circle cx="704.4" cy="155.3" r="2.9" fill="url(#gy)" opacity="0.62"/>
<circle cx="707.6" cy="184.4" r="2.9" fill="url(#gg)" opacity="0.62"/>
<circle cx="679.8" cy="189.7" r="2.9" fill="url(#gu)" opacity="0.62"/>
<circle cx="684.6" cy="209.5" r="2.9" fill="url(#gg)" opacity="0.62"/>
<circle cx="761.3" cy="207.4" r="2.9" fill="url(#gg)" opacity="0.62"/>
<circle cx="895.4" cy="185.2" r="2.9" fill="url(#gy)" opacity="0.62"/>
<circle cx="870" cy="398" r="2.9" fill="url(#gg)" opacity="0.62"/>
<circle cx="963.8" cy="240.5" r="6.2" fill="url(#gc)" opacity="1"/>
<circle cx="976.2" cy="246.6" r="3.9" fill="url(#gr)" opacity="0.8"/>
<circle cx="1016.2" cy="160.6" r="3.9" fill="url(#gp)" opacity="0.8"/>
<circle cx="1069.4" cy="188.6" r="2.9" fill="url(#gp)" opacity="0.62"/>
<circle cx="1045.3" cy="227.5" r="3.9" fill="url(#gp)" opacity="0.8"/>
<circle cx="1088.1" cy="265.6" r="2.9" fill="url(#gg)" opacity="0.62"/>
<circle cx="1074.4" cy="306.6" r="4.9" fill="url(#gp)" opacity="0.9"/>
<circle cx="1086.3" cy="324.6" r="3.9" fill="url(#gc)" opacity="0.8"/>
<circle cx="1007.2" cy="298.7" r="2.9" fill="url(#gg)" opacity="0.62"/>
<circle cx="1131.5" cy="178.3" r="2.9" fill="url(#gp)" opacity="0.62"/>
<circle cx="1181.3" cy="205.6" r="2.9" fill="url(#gg)" opacity="0.62"/>
<circle cx="1180" cy="264.6" r="3.9" fill="url(#gp)" opacity="0.8"/>
<circle cx="1156.4" cy="264.6" r="2.9" fill="url(#gp)" opacity="0.62"/>
<circle cx="1185.5" cy="278.8" r="2.9" fill="url(#gy)" opacity="0.62"/>
<circle cx="1178.1" cy="286.8" r="3.9" fill="url(#gc)" opacity="0.8"/>
<circle cx="1148.2" cy="300.8" r="2.9" fill="url(#gp)" opacity="0.62"/>
<circle cx="1147.7" cy="314.6" r="3.9" fill="url(#gc)" opacity="0.8"/>
<circle cx="1137.1" cy="326.5" r="2.9" fill="url(#gg)" opacity="0.62"/>
<circle cx="1154.3" cy="328.6" r="2.9" fill="url(#gp)" opacity="0.62"/>
<circle cx="1173.3" cy="338.4" r="3.9" fill="url(#gr)" opacity="0.8"/>
<circle cx="1135.2" cy="354.5" r="2.9" fill="url(#gg)" opacity="0.62"/>
<circle cx="995" cy="383.3" r="2.9" fill="url(#gy)" opacity="0.62"/>
<circle cx="1082.3" cy="386.2" r="2.9" fill="url(#gg)" opacity="0.62"/>
<circle cx="1120" cy="154" r="2.9" fill="url(#gg)" opacity="0.62"/>
<circle cx="690.4" cy="499.3" r="4.9" fill="url(#gu)" opacity="0.9"/>
<circle cx="693.1" cy="528.1" r="3.9" fill="url(#gu)" opacity="0.8"/>
<circle cx="801.5" cy="502.4" r="4.9" fill="url(#gu)" opacity="0.9"/>
<circle cx="705.5" cy="514.3" r="2.9" fill="url(#gc)" opacity="0.62"/>
<circle cx="744.1" cy="491.9" r="3.9" fill="url(#gv)" opacity="0.8"/>
<circle cx="738.3" cy="430.2" r="2.9" fill="url(#gy)" opacity="0.62"/>
<circle cx="701.5" cy="406.4" r="2.9" fill="url(#gp)" opacity="0.62"/>
<circle cx="814.8" cy="459.3" r="3.9" fill="url(#gy)" opacity="0.8"/>
<circle cx="838.6" cy="406.4" r="3.9" fill="url(#gp)" opacity="0.8"/>
<circle cx="899.4" cy="459.3" r="2.9" fill="url(#gv)" opacity="0.62"/>
<circle cx="922.4" cy="479.4" r="3.9" fill="url(#gy)" opacity="0.8"/>
<circle cx="910.5" cy="491.9" r="3.9" fill="url(#gu)" opacity="0.8"/>
<circle cx="946.5" cy="474.7" r="2.9" fill="url(#gc)" opacity="0.62"/>
<circle cx="949.7" cy="477.3" r="2.9" fill="url(#gc)" opacity="0.62"/>
<circle cx="945.2" cy="503.2" r="3.9" fill="url(#gc)" opacity="0.8"/>
<circle cx="946.5" cy="525.4" r="2.9" fill="url(#gy)" opacity="0.62"/>
<circle cx="907.4" cy="521.5" r="2.9" fill="url(#gg)" opacity="0.62"/>
<circle cx="832.5" cy="539.5" r="3.9" fill="url(#gy)" opacity="0.8"/>
<circle cx="714.2" cy="536.3" r="2.9" fill="url(#gg)" opacity="0.62"/>
<circle cx="877.5" cy="574.4" r="2.9" fill="url(#gy)" opacity="0.62"/>
<circle cx="904.7" cy="579.2" r="3.9" fill="url(#gp)" opacity="0.8"/>
<circle cx="929.8" cy="595" r="6.2" fill="url(#gy)" opacity="1"/>
<circle cx="920.6" cy="585.8" r="2.9" fill="url(#gu)" opacity="0.62"/>
<circle cx="933.3" cy="608.3" r="2.9" fill="url(#gu)" opacity="0.62"/>
<circle cx="944.4" cy="613.5" r="2.9" fill="url(#gy)" opacity="0.62"/>
<circle cx="839.4" cy="599" r="2.9" fill="url(#gc)" opacity="0.62"/>
<circle cx="848.4" cy="609" r="2.9" fill="url(#gu)" opacity="0.62"/>
<circle cx="715.6" cy="603" r="2.9" fill="url(#gp)" opacity="0.62"/>
<circle cx="788.3" cy="625.5" r="3.9" fill="url(#gp)" opacity="0.8"/>
<circle cx="806.8" cy="633.5" r="4.9" fill="url(#gu)" opacity="0.9"/>
<circle cx="860.3" cy="629.4" r="3.9" fill="url(#gp)" opacity="0.8"/>
<circle cx="926.7" cy="629.4" r="3.9" fill="url(#gy)" opacity="0.8"/>
<circle cx="777" cy="641.8" r="4.9" fill="url(#gr)" opacity="0.9"/>
<circle cx="1016.7" cy="411.7" r="3.9" fill="url(#gc)" opacity="0.8"/>
<circle cx="1105.9" cy="434.4" r="4.9" fill="url(#gy)" opacity="0.9"/>
<circle cx="1089.5" cy="422.3" r="2.9" fill="url(#gu)" opacity="0.62"/>
<circle cx="1174.7" cy="478.6" r="3.9" fill="url(#gv)" opacity="0.8"/>
<circle cx="1154.3" cy="411.7" r="2.9" fill="url(#gp)" opacity="0.62"/>
<circle cx="1138.4" cy="467.5" r="2.9" fill="url(#gp)" opacity="0.62"/>
<circle cx="996.9" cy="442.4" r="2.9" fill="url(#gp)" opacity="0.62"/>
<circle cx="1002.7" cy="443.7" r="2.9" fill="url(#gc)" opacity="0.62"/>
<circle cx="1050.3" cy="442.4" r="2.9" fill="url(#gg)" opacity="0.62"/>
<circle cx="993.4" cy="490.5" r="2.9" fill="url(#gg)" opacity="0.62"/>
<circle cx="1090.3" cy="502.4" r="2.9" fill="url(#gp)" opacity="0.62"/>
<circle cx="1146.3" cy="518.8" r="2.9" fill="url(#gg)" opacity="0.62"/>
<circle cx="1063.3" cy="527.6" r="3.9" fill="url(#gy)" opacity="0.8"/>
<circle cx="1087.4" cy="544.2" r="3.9" fill="url(#gp)" opacity="0.8"/>
<circle cx="1113.3" cy="547.4" r="2.9" fill="url(#gu)" opacity="0.62"/>
<circle cx="1115.1" cy="565.1" r="3.9" fill="url(#gp)" opacity="0.8"/>
<circle cx="1113.3" cy="571.2" r="2.9" fill="url(#gp)" opacity="0.62"/>
<circle cx="1144.2" cy="563.3" r="3.9" fill="url(#go)" opacity="0.8"/>
<circle cx="1219.6" cy="571.2" r="4.9" fill="url(#gu)" opacity="0.9"/>
<circle cx="1213.3" cy="572.5" r="2.9" fill="url(#gu)" opacity="0.62"/>
<circle cx="1053.2" cy="588.4" r="3.9" fill="url(#gc)" opacity="0.8"/>
<circle cx="1067.5" cy="590.5" r="3.9" fill="url(#gv)" opacity="0.8"/>
<circle cx="1006.1" cy="586.3" r="2.9" fill="url(#gg)" opacity="0.62"/>
<circle cx="1129.4" cy="598.5" r="2.9" fill="url(#gp)" opacity="0.62"/>
<circle cx="1143.2" cy="605.6" r="2.9" fill="url(#gu)" opacity="0.62"/>
<circle cx="979.7" cy="635.5" r="6.2" fill="url(#gy)" opacity="1"/>
<circle cx="1023.3" cy="633.4" r="2.9" fill="url(#gg)" opacity="0.62"/>
<circle cx="1490.8" cy="189.7" r="6.2" fill="url(#gc)" opacity="1"/>
<circle cx="1552.5" cy="213" r="6.2" fill="url(#gc)" opacity="1"/>
<circle cx="1497.5" cy="251.3" r="6.2" fill="url(#gp)" opacity="1"/>
<circle cx="1574.2" cy="271.7" r="4.9" fill="url(#gc)" opacity="0.9"/>
<circle cx="1611.2" cy="315.3" r="8.2" fill="url(#gc)" opacity="1"/>
<circle cx="1636.3" cy="357.1" r="8.2" fill="url(#gc)" opacity="1"/>
<circle cx="1661.5" cy="369.6" r="6.2" fill="url(#gu)" opacity="1"/>
<circle cx="1611.2" cy="198.9" r="4.9" fill="url(#gc)" opacity="0.9"/>
<circle cx="1590" cy="174.3" r="3.9" fill="url(#go)" opacity="0.8"/>
<circle cx="1449" cy="165.3" r="2.9" fill="url(#gy)" opacity="0.62"/>
<circle cx="1477.6" cy="163.2" r="2.9" fill="url(#gp)" opacity="0.62"/>
<circle cx="1457.2" cy="180.4" r="2.9" fill="url(#gy)" opacity="0.62"/>
<circle cx="1545.6" cy="224.9" r="2.9" fill="url(#gp)" opacity="0.62"/>
<circle cx="1581.6" cy="206.9" r="2.9" fill="url(#gp)" opacity="0.62"/>
<circle cx="1586.1" cy="235.2" r="2.9" fill="url(#gy)" opacity="0.62"/>
<circle cx="1608" cy="223.5" r="2.9" fill="url(#gp)" opacity="0.62"/>
<circle cx="1633.7" cy="248.4" r="2.9" fill="url(#gy)" opacity="0.62"/>
<circle cx="1637.7" cy="259.3" r="2.9" fill="url(#gy)" opacity="0.62"/>
<circle cx="1527.4" cy="265.6" r="2.9" fill="url(#gy)" opacity="0.62"/>
<circle cx="1458.3" cy="277.5" r="2.9" fill="url(#gc)" opacity="0.62"/>
<circle cx="1475.5" cy="286.8" r="2.9" fill="url(#gp)" opacity="0.62"/>
<circle cx="1586.1" cy="301.6" r="2.9" fill="url(#gu)" opacity="0.62"/>
<circle cx="1639.8" cy="313.2" r="2.9" fill="url(#gc)" opacity="0.62"/>
<circle cx="1616.5" cy="329.9" r="2.9" fill="url(#gy)" opacity="0.62"/>
<circle cx="1652.2" cy="341.3" r="2.9" fill="url(#gg)" opacity="0.62"/>
<circle cx="1477.6" cy="328.6" r="2.9" fill="url(#gp)" opacity="0.62"/>
<circle cx="1529.2" cy="336" r="2.9" fill="url(#gg)" opacity="0.62"/>
<circle cx="1515.2" cy="356.3" r="3.9" fill="url(#gr)" opacity="0.8"/>
<circle cx="1650.4" cy="372.2" r="2.9" fill="url(#gg)" opacity="0.62"/>
<circle cx="1647.5" cy="384.1" r="2.9" fill="url(#gp)" opacity="0.62"/>
<circle cx="1575.5" cy="394.7" r="2.9" fill="url(#gy)" opacity="0.62"/>
<circle cx="1586.1" cy="392" r="2.9" fill="url(#gy)" opacity="0.62"/>
<circle cx="1625.2" cy="396" r="2.9" fill="url(#gg)" opacity="0.62"/>
<circle cx="1676" cy="389.4" r="2.9" fill="url(#gp)" opacity="0.62"/>
<circle cx="1555.1" cy="408.5" r="3.9" fill="url(#gu)" opacity="0.8"/>
<circle cx="1554.9" cy="399.3" r="2.9" fill="url(#gp)" opacity="0.62"/>
<circle cx="1466.2" cy="410.4" r="2.9" fill="url(#gg)" opacity="0.62"/>
<circle cx="1584.8" cy="405.9" r="2.9" fill="url(#gy)" opacity="0.62"/>
<circle cx="1617.3" cy="456.1" r="3.9" fill="url(#gr)" opacity="0.8"/>
<circle cx="1623.1" cy="472.5" r="4.9" fill="url(#gc)" opacity="0.9"/>
<circle cx="1676" cy="457.5" r="4.9" fill="url(#gy)" opacity="0.9"/>
<circle cx="1671.3" cy="433.7" r="3.9" fill="url(#gc)" opacity="0.8"/>
<circle cx="1680" cy="417.2" r="3.9" fill="url(#gc)" opacity="0.8"/>
<circle cx="1524.4" cy="448.7" r="2.9" fill="url(#gg)" opacity="0.62"/>
<circle cx="1509.4" cy="470.2" r="2.9" fill="url(#gc)" opacity="0.62"/>
<circle cx="1453.3" cy="500.6" r="2.9" fill="url(#gg)" opacity="0.62"/>
<circle cx="1598.3" cy="505.6" r="2.9" fill="url(#gp)" opacity="0.62"/>
<circle cx="1658" cy="528.1" r="2.9" fill="url(#gg)" opacity="0.62"/>
<circle cx="1691.4" cy="531" r="2.9" fill="url(#gy)" opacity="0.62"/>
<circle cx="1676.6" cy="547.4" r="2.9" fill="url(#gg)" opacity="0.62"/>
<circle cx="1484.2" cy="540.8" r="2.9" fill="url(#gg)" opacity="0.62"/>
<circle cx="1543" cy="540.8" r="2.9" fill="url(#gp)" opacity="0.62"/>
<circle cx="1558.8" cy="546.1" r="3.9" fill="url(#go)" opacity="0.8"/>
<circle cx="1626.3" cy="551.9" r="3.9" fill="url(#gr)" opacity="0.8"/>
<circle cx="1573.7" cy="562.5" r="6.2" fill="url(#gp)" opacity="1"/>
<circle cx="1590.3" cy="588.4" r="6.2" fill="url(#gc)" opacity="1"/>
<circle cx="1619.2" cy="577.3" r="2.9" fill="url(#gy)" opacity="0.62"/>
<circle cx="1660.2" cy="587.1" r="6.2" fill="url(#gp)" opacity="1"/>
<circle cx="1549.6" cy="600.3" r="2.9" fill="url(#gp)" opacity="0.62"/>
<circle cx="1544.3" cy="609.6" r="3.9" fill="url(#gu)" opacity="0.8"/>
<circle cx="1461.7" cy="623.3" r="2.9" fill="url(#gc)" opacity="0.62"/>
<circle cx="1502.8" cy="635.5" r="3.9" fill="url(#gy)" opacity="0.8"/>
<circle cx="1556.5" cy="638.9" r="3.9" fill="url(#gp)" opacity="0.8"/>
<circle cx="1641.6" cy="622.8" r="2.9" fill="url(#gc)" opacity="0.62"/>
<circle cx="1656.2" cy="653.3" r="3.9" fill="url(#gy)" opacity="0.8"/>
<circle cx="1670.2" cy="649" r="2.9" fill="url(#gg)" opacity="0.62"/>
<circle cx="1637.7" cy="684.8" r="6.2" fill="url(#gp)" opacity="1"/>
<circle cx="1617" cy="700.1" r="2.9" fill="url(#gp)" opacity="0.62"/>
<circle cx="1600.1" cy="670.2" r="2.9" fill="url(#gc)" opacity="0.62"/>
<circle cx="1599.3" cy="661.2" r="2.9" fill="url(#gp)" opacity="0.62"/>
<circle cx="1611.2" cy="645.3" r="2.9" fill="url(#gg)" opacity="0.62"/>
<circle cx="1522.6" cy="701.4" r="2.9" fill="url(#gy)" opacity="0.62"/>
<circle cx="1600.1" cy="734" r="4.9" fill="url(#gu)" opacity="0.9"/>
<circle cx="1552.2" cy="730.5" r="3.9" fill="url(#go)" opacity="0.8"/>
<circle cx="1530.5" cy="757.5" r="4.9" fill="url(#gy)" opacity="0.9"/>
<circle cx="1535" cy="768.9" r="3.9" fill="url(#gc)" opacity="0.8"/>
<circle cx="1571.5" cy="748.3" r="2.9" fill="url(#gp)" opacity="0.62"/>
<circle cx="1576.3" cy="746.9" r="2.9" fill="url(#gp)" opacity="0.62"/>
<circle cx="1546.4" cy="743.8" r="2.9" fill="url(#gg)" opacity="0.62"/>
<circle cx="1495.6" cy="786.1" r="3.9" fill="url(#gp)" opacity="0.8"/>
<circle cx="1514.7" cy="794.8" r="2.9" fill="url(#gp)" opacity="0.62"/>
<circle cx="1490.3" cy="748.3" r="2.9" fill="url(#gc)" opacity="0.62"/>
<circle cx="1506.2" cy="749.6" r="2.9" fill="url(#gg)" opacity="0.62"/>
<circle cx="1457.2" cy="756.5" r="3.9" fill="url(#gu)" opacity="0.8"/>
<circle cx="1445.3" cy="712.5" r="2.9" fill="url(#gg)" opacity="0.62"/>
<circle cx="1437.4" cy="726.6" r="2.9" fill="url(#gp)" opacity="0.62"/>
<circle cx="1510.7" cy="762.3" r="2.9" fill="url(#gp)" opacity="0.62"/>
<circle cx="1444.6" cy="796.1" r="2.9" fill="url(#gg)" opacity="0.62"/>
<circle cx="1477.1" cy="838.2" r="4.9" fill="url(#gp)" opacity="0.9"/>
<circle cx="1488.7" cy="835.8" r="2.9" fill="url(#gp)" opacity="0.62"/>
<circle cx="1507.5" cy="844.8" r="6.2" fill="url(#gp)" opacity="1"/>
<circle cx="1595.6" cy="846.9" r="4.9" fill="url(#gp)" opacity="0.9"/>
<circle cx="1622.6" cy="835" r="6.2" fill="url(#go)" opacity="1"/>
<circle cx="1616.5" cy="823.1" r="3.9" fill="url(#gu)" opacity="0.8"/>
<circle cx="1550.4" cy="824.4" r="2.9" fill="url(#gp)" opacity="0.62"/>
<circle cx="1562.3" cy="820" r="2.9" fill="url(#gy)" opacity="0.62"/>
<circle cx="1598.5" cy="789.5" r="2.9" fill="url(#gg)" opacity="0.62"/>
<circle cx="1644.8" cy="735" r="2.9" fill="url(#gy)" opacity="0.62"/>
<circle cx="1650.9" cy="724.4" r="2.9" fill="url(#gp)" opacity="0.62"/>
<circle cx="1658.8" cy="729.2" r="2.9" fill="url(#gu)" opacity="0.62"/>
<circle cx="1664.1" cy="745.1" r="2.9" fill="url(#gr)" opacity="0.62"/>
<circle cx="1671.3" cy="749" r="2.9" fill="url(#gu)" opacity="0.62"/>
<circle cx="1677.4" cy="708" r="3.9" fill="url(#gu)" opacity="0.8"/>
<circle cx="1682.6" cy="684.2" r="2.9" fill="url(#gu)" opacity="0.62"/>
<circle cx="1684" cy="669.7" r="2.9" fill="url(#gg)" opacity="0.62"/>
<circle cx="1646.9" cy="677.6" r="2.9" fill="url(#gp)" opacity="0.62"/>
<circle cx="1608.6" cy="719.2" r="2.9" fill="url(#gy)" opacity="0.62"/>
<circle cx="1463.3" cy="873" r="3.9" fill="url(#gp)" opacity="0.8"/>
<circle cx="1502.3" cy="871.3" r="3.9" fill="url(#gc)" opacity="0.8"/>
<circle cx="1564.6" cy="876.5" r="2.9" fill="url(#gc)" opacity="0.62"/>
<circle cx="1618.6" cy="865" r="2.9" fill="url(#gg)" opacity="0.62"/>
<circle cx="1659.6" cy="775" r="2.9" fill="url(#gg)" opacity="0.62"/>
<circle cx="1219.1" cy="571.1" r="4.9" fill="url(#gu)" opacity="0.9"/>
<circle cx="1330.2" cy="527.4" r="3.9" fill="url(#gy)" opacity="0.8"/>
<circle cx="1346.1" cy="549.9" r="3.9" fill="url(#gp)" opacity="0.8"/>
<circle cx="1337.4" cy="566.1" r="2.9" fill="url(#gp)" opacity="0.62"/>
<circle cx="1334.2" cy="574.5" r="3.9" fill="url(#gy)" opacity="0.8"/>
<circle cx="1365.1" cy="574.5" r="2.9" fill="url(#gy)" opacity="0.62"/>
<circle cx="1420.2" cy="562.6" r="2.9" fill="url(#gr)" opacity="0.62"/>
<circle cx="1426.2" cy="601.5" r="8.2" fill="url(#gy)" opacity="1"/>
<circle cx="1399.5" cy="628.2" r="3.9" fill="url(#gp)" opacity="0.8"/>
<circle cx="1422.3" cy="651.8" r="2.9" fill="url(#gu)" opacity="0.62"/>
<circle cx="1406.4" cy="671.1" r="2.9" fill="url(#gp)" opacity="0.62"/>
<circle cx="1402.4" cy="687.5" r="2.9" fill="url(#gp)" opacity="0.62"/>
<circle cx="1296.3" cy="603.6" r="2.9" fill="url(#gg)" opacity="0.62"/>
<circle cx="1316.5" cy="611.6" r="2.9" fill="url(#gp)" opacity="0.62"/>
<circle cx="1255.3" cy="611.6" r="3.9" fill="url(#gc)" opacity="0.8"/>
<circle cx="1238.4" cy="647.3" r="3.9" fill="url(#go)" opacity="0.8"/>
<circle cx="1295.8" cy="659.7" r="2.9" fill="url(#gg)" opacity="0.62"/>
<circle cx="1283.4" cy="664.5" r="2.9" fill="url(#gg)" opacity="0.62"/>
<circle cx="1239.5" cy="682.2" r="6.2" fill="url(#gc)" opacity="1"/>
<circle cx="1221.7" cy="690.1" r="4.9" fill="url(#gc)" opacity="0.9"/>
<circle cx="1253.5" cy="702.3" r="2.9" fill="url(#gg)" opacity="0.62"/>
<circle cx="1196.6" cy="707.3" r="2.9" fill="url(#gu)" opacity="0.62"/>
<circle cx="1223.1" cy="712.1" r="2.9" fill="url(#gv)" opacity="0.62"/>
<circle cx="1291.9" cy="730.6" r="2.9" fill="url(#gg)" opacity="0.62"/>
<circle cx="1347.4" cy="740.4" r="6.2" fill="url(#gp)" opacity="1"/>
<circle cx="1200.6" cy="743.8" r="2.9" fill="url(#gp)" opacity="0.62"/>
<circle cx="1215.1" cy="756.3" r="2.9" fill="url(#gg)" opacity="0.62"/>
<circle cx="1346.5" cy="778.2" r="3.9" fill="url(#gp)" opacity="0.8"/>
<circle cx="1355" cy="809.1" r="2.9" fill="url(#gy)" opacity="0.62"/>
<circle cx="1378.3" cy="823.3" r="3.9" fill="url(#gp)" opacity="0.8"/>
<circle cx="1366.6" cy="832.2" r="3.9" fill="url(#gg)" opacity="0.8"/>
<circle cx="1386.7" cy="836.4" r="2.9" fill="url(#gp)" opacity="0.62"/>
<circle cx="1382.9" cy="849.1" r="3.9" fill="url(#gp)" opacity="0.8"/>
<circle cx="1391.4" cy="859.2" r="6.2" fill="url(#gu)" opacity="1"/>
<circle cx="1345.5" cy="848.7" r="2.9" fill="url(#gg)" opacity="0.62"/>
<circle cx="1282.4" cy="856.1" r="3.9" fill="url(#gp)" opacity="0.8"/>
<circle cx="1256.6" cy="839.1" r="3.9" fill="url(#gc)" opacity="0.8"/>
<circle cx="1288.4" cy="875.5" r="2.9" fill="url(#gp)" opacity="0.62"/>
<circle cx="1293" cy="893.1" r="6.2" fill="url(#gp)" opacity="1"/>
<circle cx="1226.6" cy="914.2" r="3.9" fill="url(#gr)" opacity="0.8"/>
<circle cx="1202.3" cy="894.6" r="2.9" fill="url(#gg)" opacity="0.62"/>
<circle cx="1308.5" cy="915.3" r="2.9" fill="url(#gg)" opacity="0.62"/>
<circle cx="1285.6" cy="929.5" r="2.9" fill="url(#gu)" opacity="0.62"/>
<circle cx="1329" cy="928" r="3.9" fill="url(#gc)" opacity="0.8"/>
<circle cx="1378.3" cy="906.8" r="2.9" fill="url(#gu)" opacity="0.62"/>
<circle cx="1378.3" cy="929" r="3.9" fill="url(#gu)" opacity="0.8"/>
<circle cx="1476.6" cy="838.1" r="6.2" fill="url(#gp)" opacity="1"/>
<circle cx="1428" cy="940.7" r="2.9" fill="url(#gu)" opacity="0.62"/>
<circle cx="1331.3" cy="942.2" r="2.9" fill="url(#gp)" opacity="0.62"/>
<circle cx="237" cy="490.8" r="3.9" fill="url(#gp)" opacity="0.8"/>
<circle cx="237.6" cy="526.5" r="3.9" fill="url(#gp)" opacity="0.8"/>
<circle cx="240.2" cy="584.7" r="2.9" fill="url(#gu)" opacity="0.62"/>
<circle cx="242.9" cy="650.9" r="3.9" fill="url(#gp)" opacity="0.8"/>
<circle cx="210.6" cy="685.3" r="3.9" fill="url(#gu)" opacity="0.8"/>
<circle cx="162.7" cy="514.1" r="2.9" fill="url(#gu)" opacity="0.62"/>
<circle cx="185.4" cy="509.6" r="2.9" fill="url(#gg)" opacity="0.62"/>
<circle cx="156.9" cy="563" r="2.9" fill="url(#gp)" opacity="0.62"/>
<circle cx="160.3" cy="560.4" r="2.9" fill="url(#gr)" opacity="0.62"/>
<circle cx="131.7" cy="575.7" r="3.9" fill="url(#gy)" opacity="0.8"/>
<circle cx="113.2" cy="598.8" r="6.2" fill="url(#gc)" opacity="1"/>
<circle cx="152.4" cy="612.5" r="6.2" fill="url(#gc)" opacity="1"/>
<circle cx="152.4" cy="627.3" r="2.9" fill="url(#gc)" opacity="0.62"/>
<circle cx="125.7" cy="638.4" r="3.9" fill="url(#gp)" opacity="0.8"/>
<circle cx="117.2" cy="643.7" r="3.9" fill="url(#gp)" opacity="0.8"/>
<circle cx="138.4" cy="643.7" r="2.9" fill="url(#gg)" opacity="0.62"/>
<circle cx="167.5" cy="652.2" r="2.9" fill="url(#gp)" opacity="0.62"/>
<circle cx="181.5" cy="675.5" r="3.9" fill="url(#gy)" opacity="0.8"/>
<circle cx="142.3" cy="691.3" r="2.9" fill="url(#gu)" opacity="0.62"/>
<circle cx="129.1" cy="695.3" r="2.9" fill="url(#gg)" opacity="0.62"/>
<circle cx="225.1" cy="703.3" r="2.9" fill="url(#gy)" opacity="0.62"/>
<circle cx="205.8" cy="722.3" r="2.9" fill="url(#gy)" opacity="0.62"/>
<circle cx="271.4" cy="537.4" r="2.9" fill="url(#gv)" opacity="0.62"/>
<circle cx="321.7" cy="520.2" r="3.9" fill="url(#gy)" opacity="0.8"/>
<circle cx="306.3" cy="583.7" r="2.9" fill="url(#gg)" opacity="0.62"/>
<circle cx="304.2" cy="602.2" r="3.9" fill="url(#gy)" opacity="0.8"/>
<circle cx="262.2" cy="619.4" r="2.9" fill="url(#gp)" opacity="0.62"/>
<circle cx="250.3" cy="625.7" r="2.9" fill="url(#gg)" opacity="0.62"/>
<circle cx="250.3" cy="630.5" r="2.9" fill="url(#gg)" opacity="0.62"/>
<circle cx="283.3" cy="655.6" r="3.9" fill="url(#gc)" opacity="0.8"/>
<circle cx="291.3" cy="649.6" r="2.9" fill="url(#gg)" opacity="0.62"/>
<circle cx="347.4" cy="583.4" r="3.9" fill="url(#go)" opacity="0.8"/>
<circle cx="355.3" cy="643" r="6.2" fill="url(#gr)" opacity="1"/>
<circle cx="351.9" cy="706.4" r="6.2" fill="url(#gc)" opacity="1"/>
<circle cx="325.4" cy="717.8" r="3.9" fill="url(#gu)" opacity="0.8"/>
<circle cx="379.1" cy="495.6" r="2.9" fill="url(#gg)" opacity="0.62"/>
<circle cx="309" cy="492.4" r="2.9" fill="url(#gg)" opacity="0.62"/>
<circle cx="113.2" cy="496.1" r="2.9" fill="url(#gp)" opacity="0.62"/>
<circle cx="377.8" cy="732.4" r="3.9" fill="url(#gp)" opacity="0.8"/>
<circle cx="305.6" cy="780.7" r="6.2" fill="url(#gr)" opacity="1"/>
<circle cx="267.4" cy="860.3" r="4.9" fill="url(#gp)" opacity="0.9"/>
<circle cx="236.3" cy="870" r="6.2" fill="url(#gy)" opacity="1"/>
<circle cx="266.2" cy="865.9" r="2.9" fill="url(#gy)" opacity="0.62"/>
<circle cx="193.2" cy="809.4" r="3.9" fill="url(#gr)" opacity="0.8"/>
<circle cx="188.3" cy="815.2" r="2.9" fill="url(#gp)" opacity="0.62"/>
<circle cx="155.5" cy="773.4" r="3.9" fill="url(#gu)" opacity="0.8"/>
<circle cx="155.5" cy="780.2" r="2.9" fill="url(#gy)" opacity="0.62"/>
<circle cx="165.2" cy="735.2" r="2.9" fill="url(#gg)" opacity="0.62"/>
<circle cx="145.5" cy="745.4" r="2.9" fill="url(#gg)" opacity="0.62"/>
<circle cx="228.2" cy="746.6" r="3.9" fill="url(#gg)" opacity="0.8"/>
<circle cx="241.6" cy="762.4" r="2.9" fill="url(#gy)" opacity="0.62"/>
<circle cx="186.4" cy="840.3" r="2.9" fill="url(#gg)" opacity="0.62"/>
<circle cx="218.5" cy="896.3" r="2.9" fill="url(#gc)" opacity="0.62"/>
<circle cx="247.2" cy="896.3" r="2.9" fill="url(#gp)" opacity="0.62"/>
<circle cx="264.2" cy="928.6" r="2.9" fill="url(#gy)" opacity="0.62"/>
<circle cx="308.8" cy="884.1" r="2.9" fill="url(#gg)" opacity="0.62"/>
<circle cx="329.4" cy="897" r="3.9" fill="url(#gp)" opacity="0.8"/>
<circle cx="315.3" cy="740.1" r="2.9" fill="url(#gg)" opacity="0.62"/>
<circle cx="322.6" cy="773.4" r="2.9" fill="url(#gy)" opacity="0.62"/>
<circle cx="334.3" cy="775.3" r="2.9" fill="url(#gp)" opacity="0.62"/>
<circle cx="347.4" cy="745.4" r="2.9" fill="url(#gg)" opacity="0.62"/>
<circle cx="371.3" cy="842" r="4.9" fill="url(#gc)" opacity="0.9"/>
<circle cx="382.2" cy="869" r="3.9" fill="url(#gp)" opacity="0.8"/>
<circle cx="345.7" cy="836" r="2.9" fill="url(#gg)" opacity="0.62"/>
<circle cx="312.9" cy="943.7" r="2.9" fill="url(#gp)" opacity="0.62"/>
<circle cx="434.2" cy="491.6" r="2.9" fill="url(#gu)" opacity="0.62"/>
<circle cx="587.7" cy="503.5" r="3.9" fill="url(#gu)" opacity="0.8"/>
<circle cx="589" cy="508.8" r="3.9" fill="url(#gu)" opacity="0.8"/>
<circle cx="586.3" cy="512.8" r="3.9" fill="url(#gu)" opacity="0.8"/>
<circle cx="590.3" cy="516.7" r="3.9" fill="url(#gu)" opacity="0.8"/>
<circle cx="579.7" cy="505.4" r="2.9" fill="url(#gg)" opacity="0.62"/>
<circle cx="607.5" cy="501.4" r="2.9" fill="url(#gg)" opacity="0.62"/>
<circle cx="449.3" cy="551.1" r="4.9" fill="url(#go)" opacity="0.9"/>
<circle cx="431.6" cy="551.1" r="2.9" fill="url(#gn)" opacity="0.62"/>
<circle cx="413.1" cy="561.7" r="3.9" fill="url(#gu)" opacity="0.8"/>
<circle cx="405.1" cy="568.9" r="6.2" fill="url(#gy)" opacity="1"/>
<circle cx="541.4" cy="584.2" r="3.9" fill="url(#gp)" opacity="0.8"/>
<circle cx="545.3" cy="589" r="2.9" fill="url(#gg)" opacity="0.62"/>
<circle cx="544.6" cy="609.3" r="2.9" fill="url(#gn)" opacity="0.62"/>
<circle cx="528.1" cy="619.4" r="3.9" fill="url(#gp)" opacity="0.8"/>
<circle cx="646.4" cy="596.1" r="3.9" fill="url(#go)" opacity="0.8"/>
<circle cx="549.3" cy="660.1" r="6.2" fill="url(#gc)" opacity="1"/>
<circle cx="405.7" cy="654.3" r="3.9" fill="url(#gu)" opacity="0.8"/>
<circle cx="422.3" cy="704" r="3.9" fill="url(#go)" opacity="0.8"/>
<circle cx="448.3" cy="705.1" r="2.9" fill="url(#gn)" opacity="0.62"/>
<circle cx="476.6" cy="684.2" r="2.9" fill="url(#gg)" opacity="0.62"/>
<circle cx="504.3" cy="691.3" r="2.9" fill="url(#gg)" opacity="0.62"/>
<circle cx="626.6" cy="688.2" r="4.9" fill="url(#gu)" opacity="0.9"/>
<circle cx="652.5" cy="694.5" r="3.9" fill="url(#gp)" opacity="0.8"/>
<circle cx="633.4" cy="708" r="3.9" fill="url(#gu)" opacity="0.8"/>
<circle cx="626.6" cy="716.5" r="2.9" fill="url(#gg)" opacity="0.62"/>
<circle cx="562.5" cy="724.4" r="2.9" fill="url(#gn)" opacity="0.62"/>
<circle cx="411.1" cy="759.5" r="4.9" fill="url(#gu)" opacity="0.9"/>
<circle cx="436.4" cy="770.5" r="2.9" fill="url(#gg)" opacity="0.62"/>
<circle cx="424.3" cy="809.2" r="3.9" fill="url(#go)" opacity="0.8"/>
<circle cx="416.5" cy="908.4" r="3.9" fill="url(#gp)" opacity="0.8"/>
<circle cx="451.3" cy="896.3" r="3.9" fill="url(#go)" opacity="0.8"/>
<circle cx="533.3" cy="934" r="6.2" fill="url(#gy)" opacity="1"/>
<circle cx="435.5" cy="942.5" r="2.9" fill="url(#gp)" opacity="0.62"/>
<circle cx="598.5" cy="820.4" r="8.2" fill="url(#go)" opacity="1"/>
<circle cx="588.5" cy="822.1" r="2.9" fill="url(#gn)" opacity="0.62"/>
<circle cx="575.4" cy="860.3" r="6.2" fill="url(#gc)" opacity="1"/>
<circle cx="558.3" cy="865.4" r="3.9" fill="url(#gu)" opacity="0.8"/>
<circle cx="537.4" cy="855.4" r="2.9" fill="url(#gp)" opacity="0.62"/>
<circle cx="566.1" cy="805.5" r="2.9" fill="url(#gg)" opacity="0.62"/>
<circle cx="627.4" cy="810.4" r="3.9" fill="url(#gy)" opacity="0.8"/>
<circle cx="606.5" cy="847.6" r="3.9" fill="url(#gy)" opacity="0.8"/>
<circle cx="579.5" cy="896.3" r="2.9" fill="url(#gp)" opacity="0.62"/>
<circle cx="665.4" cy="751.5" r="2.9" fill="url(#gg)" opacity="0.62"/>
<circle cx="656.2" cy="779.5" r="2.9" fill="url(#gn)" opacity="0.62"/>
<circle cx="583.9" cy="943.7" r="2.9" fill="url(#gg)" opacity="0.62"/>
<circle cx="685.7" cy="665.2" r="2.9" fill="url(#gv)" opacity="0.62"/>
<circle cx="729.3" cy="659.4" r="2.9" fill="url(#gp)" opacity="0.62"/>
<circle cx="728.3" cy="680.6" r="3.9" fill="url(#gp)" opacity="0.8"/>
<circle cx="789.1" cy="658.6" r="2.9" fill="url(#gn)" opacity="0.62"/>
<circle cx="772.4" cy="672.6" r="2.9" fill="url(#gy)" opacity="0.62"/>
<circle cx="773.2" cy="681.3" r="3.9" fill="url(#gy)" opacity="0.8"/>
<circle cx="800.2" cy="701.7" r="3.9" fill="url(#gy)" opacity="0.8"/>
<circle cx="856.3" cy="691.7" r="2.9" fill="url(#gg)" opacity="0.62"/>
<circle cx="924.6" cy="684.5" r="3.9" fill="url(#gy)" opacity="0.8"/>
<circle cx="722.7" cy="721.6" r="2.9" fill="url(#gr)" opacity="0.62"/>
<circle cx="728.8" cy="724.7" r="2.9" fill="url(#gr)" opacity="0.62"/>
<circle cx="749.4" cy="732.1" r="3.9" fill="url(#gp)" opacity="0.8"/>
<circle cx="943.1" cy="723.4" r="2.9" fill="url(#gp)" opacity="0.62"/>
<circle cx="940.4" cy="726.3" r="2.9" fill="url(#gp)" opacity="0.62"/>
<circle cx="906.8" cy="744.6" r="2.9" fill="url(#gg)" opacity="0.62"/>
<circle cx="866.3" cy="765.2" r="2.9" fill="url(#gp)" opacity="0.62"/>
<circle cx="725.3" cy="776.3" r="4.9" fill="url(#gc)" opacity="0.9"/>
<circle cx="730.5" cy="776.3" r="2.9" fill="url(#gp)" opacity="0.62"/>
<circle cx="719.5" cy="781.6" r="2.9" fill="url(#gp)" opacity="0.62"/>
<circle cx="744.7" cy="795.6" r="6.2" fill="url(#gc)" opacity="1"/>
<circle cx="783.5" cy="792.5" r="2.9" fill="url(#gn)" opacity="0.62"/>
<circle cx="681.2" cy="795.6" r="2.9" fill="url(#gy)" opacity="0.62"/>
<circle cx="846" cy="792.5" r="6.2" fill="url(#gp)" opacity="1"/>
<circle cx="685.7" cy="850.2" r="6.2" fill="url(#gy)" opacity="1"/>
<circle cx="831.4" cy="822.1" r="2.9" fill="url(#gg)" opacity="0.62"/>
<circle cx="946.5" cy="827.4" r="6.2" fill="url(#gp)" opacity="1"/>
<circle cx="864.2" cy="843.3" r="2.9" fill="url(#gg)" opacity="0.62"/>
<circle cx="890.2" cy="842.5" r="2.9" fill="url(#gg)" opacity="0.62"/>
<circle cx="838.6" cy="853" r="2.9" fill="url(#gv)" opacity="0.62"/>
<circle cx="852.4" cy="858.4" r="3.9" fill="url(#gy)" opacity="0.8"/>
<circle cx="931.5" cy="850.4" r="2.9" fill="url(#gp)" opacity="0.62"/>
<circle cx="912.5" cy="863.2" r="2.9" fill="url(#gg)" opacity="0.62"/>
<circle cx="918" cy="872.8" r="2.9" fill="url(#gp)" opacity="0.62"/>
<circle cx="964.3" cy="645.4" r="2.9" fill="url(#gg)" opacity="0.62"/>
<circle cx="970.4" cy="658.6" r="3.9" fill="url(#go)" opacity="0.8"/>
<circle cx="1014.9" cy="662" r="3.9" fill="url(#gr)" opacity="0.8"/>
<circle cx="1171.5" cy="672.6" r="3.9" fill="url(#gn)" opacity="0.8"/>
<circle cx="1221" cy="690.3" r="3.9" fill="url(#gc)" opacity="0.8"/>
<circle cx="1239" cy="681.9" r="3.9" fill="url(#gc)" opacity="0.8"/>
<circle cx="1237.6" cy="647.5" r="2.9" fill="url(#gp)" opacity="0.62"/>
<circle cx="1196.1" cy="707.5" r="2.9" fill="url(#gv)" opacity="0.62"/>
<circle cx="1020.7" cy="715.5" r="2.9" fill="url(#gn)" opacity="0.62"/>
<circle cx="1143.2" cy="721.6" r="2.9" fill="url(#gg)" opacity="0.62"/>
<circle cx="1133.1" cy="732.7" r="6.2" fill="url(#gu)" opacity="1"/>
<circle cx="959.3" cy="746.7" r="2.9" fill="url(#gg)" opacity="0.62"/>
<circle cx="1010.1" cy="757.3" r="2.9" fill="url(#gv)" opacity="0.62"/>
<circle cx="1200.6" cy="744.6" r="2.9" fill="url(#gr)" opacity="0.62"/>
<circle cx="1215.7" cy="756.5" r="2.9" fill="url(#gg)" opacity="0.62"/>
<circle cx="1086.3" cy="785.6" r="2.9" fill="url(#gy)" opacity="0.62"/>
<circle cx="1104.6" cy="791.7" r="6.2" fill="url(#gc)" opacity="1"/>
<circle cx="970.4" cy="807.5" r="3.9" fill="url(#gu)" opacity="0.8"/>
<circle cx="1082.3" cy="811.5" r="2.9" fill="url(#gy)" opacity="0.62"/>
<circle cx="1174.1" cy="811.5" r="2.9" fill="url(#gg)" opacity="0.62"/>
<circle cx="1128.4" cy="829.2" r="6.2" fill="url(#gu)" opacity="1"/>
<circle cx="1136.3" cy="831.3" r="2.9" fill="url(#gy)" opacity="0.62"/>
<circle cx="1110.1" cy="840.6" r="3.9" fill="url(#gp)" opacity="0.8"/>
<circle cx="1109.3" cy="844.6" r="2.9" fill="url(#gp)" opacity="0.62"/>
<circle cx="1050.3" cy="844" r="3.9" fill="url(#gc)" opacity="0.8"/>
<circle cx="1049.3" cy="850.4" r="2.9" fill="url(#gy)" opacity="0.62"/>
<circle cx="1172.3" cy="842.5" r="2.9" fill="url(#gu)" opacity="0.62"/>
<circle cx="1100" cy="860.3" r="6.2" fill="url(#gy)" opacity="1"/>
<circle cx="1166.3" cy="860" r="2.9" fill="url(#gg)" opacity="0.62"/>
<circle cx="804" cy="942" r="6.2" fill="url(#gr)" opacity="1"/>
<circle cx="951.3" cy="890.3" r="3.9" fill="url(#gu)" opacity="0.8"/>
<circle cx="911.5" cy="910.4" r="2.9" fill="url(#gn)" opacity="0.62"/>
<circle cx="1017.6" cy="906.5" r="2.9" fill="url(#gu)" opacity="0.62"/>
<circle cx="1018.3" cy="920" r="2.9" fill="url(#gu)" opacity="0.62"/>
<circle cx="989.4" cy="930" r="3.9" fill="url(#gu)" opacity="0.8"/>
<circle cx="975.5" cy="939.8" r="2.9" fill="url(#gn)" opacity="0.62"/>
<circle cx="1007.2" cy="933" r="2.9" fill="url(#gg)" opacity="0.62"/>
<circle cx="1064.5" cy="904.9" r="3.9" fill="url(#gu)" opacity="0.8"/>
<circle cx="1068.4" cy="905.5" r="2.9" fill="url(#gu)" opacity="0.62"/>
<circle cx="1076.5" cy="908" r="2.9" fill="url(#gg)" opacity="0.62"/>
<circle cx="1072" cy="884.5" r="2.9" fill="url(#gg)" opacity="0.62"/>
<circle cx="1092.7" cy="881.6" r="6.2" fill="url(#gr)" opacity="1"/>
<circle cx="1150.9" cy="901.6" r="6.2" fill="url(#gy)" opacity="1"/>
<circle cx="1202.7" cy="894.2" r="2.9" fill="url(#gn)" opacity="0.62"/>
<circle cx="1148" cy="931.7" r="3.9" fill="url(#gp)" opacity="0.8"/>
<circle cx="1167.4" cy="929.1" r="2.9" fill="url(#gr)" opacity="0.62"/>
<circle cx="1125" cy="941" r="2.9" fill="url(#gu)" opacity="0.62"/>
<circle cx="705.3" cy="938.2" r="2.9" fill="url(#gg)" opacity="0.62"/>
<circle cx="1597.4" cy="886.4" r="6.2" fill="url(#gp)" opacity="1"/>
<circle cx="1615" cy="884.3" r="3.9" fill="url(#gu)" opacity="0.8"/>
<circle cx="1605" cy="877.3" r="2.9" fill="url(#gu)" opacity="0.62"/>
<circle cx="1535.5" cy="903.6" r="3.9" fill="url(#gp)" opacity="0.8"/>
<circle cx="1556.4" cy="901.4" r="3.9" fill="url(#gy)" opacity="0.8"/>
<circle cx="1546.7" cy="926.2" r="2.9" fill="url(#gv)" opacity="0.62"/>
<circle cx="1555.6" cy="939.6" r="2.9" fill="url(#gg)" opacity="0.62"/>
<circle cx="1569.8" cy="942.1" r="3.9" fill="url(#gr)" opacity="0.8"/>
<circle cx="1454.3" cy="941.3" r="2.9" fill="url(#gp)" opacity="0.62"/>
<circle cx="1510.4" cy="943.8" r="2.9" fill="url(#gp)" opacity="0.62"/>
<circle cx="903" cy="339" r="3" fill="none" stroke="#e88a30" stroke-width="1"/>
<text x="909" y="357" font-family="Liberation Sans, sans-serif" font-size="11.5" fill="#e8902e">Zenith</text>
<circle cx="1434" cy="600" r="3.4" fill="none" stroke="#c8b8ff" stroke-width="1"/>
<text x="1440" y="617" font-family="Liberation Sans, sans-serif" font-size="11.5" fill="#8f8fe8">Pôle Nord</text>
<path d="M1365.6 790.5L1377.2 801.7M1396.3 890L1406.8 901M1411 888.9L1421.6 899.4M1258.8 931L1269.3 942.8M1568.9 787.4L1578 799.3" stroke="#a8a8a8" stroke-width="1" fill="none"/>
<text x="1377" y="814" font-family="Liberation Sans, sans-serif" font-size="12.300" fill="#b0b0b0">LDN1250</text>
<text x="1407.5" y="912.5" font-family="Liberation Sans, sans-serif" font-size="12" fill="#b0b0b0">VD</text>
<text x="1421.5" y="912.5" font-family="Liberation Sans, sans-serif" font-size="12.300" fill="#b0b0b0">NGC7023</text>
<text x="1579" y="810.5" font-family="Liberation Sans, sans-serif" font-size="12.750" fill="#b0b0b0">NGC6543=Nebuleuse de l'Oeil de Chat</text>
<circle cx="1643.5" cy="825.2" r="9.3" fill="#000" stroke="#f0f0f0" stroke-width="2"/>
<text x="1643.6" y="829.6" font-family="Liberation Sans, sans-serif" font-size="12" fill="#c8c8a8" text-anchor="middle">N</text>
<circle cx="904.500" cy="552.700" r="13" fill="#000"/>
<circle cx="904.500" cy="552.700" r="5" fill="#4a6ad0" opacity="0.7"/>
<g stroke="#f2f4ff" stroke-width="1" fill="none"><circle cx="904.500" cy="552.700" r="10" stroke-dasharray="2.200 1.600"/><circle cx="904.500" cy="552.700" r="7" stroke-dasharray="1.600 1.400"/><circle cx="904.500" cy="552.700" r="3.500" stroke-dasharray="1.200 1.200"/><path d="M898.500 552.700h12M904.500 547v11M899 561.500h11M901.500 564.500h6"/></g>
<g stroke="#f4e61e" fill="none"><circle cx="904.500" cy="552.700" r="15.700" stroke-width="2"/><path d="M904.500 533v5.500M904.500 567v5.500M885 552.700h5.500M918.500 552.700h5.500" stroke-width="1.700"/></g>
</g></svg>
<div id="titlebar" class="abs"><span>SM - Version Avancée  10.4.1.518</span></div>
<svg style="left:1758px;top:5.500px" width="14" height="4"><rect x="0" y="1" width="10" height="1" fill="#777"/></svg>
<div id="menubar" class="abs"><span style="left:8px">Edition</span><span style="left:55px">Carte du ciel</span><span style="left:131px">Visualisation</span><span style="left:207px">Traitements</span><span style="left:278px">Addition-Recalage</span><span style="left:386px">Imagerie Couleur</span><span style="left:487px">Analyse</span><span style="left:538px">Spectrographie</span><span style="left:628px">Observatoire</span><span style="left:705px">Outils</span><span style="left:746px">Configuration</span><span style="left:830px">Fenêtres</span><span style="left:884px">Aide</span></div>
<div id="tb1" class="abs"><div class="tbtn" style="left:-6px"></div>
<div class="tbtn" style="left:43px"></div>
<div class="tbtn" style="left:82px"></div>
<div class="tbtn" style="left:129px"></div>
<div class="tbtn" style="left:168px"></div>
<div class="tbtn" style="left:215px"></div>
<div class="tbtn" style="left:254px"></div>
<div class="tbtn" style="left:293px"></div>
<div class="tbtn" style="left:332px"></div>
<div class="tbtn" style="left:378px"></div>
<div class="tbtn hi" style="left:417px"></div>
<div class="tbtn hi" style="left:456px"></div>
<div class="tbtn" style="left:496px"></div>
<div class="tbtn" style="left:535px"></div>
<div class="tbtn hi" style="left:574px"></div>
<div class="tbtn" style="left:622px"></div>
<div class="tbtn" style="left:661px"></div>
<div class="tbtn" style="left:700px"></div>
<div class="tbtn" style="left:739px"></div>
<div class="tbtn" style="left:778px"></div>
<div class="tbtn" style="left:817px"></div>
<div class="tbtn" style="left:856px"></div>
<div class="tbtn" style="left:895px"></div>
<div class="tbtn" style="left:934px"></div>
<div class="tsep" style="left:36px"></div>
<div class="tsep" style="left:123px"></div>
<div class="tsep" style="left:210px"></div>
<div class="tsep" style="left:372px"></div>
<div class="tsep" style="left:616px"></div>
<div class="tsep" style="left:976px"></div>
<svg style="left:-6px;top:1px" width="38" height="38" viewBox="0 0 38 38" ><path d="M8 2h24l5 4v29h-29z" fill="#9b9b9b"/><rect x="11" y="17" width="23" height="15" fill="#f4f5fa"/><rect x="23" y="3" width="9" height="10" fill="#f4f5fa"/><rect x="25" y="4.500" width="5" height="7" fill="#9b9b9b"/></svg>
<svg style="left:43px;top:1px" width="38" height="38" viewBox="0 0 38 38" ><rect x="10" y="2" width="15" height="18" fill="#3a3a3a" stroke="#e8e8e8" stroke-width="1"/><rect x="5" y="12" width="16" height="20" fill="#1c1c1c" stroke="#e8e8e8" stroke-width="1"/><rect x="16" y="10" width="16" height="20" fill="#222" stroke="#f0f0f0" stroke-width="1.300"/><circle cx="17" cy="14" r="5.500" fill="#cfe6f4" stroke="#a9a9a9" stroke-width="1.200" opacity=".92"/><path d="M20 19l7 12" stroke="#d46a18" stroke-width="3.200"/><path d="M24 12l-4 9" stroke="#fff" stroke-width="2" opacity=".8"/></svg>
<svg style="left:82px;top:1px" width="38" height="38" viewBox="0 0 38 38" ><circle cx="19" cy="18.500" r="15.500" fill="#9b9b9b"/><rect x="17" y="13" width="4.500" height="14" fill="#f4f5fa"/><circle cx="19.200" cy="8.500" r="2.600" fill="#f4f5fa"/><path d="M8 7a15.500 15.500 0 0 1 22 0" stroke="#f4f5fa" stroke-width="1" fill="none" stroke-dasharray="2 2"/></svg>
<svg style="left:129px;top:1px" width="38" height="38" viewBox="0 0 38 38" ><path d="M3 19h15l-7.500 12z" fill="#9b9b9b"/><path d="M13 6h12l7 9h-16z M18 6l-4 9" fill="none" stroke="#9b9b9b" stroke-width="1.600"/><path d="M14 15l-3 5" stroke="#9b9b9b" stroke-width="1.400" stroke-dasharray="2 1.500"/></svg>
<svg style="left:168px;top:1px" width="38" height="38" viewBox="0 0 38 38" ><path d="M18 19h15l-7.500 -13z" fill="#9b9b9b"/><path d="M3 22h15l-3 9h-6z" fill="none" stroke="#9b9b9b" stroke-width="1.600"/><path d="M18 22l4 -4M9 31l9-1" stroke="#9b9b9b" stroke-width="1.400" stroke-dasharray="2 1.500"/></svg>
<svg style="left:215px;top:1px" width="38" height="38" viewBox="0 0 38 38" ><circle cx="18.500" cy="18.500" r="15" fill="none" stroke="#9b9b9b" stroke-width="1" stroke-dasharray="2.500 2"/><path d="M19.500 3.500a15 15 0 0 1 0 30z" fill="#9b9b9b"/></svg>
<svg style="left:254px;top:1px" width="38" height="38" viewBox="0 0 38 38" ><circle cx="12" cy="12" r="8.500" fill="none" stroke="#9b9b9b" stroke-width="1" stroke-dasharray="3 2.500"/><rect x="7" y="10.500" width="10" height="3.200" fill="#9b9b9b"/><path d="M19 20l13 12" stroke="#9b9b9b" stroke-width="5.500"/></svg>
<svg style="left:293px;top:1px" width="38" height="38" viewBox="0 0 38 38" ><circle cx="12" cy="12" r="8.500" fill="none" stroke="#9b9b9b" stroke-width="1" stroke-dasharray="3 2.500"/><path d="M7 12h10M12 7v10" stroke="#9b9b9b" stroke-width="2.400"/><path d="M19 20l13 12" stroke="#9b9b9b" stroke-width="5.500"/></svg>
<svg style="left:332px;top:1px" width="38" height="38" viewBox="0 0 38 38" ><rect x="5" y="4" width="27" height="24" fill="#141830" stroke="#9fb4cc" stroke-width="1.600"/><circle cx="16" cy="15" r="6.500" fill="#dfe8ff"/><circle cx="16" cy="15" r="7.500" fill="none" stroke="#8a5a30" stroke-width="1.200"/><circle cx="15" cy="14" r="3.500" fill="#fff"/><circle cx="24" cy="9" r="1" fill="#7ad"/><circle cx="26" cy="14" r="0.800" fill="#d7a"/><path d="M21 20l10 10" stroke="#d06a14" stroke-width="2.600"/><path d="M28 27l3 3" stroke="#40200a" stroke-width="3"/></svg>
<svg style="left:378px;top:1px" width="38" height="38" viewBox="0 0 38 38" ><ellipse cx="19.500" cy="25" rx="15" ry="10" fill="#b9b9b9"/><ellipse cx="20" cy="23" rx="13.500" ry="8" fill="#d9d9d9"/><g stroke="#5e5e5e" stroke-width="1.300"></g><path d="M28.2 25.4L34.0 28.0M27.5 26.5L32.8 29.9M26.4 27.5L31.0 31.6M25.0 28.4L28.6 33.0M23.3 29.0L25.8 34.1M21.4 29.4L22.7 34.8M19.5 29.5L19.5 35.0M17.6 29.4L16.3 34.8M15.7 29.0L13.2 34.1M14.0 28.4L10.4 33.0M12.6 27.5L8.0 31.6M11.5 26.5L6.2 29.9M10.8 25.4L5.0 28.0" stroke="#666" stroke-width="1.400" fill="none"/><ellipse cx="22" cy="21.500" rx="3" ry="1.800" fill="#4a4a4a"/><circle cx="11.500" cy="8.500" r="7" fill="#f98a4a"/><circle cx="10" cy="6.500" r="4.500" fill="#fca56e"/><path d="M11.1 9.8L5.5 7.8M11.5 9.2L7.1 5.1M12.1 8.7L9.5 3.3M12.9 8.5L12.4 2.5M13.6 8.6L15.5 2.9M14.3 9.0L18.1 4.4" stroke="#e2581a" stroke-width="1.500" fill="none"/><circle cx="14" cy="11" r="1.200" fill="#c43c10"/></svg>
<svg style="left:417px;top:1px" width="38" height="38" viewBox="0 0 38 38" ><path d="M4 10l14-7 16 6v16l-10 9-18-12z" fill="#e8761a"/><path d="M4 10l14-7 16 6-12 6z" fill="#3a2a20"/><path d="M22 15l12-6v16l-10 9z" fill="#c85a10"/><path d="M6 14l14 6v10l-14-9z" fill="#f08a2a"/><circle cx="12" cy="20" r="2" fill="#4a5a8a"/><text x="23" y="35" font-family="Liberation Sans, sans-serif" font-weight="bold" font-size="18" fill="#3a0000" stroke="#3a0000" stroke-width="3.200" stroke-linejoin="round">1</text><text x="23" y="35" font-family="Liberation Sans, sans-serif" font-weight="bold" font-size="18" fill="#f01020" stroke="#f01020" stroke-width="1.300">1</text></svg>
<svg style="left:456px;top:1px" width="38" height="38" viewBox="0 0 38 38" ><ellipse cx="22" cy="20" rx="13" ry="14" fill="#d8641a"/><ellipse cx="25" cy="22" rx="9" ry="11" fill="#b84c10"/><path d="M4 8l14-4 6 14-12 8z" fill="#4a4a4a"/><ellipse cx="9" cy="15" rx="5.500" ry="8" fill="#2a2a2a" transform="rotate(-20 9 15)"/><text x="22" y="35" font-family="Liberation Sans, sans-serif" font-weight="bold" font-size="18" fill="#3a0000" stroke="#3a0000" stroke-width="3.200" stroke-linejoin="round">2</text><text x="22" y="35" font-family="Liberation Sans, sans-serif" font-weight="bold" font-size="18" fill="#f01020" stroke="#f01020" stroke-width="1.300">2</text></svg>
<svg style="left:496px;top:1px" width="38" height="38" viewBox="0 0 38 38" ><path d="M6 10l14-7 14 9v14l-12 8-16-12z" fill="#1e3a34"/><path d="M6 10l14-7 14 9-13 5z" fill="#6a2020"/><path d="M21 17l13-5v14l-12 8z" fill="#16302c"/><rect x="3" y="12" width="4" height="12" rx="2" fill="none" stroke="#111" stroke-width="1.500"/><circle cx="24" cy="12" r="1.300" fill="#fff"/><text x="20" y="35" font-family="Liberation Sans, sans-serif" font-weight="bold" font-size="18" fill="#3a0000" stroke="#3a0000" stroke-width="3.200" stroke-linejoin="round">3</text><text x="20" y="35" font-family="Liberation Sans, sans-serif" font-weight="bold" font-size="18" fill="#f01020" stroke="#f01020" stroke-width="1.300">3</text></svg>
<svg style="left:535px;top:1px" width="38" height="38" viewBox="0 0 38 38" ><rect x="4" y="14" width="30" height="18" rx="4" fill="#e89a14"/><rect x="4" y="26" width="30" height="6" rx="3" fill="#b86c08"/><ellipse cx="19" cy="15" rx="15" ry="4.500" fill="#f4b838"/><rect x="6" y="5" width="26" height="8" fill="#1a1a1a"/><ellipse cx="19" cy="13" rx="13" ry="4" fill="#1a1a1a"/><ellipse cx="19" cy="5.500" rx="13" ry="4" fill="#2e2e2e"/><ellipse cx="19" cy="6" rx="8" ry="2.300" fill="#c8901a"/><ellipse cx="19" cy="6" rx="4.500" ry="1.300" fill="#6a5a3a"/></svg>
<svg style="left:574px;top:1px" width="38" height="38" viewBox="0 0 38 38" ><path d="M10 18l17-14 6 7-18 14z" fill="#0c0c0c"/><ellipse cx="30" cy="7.500" rx="3" ry="5" transform="rotate(40 30 7.500)" fill="#e8a018"/><ellipse cx="30" cy="7.500" rx="1.600" ry="3.300" transform="rotate(40 30 7.500)" fill="#1a1a1a"/><path d="M5 12l8-2 3 5-8 3z" fill="#0c0c0c"/><path d="M13 20h10v6l-3 1v8h-9z" fill="#0c0c0c"/><rect x="17" y="24" width="3.500" height="8" fill="#d9dcf0"/></svg>
<svg style="left:622px;top:1px" width="38" height="38" viewBox="0 0 38 38" ><path d="M19 3c2 5 3 9 6 12 5 3 9 7 8 12-1 5-8 7-14 7s-13-2-14-7c-1-5 3-9 8-12 3-3 4-7 6-12z" fill="#9b9b9b"/><circle cx="13" cy="29" r="1.500" fill="#f4f5fa"/></svg>
<svg style="left:661px;top:1px" width="38" height="38" viewBox="0 0 38 38" ><circle cx="19" cy="18.500" r="15.500" fill="#f6f6f6"/><path d="M4 22a15.500 15.500 0 0 0 30 0c-4 3-9 4-15 4s-11-1-15-4z" fill="#5c5c5c"/><circle cx="19" cy="18.500" r="15.500" fill="none" stroke="#8a8a8a" stroke-width="1" stroke-dasharray="1.500 1.500"/><g fill="#777"><circle cx="12" cy="10" r=".7"/><circle cx="22" cy="8" r=".7"/><circle cx="27" cy="14" r=".7"/><circle cx="16" cy="16" r=".7"/><circle cx="9" cy="17" r=".7"/><circle cx="24" cy="19" r=".7"/><circle cx="18" cy="21" r=".7"/><circle cx="13" cy="6" r=".7"/><circle cx="29" cy="10" r=".7"/><circle cx="20" cy="13" r=".7"/></g></svg>
<svg style="left:700px;top:1px" width="38" height="38" viewBox="0 0 38 38" ><defs><linearGradient id="cop" x1="0" y1="0" x2="1" y2="1"><stop offset="0" stop-color="#c8683c"/><stop offset=".45" stop-color="#f4c4a8"/><stop offset="1" stop-color="#c06030"/></linearGradient></defs><circle cx="19" cy="18.500" r="15.500" fill="url(#cop)" stroke="#7a3a1c" stroke-width="1.200"/><path d="M9 27l14-14" stroke="#3c3c3c" stroke-width="4.500" stroke-linecap="round"/><path d="M22 8a6 6 0 1 0 8 8l-4-1-3-3z" fill="#3c3c3c"/><circle cx="9.500" cy="26.500" r="1.300" fill="#e8b090"/></svg>
<svg style="left:739px;top:1px" width="38" height="38" viewBox="0 0 38 38" ><rect x="2" y="3" width="16" height="24" fill="#050505"/><rect x="18" y="3" width="16" height="24" fill="#8a8a8a"/><path d="M2 27l16-13 16 13z" fill="#6a6a6a"/><g fill="#fff"><circle cx="7" cy="8" r=".800"/><circle cx="12" cy="6" r=".800"/><circle cx="9" cy="13" r=".800"/><circle cx="5" cy="16" r=".700"/></g><circle cx="25" cy="9" r="3" fill="#a8a8a8"/><rect x="2" y="27" width="32" height="8" fill="#8c8c8c"/><text x="3" y="34.500" font-family="Liberation Mono, monospace" font-weight="bold" font-size="9" fill="#f4f4f4" textLength="30">?*LE</text></svg>
<svg style="left:778px;top:1px" width="38" height="38" viewBox="0 0 38 38" ><rect x="13" y="2" width="12" height="13" fill="#fff" stroke="#aaa" stroke-width=".600"/><rect x="4" y="11" width="10" height="13" fill="#0a0a0a"/><rect x="21" y="11" width="11" height="10" fill="#a8a8a8"/><rect x="13" y="20" width="13" height="14" fill="#4a4a4a"/><path d="M12 9a10 10 0 1 0 14 0" fill="none" stroke="#d81a22" stroke-width="3.200"/><path d="M7 8l9-3-2 9z" fill="#d81a22"/></svg>
<svg style="left:817px;top:1px" width="38" height="38" viewBox="0 0 38 38" ><path d="M5 21l1-1M10 15l2-1M16 11l4-1M23 9.500l3-.300" stroke="#aaa" stroke-width="1" fill="none"/></svg>
<svg style="left:856px;top:1px" width="38" height="38" viewBox="0 0 38 38" ><path d="M22 4l7 0 1 6-2 12-4 9-6 3-8-3-5-8 0-9 8-3 5 0z" fill="#9b9b9b"/></svg>
<svg style="left:895px;top:1px" width="38" height="38" viewBox="0 0 38 38" ><rect x="2" y="3" width="33" height="32" fill="#9b9b9b"/><path d="M18 20l4-4" stroke="#f4f4f4" stroke-width="1.200"/></svg>
<svg style="left:934px;top:1px" width="38" height="38" viewBox="0 0 38 38" ><path d="M2 3v32M2 35h33" stroke="#9b9b9b" stroke-width="1.400" fill="none"/><path d="M3 35v-12l4 0 2 3h25v9z" fill="#9b9b9b"/><path d="M11 28v5M19 28v5M29 28v5" stroke="#f4f5fa" stroke-width="1.400" stroke-dasharray="3 1.500"/></svg>
<svg style="left:983px;top:3px" width="34" height="33" viewBox="0 0 34 33" ><rect x="0" y="0" width="34" height="33" rx="3" fill="#0c1030"/><rect x="14" y="22" width="20" height="11" fill="#1a3ab8" opacity=".8"/><circle cx="9" cy="21" r="9" fill="#f0a040"/><circle cx="9" cy="21" r="5" fill="#f8c070"/><circle cx="9" cy="21" r="1.500" fill="#8a4a10"/><circle cx="20" cy="27" r="4.500" fill="#b8b8b8"/><path d="M9 4l15 1 4 12" fill="none" stroke="#f08a20" stroke-width="2.600"/><g fill="#402060" stroke="#f08a20" stroke-width="1"><circle cx="9" cy="4" r="2.500"/><circle cx="24" cy="5" r="2.500"/><circle cx="28" cy="17" r="2.500"/></g></svg></div>
<div id="mdititle" class="abs"><span style="left:-2px">el EQ.2000-</span><span style="left:660px">on des parents [France]</span></div>
<div id="tb2" class="abs"><div class="tbtn" style="left:-2px;top:2px;width:36px;height:37px;opacity:.7"></div>
<div class="tbtn" style="left:38px;top:2px;width:36px;height:37px;opacity:.7"></div>
<div class="tbtn" style="left:661px;top:2px;width:36px;height:37px;opacity:.7"></div>
<div class="tbtn" style="left:691px;top:2px;width:36px;height:37px;opacity:.7"></div>
<div class="tbtn" style="left:956px;top:2px;width:36px;height:37px;opacity:.7"></div>
<div class="tbtn" style="left:995px;top:2px;width:36px;height:37px;opacity:.7"></div>
<div class="tbtn" style="left:1034px;top:2px;width:36px;height:37px;opacity:.7"></div>
<div class="tsep" style="left:35px;top:3px"></div><div class="tsep" style="left:730px;top:3px"></div>
<svg style="left:-2px;top:0px" width="40" height="40" viewBox="0 0 40 40" ><path d="M17 18l13 13" stroke="#3a1e08" stroke-width="5.500"/><path d="M18 17.500l11 11" stroke="#a85a18" stroke-width="2"/><circle cx="11" cy="11" r="8.500" fill="#eef0f2" stroke="#8a6a50" stroke-width="1"/><circle cx="11" cy="11" r="7" fill="none" stroke="#cfe0e4" stroke-width="1.500"/><path d="M5.500 11h11M11 5.500v11" stroke="#f47a20" stroke-width="2.400"/><rect x="10" y="16" width="2" height="1.500" fill="#3a2a20"/></svg>
<svg style="left:36px;top:2px" width="38" height="38" viewBox="0 0 38 38" ><ellipse cx="19.500" cy="25" rx="15" ry="10" fill="#b9b9b9"/><ellipse cx="20" cy="23" rx="13.500" ry="8" fill="#d9d9d9"/><g stroke="#5e5e5e" stroke-width="1.300"></g><path d="M28.2 25.4L34.0 28.0M27.5 26.5L32.8 29.9M26.4 27.5L31.0 31.6M25.0 28.4L28.6 33.0M23.3 29.0L25.8 34.1M21.4 29.4L22.7 34.8M19.5 29.5L19.5 35.0M17.6 29.4L16.3 34.8M15.7 29.0L13.2 34.1M14.0 28.4L10.4 33.0M12.6 27.5L8.0 31.6M11.5 26.5L6.2 29.9M10.8 25.4L5.0 28.0" stroke="#666" stroke-width="1.400" fill="none"/><ellipse cx="22" cy="21.500" rx="3" ry="1.800" fill="#4a4a4a"/><circle cx="11.500" cy="8.500" r="7" fill="#f98a4a"/><circle cx="10" cy="6.500" r="4.500" fill="#fca56e"/><path d="M11.1 9.8L5.5 7.8M11.5 9.2L7.1 5.1M12.1 8.7L9.5 3.3M12.9 8.5L12.4 2.5M13.6 8.6L15.5 2.9M14.3 9.0L18.1 4.4" stroke="#e2581a" stroke-width="1.500" fill="none"/><circle cx="14" cy="11" r="1.200" fill="#c43c10"/></svg>
<svg style="left:661px;top:0px" width="34" height="40" viewBox="0 0 34 40" ><rect x="1.500" y="7.500" width="19" height="19" fill="none" stroke="#b8452c" stroke-width="2" stroke-dasharray="4.500 3"/><path d="M17 20l9 7-4 .500 2.500 5-2 1-2.500-5-3 2.500z" fill="#b9b9b9" stroke="#333" stroke-width=".900"/></svg>
<svg style="left:692px;top:0px" width="34" height="40" viewBox="0 0 34 40" ><path d="M3 3.500l27 29h-27z" fill="#f4b020" stroke="#c8860a" stroke-width="1"/><path d="M8 15.500l11 12h-11z" fill="#eceef6" stroke="#c8860a" stroke-width=".800"/></svg>
<div style="position:absolute;left:763.2px;top:2.200px;width:31px;height:31px;border-radius:3px;background:#f7931c;border:1px solid #f9b45c;box-shadow:0 0 0 .6px #e08a20;font-family:'Liberation Sans',sans-serif;font-weight:bold;font-size:23.500px;line-height:29px;text-align:center;color:#000;-webkit-text-stroke:1.100px #000"><span style="display:inline-block;transform:scaleX(1.040)">W</span></div>
<div style="position:absolute;left:802.2px;top:2.200px;width:31px;height:31px;border-radius:3px;background:#f7931c;border:1px solid #f9b45c;box-shadow:0 0 0 .6px #e08a20;font-family:'Liberation Sans',sans-serif;font-weight:bold;font-size:23.500px;line-height:29px;text-align:center;color:#000;-webkit-text-stroke:1.100px #000"><span style="display:inline-block;transform:scaleX(1.040)">N</span></div>
<div style="position:absolute;left:841.2px;top:2.200px;width:31px;height:31px;border-radius:3px;background:#f7931c;border:1px solid #f9b45c;box-shadow:0 0 0 .6px #e08a20;font-family:'Liberation Sans',sans-serif;font-weight:bold;font-size:23.500px;line-height:29px;text-align:center;color:#000;-webkit-text-stroke:1.100px #000"><span style="display:inline-block;transform:scaleX(1.040)">S</span></div>
<div style="position:absolute;left:880.2px;top:2.200px;width:31px;height:31px;border-radius:3px;background:#f7931c;border:1px solid #f9b45c;box-shadow:0 0 0 .6px #e08a20;font-family:'Liberation Sans',sans-serif;font-weight:bold;font-size:23.500px;line-height:29px;text-align:center;color:#000;-webkit-text-stroke:1.100px #000"><span style="display:inline-block;transform:scaleX(1.040)">E</span></div>
<div style="position:absolute;left:919.2px;top:2.200px;width:31px;height:31px;border-radius:3px;background:#f7931c;border:1px solid #f9b45c;box-shadow:0 0 0 .6px #e08a20;font-family:'Liberation Sans',sans-serif;font-weight:bold;font-size:23.500px;line-height:29px;text-align:center;color:#000;-webkit-text-stroke:1.100px #000"><span style="display:inline-block;transform:scaleX(1.040)">Z</span></div>
<svg style="left:957px;top:2px" width="36" height="34" viewBox="0 0 36 34" ><circle cx="18" cy="17" r="14.500" fill="#fdfdfd" stroke="#9a9a9a" stroke-width="1"/><path d="M18 2.500v29M3.500 17h29M6 9h24M6 25h24" stroke="#c4c4c4" stroke-width="1" fill="none"/><ellipse cx="18" cy="17" rx="7" ry="14.500" fill="none" stroke="#c4c4c4" stroke-width="1"/><text x="18" y="25" text-anchor="middle" font-family="Liberation Sans, sans-serif" font-weight="bold" font-size="20" fill="#f08a1a" stroke="#7a3c06" stroke-width="1.100" textLength="30" lengthAdjust="spacingAndGlyphs">TU</text></svg>
<svg style="left:996px;top:2px" width="36" height="34" viewBox="0 0 36 34" ><circle cx="17" cy="17" r="14" fill="#f4f5fa" stroke="#0a0a0a" stroke-width="1.800"/><path d="M17 6v11l8 6" fill="none" stroke="#f08a4a" stroke-width="2"/><path d="M31 14a14 14 0 0 1-4 13" fill="none" stroke="#f4f5fa" stroke-width="3"/><path d="M30 20l-1.500 9-5.500-4z" fill="#f08a4a"/><circle cx="17" cy="29" r="1" fill="#000"/><circle cx="5" cy="17" r="1" fill="#000"/><circle cx="29" cy="17" r="1" fill="#000"/></svg>
<svg style="left:1036px;top:3px" width="32" height="32" viewBox="0 0 32 32" ><path d="M2 12.500h10v-7.500l12 10.500-12 10.500v-7.500h-10z" fill="#ee1020"/><rect x="24.500" y="2" width="3.600" height="27" fill="#ee1020"/></svg></div>
<div id="cw" class="abs"><svg width="16" height="16" viewBox="0 0 16 16" style="left:5px;top:6px"><polygon points="8,1 9.6,3.6 12.6,2.9 12.4,6 15,7.400 12.900,9.400 14.100,12.200 11,12.300 9.700,15 8,12.900 6.300,15 5,12.300 1.900,12.200 3.100,9.400 1,7.400 3.600,6 3.400,2.900 6.400,3.600" fill="#d6d6cc" stroke="#151515" stroke-width="0.9"/><circle cx="8" cy="8" r="2.300" fill="#6a6a6a" stroke="#222" stroke-width=".6"/></svg><span class="ttl">Temperature CCD, toutes les 5s</span><svg width="40" height="16" viewBox="0 0 40 16" style="left:553px;top:7px"><path d="M5 11.500h8" stroke="#5a6397" stroke-width="2.200"/><path d="M24 3l9 9M33 3l-9 9" stroke="#5a6397" stroke-width="2.400" fill="none"/></svg><div id="cwc" class="abs"><div id="plot" class="abs"><svg width="575" height="326" viewBox="0 0 575 326" style="left:0;top:0" font-family="Liberation Sans, sans-serif" font-size="10.750" fill="#000">
<path d="M281.3 49.2V279.2M514.3 49.2V279.2M48.3 141.1H527.3" stroke="#9a9a9a" stroke-width="1" fill="none"/>
<path d="M44.3 278.9H48.3M44.3 269.8H48.3M44.3 260.6H48.3M44.3 251.4H48.3M44.3 242.2H48.3M39.3 233.0H48.3M44.3 223.8H48.3M44.3 214.6H48.3M44.3 205.4H48.3M44.3 196.2H48.3M44.3 187.1H48.3M44.3 177.9H48.3M44.3 168.7H48.3M44.3 159.5H48.3M44.3 150.3H48.3M39.3 141.1H48.3M44.3 131.9H48.3M44.3 122.7H48.3M44.3 113.5H48.3M44.3 104.3H48.3M44.3 95.2H48.3M44.3 86.0H48.3M44.3 76.8H48.3M44.3 67.6H48.3M44.3 58.4H48.3M39.3 49.2H48.3M71.6 279.2v4M94.9 279.2v4M118.2 279.2v4M141.5 279.2v4M164.8 279.2v4M188.1 279.2v4M211.4 279.2v4M234.7 279.2v4M258.0 279.2v4M281.3 279.2v8M304.6 279.2v4M327.9 279.2v4M351.2 279.2v4M374.5 279.2v4M397.8 279.2v4M421.1 279.2v4M444.4 279.2v4M467.7 279.2v4M491.0 279.2v4M514.3 279.2v8" stroke="#000" stroke-width="1" fill="none"/>
<rect x="48.3" y="49.2" width="479.0" height="230.0" fill="none" stroke="#000" stroke-width="1.2"/>
<path d="M48.3 233.0H527.3" stroke="#d02828" stroke-width="1.3" stroke-dasharray="9 4 2 4" fill="none"/>
<path d="M48.3 49.2L50.2 49.2L52.2 49.2L54.1 49.2L55.0 49.2L55.0 58.4L56.1 58.4L58.0 58.4L59.9 58.4L60.8 58.4L60.8 82.3L61.9 82.3L63.8 82.3L64.7 82.3L64.7 95.2L65.8 95.2L67.7 95.2L69.7 95.2L71.6 95.2L73.5 95.2L75.5 95.2L77.4 95.2L79.4 95.2L81.3 95.2L83.2 95.2L85.2 95.2L87.1 95.2L89.1 95.2L91.0 95.2L93.0 95.2L94.9 95.2L96.8 95.2L98.8 95.2L100.7 95.2L102.7 95.2L104.6 95.2L106.6 95.2L108.5 95.2L110.4 95.2L112.4 95.2L114.3 95.2L116.3 95.2L118.2 95.2L120.1 95.2L121.0 95.2L121.0 98.8L122.1 98.8L124.0 98.8L126.0 98.8L126.9 98.8L126.9 121.8L127.9 121.8L129.8 121.8L130.8 121.8L130.8 141.1L131.8 141.1L133.7 141.1L135.7 141.1L137.6 141.1L139.6 141.1L141.5 141.1L142.4 141.1L142.4 142.9L143.4 142.9L144.3 142.9L144.3 141.1L145.4 141.1L147.3 141.1L149.3 141.1L151.2 141.1L153.2 141.1L155.1 141.1L157.0 141.1L159.0 141.1L160.9 141.1L162.9 141.1L164.8 141.1L166.7 141.1L168.7 141.1L170.6 141.1L172.6 141.1L174.5 141.1L176.4 141.1L178.4 141.1L180.3 141.1L182.3 141.1L184.2 141.1L186.2 141.1L188.1 141.1L190.0 141.1L192.0 141.1L193.9 141.1L195.9 141.1L197.8 141.1L199.8 141.1L201.7 141.1L203.6 141.1L205.6 141.1L207.5 141.1L209.5 141.1L211.4 141.1L213.3 141.1L215.3 141.1L217.2 141.1L219.2 141.1L220.1 141.1L220.1 165.0L221.1 165.0L223.1 165.0L224.0 165.0L224.0 187.1L225.0 187.1L226.9 187.1L228.9 187.1L230.8 187.1L232.8 187.1L234.7 187.1L236.6 187.1L238.6 187.1L240.5 187.1L242.5 187.1L244.4 187.1L246.4 187.1L248.3 187.1L250.2 187.1L252.2 187.1L254.1 187.1L256.1 187.1L258.0 187.1L259.9 187.1L261.9 187.1L263.8 187.1L265.8 187.1L267.7 187.1L269.6 187.1L271.6 187.1L273.5 187.1L275.5 187.1L277.4 187.1L279.4 187.1L281.3 187.1L283.2 187.1L285.2 187.1L287.1 187.1L289.1 187.1L291.0 187.1L291.9 187.1L291.9 210.0L292.9 210.0L294.9 210.0L295.8 210.0L295.8 233.0L296.8 233.0L298.8 233.0L300.7 233.0L302.7 233.0L304.6 233.0L306.5 233.0L308.5 233.0L310.4 233.0L312.4 233.0L314.3 233.0L316.2 233.0L318.2 233.0L320.1 233.0L322.1 233.0L324.0 233.0L326.0 233.0L327.9 233.0L329.8 233.0L331.8 233.0L333.7 233.0L335.7 233.0L337.6 233.0L339.6 233.0L341.5 233.0L343.4 233.0L345.4 233.0L347.3 233.0L349.3 233.0L351.2 233.0L353.1 233.0L355.1 233.0L357.0 233.0L359.0 233.0L360.9 233.0L362.9 233.0L364.8 233.0L366.7 233.0L368.7 233.0L370.6 233.0L372.6 233.0L374.5 233.0L376.4 233.0L378.4 233.0L380.3 233.0L382.3 233.0L384.2 233.0L386.2 233.0L388.1 233.0L390.0 233.0L390.9 233.0L390.9 234.4L392.0 234.4L393.9 234.4L394.8 234.4L394.8 255.1L395.9 255.1L397.8 255.1L398.7 255.1L398.7 278.9L399.7 278.9L401.7 278.9L403.6 278.9L405.6 278.9L407.5 278.9L409.5 278.9L411.4 278.9L413.3 278.9L415.3 278.9L417.2 278.9L419.2 278.9L421.1 278.9L423.0 278.9L425.0 278.9L426.9 278.9L428.9 278.9L430.8 278.9L432.8 278.9L434.7 278.9L436.6 278.9L438.6 278.9L440.5 278.9L442.5 278.9L444.4 278.9L446.3 278.9L448.3 278.9L450.2 278.9L452.2 278.9L454.1 278.9L456.0 278.9L458.0 278.9L459.9 278.9L461.9 278.9L463.8 278.9L465.8 278.9L467.7 278.9L469.6 278.9L471.6 278.9L473.5 278.9L475.5 278.9L477.4 278.9L479.4 278.9L481.3 278.9L483.2 278.9L485.2 278.9L487.1 278.9L489.1 278.9L491.0 278.9L492.9 278.9L494.9 278.9L496.8 278.9L498.8 278.9L500.7 278.9L502.6 278.9L504.6 278.9L506.5 278.9L508.5 278.9L510.4 278.9L512.4 278.9L514.3 278.9L516.2 278.9L518.2 278.9L520.1 278.9L522.1 278.9L524.0 278.9L526.0 278.9L527.9 278.9" stroke="#000" stroke-width="1.100" fill="none"/>
<g fill="none" stroke="#000" stroke-width="0.85"><circle cx="48.3" cy="49.2" r="3"/><circle cx="50.2" cy="49.2" r="3"/><circle cx="52.2" cy="49.2" r="3"/><circle cx="54.1" cy="49.2" r="3"/><circle cx="56.1" cy="58.4" r="3"/><circle cx="58.0" cy="58.4" r="3"/><circle cx="59.9" cy="58.4" r="3"/><circle cx="61.9" cy="82.3" r="3"/><circle cx="63.8" cy="82.3" r="3"/><circle cx="65.8" cy="95.2" r="3"/><circle cx="67.7" cy="95.2" r="3"/><circle cx="69.7" cy="95.2" r="3"/><circle cx="71.6" cy="95.2" r="3"/><circle cx="73.5" cy="95.2" r="3"/><circle cx="75.5" cy="95.2" r="3"/><circle cx="77.4" cy="95.2" r="3"/><circle cx="79.4" cy="95.2" r="3"/><circle cx="81.3" cy="95.2" r="3"/><circle cx="83.2" cy="95.2" r="3"/><circle cx="85.2" cy="95.2" r="3"/><circle cx="87.1" cy="95.2" r="3"/><circle cx="89.1" cy="95.2" r="3"/><circle cx="91.0" cy="95.2" r="3"/><circle cx="93.0" cy="95.2" r="3"/><circle cx="94.9" cy="95.2" r="3"/><circle cx="96.8" cy="95.2" r="3"/><circle cx="98.8" cy="95.2" r="3"/><circle cx="100.7" cy="95.2" r="3"/><circle cx="102.7" cy="95.2" r="3"/><circle cx="104.6" cy="95.2" r="3"/><circle cx="106.6" cy="95.2" r="3"/><circle cx="108.5" cy="95.2" r="3"/><circle cx="110.4" cy="95.2" r="3"/><circle cx="112.4" cy="95.2" r="3"/><circle cx="114.3" cy="95.2" r="3"/><circle cx="116.3" cy="95.2" r="3"/><circle cx="118.2" cy="95.2" r="3"/><circle cx="120.1" cy="95.2" r="3"/><circle cx="122.1" cy="98.8" r="3"/><circle cx="124.0" cy="98.8" r="3"/><circle cx="126.0" cy="98.8" r="3"/><circle cx="127.9" cy="121.8" r="3"/><circle cx="129.8" cy="121.8" r="3"/><circle cx="131.8" cy="141.1" r="3"/><circle cx="133.7" cy="141.1" r="3"/><circle cx="135.7" cy="141.1" r="3"/><circle cx="137.6" cy="141.1" r="3"/><circle cx="139.6" cy="141.1" r="3"/><circle cx="141.5" cy="141.1" r="3"/><circle cx="143.4" cy="142.9" r="3"/><circle cx="145.4" cy="141.1" r="3"/><circle cx="147.3" cy="141.1" r="3"/><circle cx="149.3" cy="141.1" r="3"/><circle cx="151.2" cy="141.1" r="3"/><circle cx="153.2" cy="141.1" r="3"/><circle cx="155.1" cy="141.1" r="3"/><circle cx="157.0" cy="141.1" r="3"/><circle cx="159.0" cy="141.1" r="3"/><circle cx="160.9" cy="141.1" r="3"/><circle cx="162.9" cy="141.1" r="3"/><circle cx="164.8" cy="141.1" r="3"/><circle cx="166.7" cy="141.1" r="3"/><circle cx="168.7" cy="141.1" r="3"/><circle cx="170.6" cy="141.1" r="3"/><circle cx="172.6" cy="141.1" r="3"/><circle cx="174.5" cy="141.1" r="3"/><circle cx="176.4" cy="141.1" r="3"/><circle cx="178.4" cy="141.1" r="3"/><circle cx="180.3" cy="141.1" r="3"/><circle cx="182.3" cy="141.1" r="3"/><circle cx="184.2" cy="141.1" r="3"/><circle cx="186.2" cy="141.1" r="3"/><circle cx="188.1" cy="141.1" r="3"/><circle cx="190.0" cy="141.1" r="3"/><circle cx="192.0" cy="141.1" r="3"/><circle cx="193.9" cy="141.1" r="3"/><circle cx="195.9" cy="141.1" r="3"/><circle cx="197.8" cy="141.1" r="3"/><circle cx="199.8" cy="141.1" r="3"/><circle cx="201.7" cy="141.1" r="3"/><circle cx="203.6" cy="141.1" r="3"/><circle cx="205.6" cy="141.1" r="3"/><circle cx="207.5" cy="141.1" r="3"/><circle cx="209.5" cy="141.1" r="3"/><circle cx="211.4" cy="141.1" r="3"/><circle cx="213.3" cy="141.1" r="3"/><circle cx="215.3" cy="141.1" r="3"/><circle cx="217.2" cy="141.1" r="3"/><circle cx="219.2" cy="141.1" r="3"/><circle cx="221.1" cy="165.0" r="3"/><circle cx="223.1" cy="165.0" r="3"/><circle cx="225.0" cy="187.1" r="3"/><circle cx="226.9" cy="187.1" r="3"/><circle cx="228.9" cy="187.1" r="3"/><circle cx="230.8" cy="187.1" r="3"/><circle cx="232.8" cy="187.1" r="3"/><circle cx="234.7" cy="187.1" r="3"/><circle cx="236.6" cy="187.1" r="3"/><circle cx="238.6" cy="187.1" r="3"/><circle cx="240.5" cy="187.1" r="3"/><circle cx="242.5" cy="187.1" r="3"/><circle cx="244.4" cy="187.1" r="3"/><circle cx="246.4" cy="187.1" r="3"/><circle cx="248.3" cy="187.1" r="3"/><circle cx="250.2" cy="187.1" r="3"/><circle cx="252.2" cy="187.1" r="3"/><circle cx="254.1" cy="187.1" r="3"/><circle cx="256.1" cy="187.1" r="3"/><circle cx="258.0" cy="187.1" r="3"/><circle cx="259.9" cy="187.1" r="3"/><circle cx="261.9" cy="187.1" r="3"/><circle cx="263.8" cy="187.1" r="3"/><circle cx="265.8" cy="187.1" r="3"/><circle cx="267.7" cy="187.1" r="3"/><circle cx="269.6" cy="187.1" r="3"/><circle cx="271.6" cy="187.1" r="3"/><circle cx="273.5" cy="187.1" r="3"/><circle cx="275.5" cy="187.1" r="3"/><circle cx="277.4" cy="187.1" r="3"/><circle cx="279.4" cy="187.1" r="3"/><circle cx="281.3" cy="187.1" r="3"/><circle cx="283.2" cy="187.1" r="3"/><circle cx="285.2" cy="187.1" r="3"/><circle cx="287.1" cy="187.1" r="3"/><circle cx="289.1" cy="187.1" r="3"/><circle cx="291.0" cy="187.1" r="3"/><circle cx="292.9" cy="210.0" r="3"/><circle cx="294.9" cy="210.0" r="3"/><circle cx="296.8" cy="233.0" r="3"/><circle cx="298.8" cy="233.0" r="3"/><circle cx="300.7" cy="233.0" r="3"/><circle cx="302.7" cy="233.0" r="3"/><circle cx="304.6" cy="233.0" r="3"/><circle cx="306.5" cy="233.0" r="3"/><circle cx="308.5" cy="233.0" r="3"/><circle cx="310.4" cy="233.0" r="3"/><circle cx="312.4" cy="233.0" r="3"/><circle cx="314.3" cy="233.0" r="3"/><circle cx="316.2" cy="233.0" r="3"/><circle cx="318.2" cy="233.0" r="3"/><circle cx="320.1" cy="233.0" r="3"/><circle cx="322.1" cy="233.0" r="3"/><circle cx="324.0" cy="233.0" r="3"/><circle cx="326.0" cy="233.0" r="3"/><circle cx="327.9" cy="233.0" r="3"/><circle cx="329.8" cy="233.0" r="3"/><circle cx="331.8" cy="233.0" r="3"/><circle cx="333.7" cy="233.0" r="3"/><circle cx="335.7" cy="233.0" r="3"/><circle cx="337.6" cy="233.0" r="3"/><circle cx="339.6" cy="233.0" r="3"/><circle cx="341.5" cy="233.0" r="3"/><circle cx="343.4" cy="233.0" r="3"/><circle cx="345.4" cy="233.0" r="3"/><circle cx="347.3" cy="233.0" r="3"/><circle cx="349.3" cy="233.0" r="3"/><circle cx="351.2" cy="233.0" r="3"/><circle cx="353.1" cy="233.0" r="3"/><circle cx="355.1" cy="233.0" r="3"/><circle cx="357.0" cy="233.0" r="3"/><circle cx="359.0" cy="233.0" r="3"/><circle cx="360.9" cy="233.0" r="3"/><circle cx="362.9" cy="233.0" r="3"/><circle cx="364.8" cy="233.0" r="3"/><circle cx="366.7" cy="233.0" r="3"/><circle cx="368.7" cy="233.0" r="3"/><circle cx="370.6" cy="233.0" r="3"/><circle cx="372.6" cy="233.0" r="3"/><circle cx="374.5" cy="233.0" r="3"/><circle cx="376.4" cy="233.0" r="3"/><circle cx="378.4" cy="233.0" r="3"/><circle cx="380.3" cy="233.0" r="3"/><circle cx="382.3" cy="233.0" r="3"/><circle cx="384.2" cy="233.0" r="3"/><circle cx="386.2" cy="233.0" r="3"/><circle cx="388.1" cy="233.0" r="3"/><circle cx="390.0" cy="233.0" r="3"/><circle cx="392.0" cy="234.4" r="3"/><circle cx="393.9" cy="234.4" r="3"/><circle cx="395.9" cy="255.1" r="3"/><circle cx="397.8" cy="255.1" r="3"/><circle cx="399.7" cy="278.9" r="3"/><circle cx="401.7" cy="278.9" r="3"/><circle cx="403.6" cy="278.9" r="3"/><circle cx="405.6" cy="278.9" r="3"/><circle cx="407.5" cy="278.9" r="3"/><circle cx="409.5" cy="278.9" r="3"/><circle cx="411.4" cy="278.9" r="3"/><circle cx="413.3" cy="278.9" r="3"/><circle cx="415.3" cy="278.9" r="3"/><circle cx="417.2" cy="278.9" r="3"/><circle cx="419.2" cy="278.9" r="3"/><circle cx="421.1" cy="278.9" r="3"/><circle cx="423.0" cy="278.9" r="3"/><circle cx="425.0" cy="278.9" r="3"/><circle cx="426.9" cy="278.9" r="3"/><circle cx="428.9" cy="278.9" r="3"/><circle cx="430.8" cy="278.9" r="3"/><circle cx="432.8" cy="278.9" r="3"/><circle cx="434.7" cy="278.9" r="3"/><circle cx="436.6" cy="278.9" r="3"/><circle cx="438.6" cy="278.9" r="3"/><circle cx="440.5" cy="278.9" r="3"/><circle cx="442.5" cy="278.9" r="3"/><circle cx="444.4" cy="278.9" r="3"/><circle cx="446.3" cy="278.9" r="3"/><circle cx="448.3" cy="278.9" r="3"/><circle cx="450.2" cy="278.9" r="3"/><circle cx="452.2" cy="278.9" r="3"/><circle cx="454.1" cy="278.9" r="3"/><circle cx="456.0" cy="278.9" r="3"/><circle cx="458.0" cy="278.9" r="3"/><circle cx="459.9" cy="278.9" r="3"/><circle cx="461.9" cy="278.9" r="3"/><circle cx="463.8" cy="278.9" r="3"/><circle cx="465.8" cy="278.9" r="3"/><circle cx="467.7" cy="278.9" r="3"/><circle cx="469.6" cy="278.9" r="3"/><circle cx="471.6" cy="278.9" r="3"/><circle cx="473.5" cy="278.9" r="3"/><circle cx="475.5" cy="278.9" r="3"/><circle cx="477.4" cy="278.9" r="3"/><circle cx="479.4" cy="278.9" r="3"/><circle cx="481.3" cy="278.9" r="3"/><circle cx="483.2" cy="278.9" r="3"/><circle cx="485.2" cy="278.9" r="3"/><circle cx="487.1" cy="278.9" r="3"/><circle cx="489.1" cy="278.9" r="3"/><circle cx="491.0" cy="278.9" r="3"/><circle cx="492.9" cy="278.9" r="3"/><circle cx="494.9" cy="278.9" r="3"/><circle cx="496.8" cy="278.9" r="3"/><circle cx="498.8" cy="278.9" r="3"/><circle cx="500.7" cy="278.9" r="3"/><circle cx="502.6" cy="278.9" r="3"/><circle cx="504.6" cy="278.9" r="3"/><circle cx="506.5" cy="278.9" r="3"/><circle cx="508.5" cy="278.9" r="3"/><circle cx="510.4" cy="278.9" r="3"/><circle cx="512.4" cy="278.9" r="3"/><circle cx="514.3" cy="278.9" r="3"/><circle cx="516.2" cy="278.9" r="3"/><circle cx="518.2" cy="278.9" r="3"/><circle cx="520.1" cy="278.9" r="3"/><circle cx="522.1" cy="278.9" r="3"/><circle cx="524.0" cy="278.9" r="3"/><circle cx="526.0" cy="278.9" r="3"/><circle cx="527.9" cy="278.9" r="3"/></g>
<ellipse cx="103.1" cy="95.2" rx="3.6" ry="3" fill="#000"/>
<ellipse cx="177.6" cy="141.1" rx="3.6" ry="3" fill="#000"/>
<ellipse cx="251.5" cy="187.1" rx="3.6" ry="3" fill="#000"/>
<ellipse cx="331.4" cy="233.0" rx="3.6" ry="3" fill="#000"/>
<ellipse cx="358.2" cy="233.0" rx="3.6" ry="3" fill="#000"/>
<ellipse cx="434.8" cy="278.9" rx="3.6" ry="3" fill="#000"/>
<ellipse cx="471.2" cy="278.9" rx="3.6" ry="3" fill="#000"/>
<ellipse cx="508.5" cy="278.9" rx="3.6" ry="3" fill="#000"/>
<path d="M527.3 279.2h9M527.3 279.2v6" stroke="#d02828" stroke-width="1.2" fill="none"/>
<text x="48.3" y="34">Temperature CCD, toutes les 5s</text>
<text x="32.5" y="53.2" text-anchor="end">20</text>
<text x="32.5" y="145.1" text-anchor="end">10</text>
<text x="32.5" y="237.0" text-anchor="end">0</text>
<text x="281.3" y="302" text-anchor="middle">10</text>
<text x="514.3" y="302" text-anchor="middle">20</text>
<text x="287" y="319" text-anchor="middle">Temps (Min)</text>
<text x="545.5" y="118.5" text-anchor="middle">V</text>
<text x="545.5" y="128.5" text-anchor="middle">a</text>
<text x="545.5" y="139" text-anchor="middle">l</text>
<text x="545.5" y="149.5" text-anchor="middle">e</text>
<text x="545.5" y="159.5" text-anchor="middle">u</text>
<text x="545.5" y="169.5" text-anchor="middle">r</text>
<text x="545.5" y="197" text-anchor="middle" font-size="9">°</text>
<text x="545.5" y="209.3" text-anchor="middle">C</text>
</svg></div><div id="regl" class="abs">Réglages</div><div id="cwst" class="abs"><span>579x330</span><i></i></div><svg width="12" height="12" viewBox="0 0 12 12" style="left:570px;top:365px"><path d="M11 1v10h-10z" fill="#595f92"/></svg></div></div>
<div id="dg" class="abs">
<div id="dgt" class="abs"><span>ARTEMIS CCD ATIK-One60   -&gt;   -5.0°C  ...</span><div id="dgx" class="abs">x</div></div>
<div class="abs nw" style="left:5px;top:20px;font-size:12px;color:#111">ARTEMIS CCD ATIK-One60</div>
<div class="abs" style="left:145px;top:20px;width:110px;height:20px;border:1px solid #b3b7cc;background:#eff0f7"></div>
<div class="abs bb" style="left:3px;top:44px;width:118px;height:38px;font-size:12.5px;line-height:37px;letter-spacing:1px"><span class="nx">STOP</span></div>
<div class="abs bb" style="left:124px;top:44px;width:118px;height:38px;font-size:11.6px;line-height:37px;letter-spacing:-0.2px"><span class="nx">ABANDONNER</span></div>
<div class="abs nw" style="left:6px;top:88px;color:#3c3e50">Temps: 0 sec</div>
<div class="abs" style="left:105px;top:86px;width:127px;height:14px;background:#cacde1;border:1px solid #a9adc4"></div>
<div class="abs hr" style="left:9px;top:114px;width:225px"></div>
<div class="abs nw" style="left:6px;top:122px">Exp.(sec)</div>
<div class="abs in g" style="left:54px;top:120px;width:63px;height:18px">0.01<div class="sp g"></div></div>
<div class="abs gl nw" style="left:124px;top:119px">Bouclage</div>
<div class="abs cb" style="left:200px;top:119px;width:14px;height:14px"></div>
<div class="abs bb" style="left:222px;top:118px;width:18px;height:17px;border-radius:3px"><svg width="16" height="15" viewBox="0 0 16 15" style="left:0;top:0"><path d="M4 3.500l8 8M12 3.500l-8 8" stroke="#9a9cac" stroke-width="1.100"/></svg></div>
<div class="abs gl nw" style="left:124px;top:138px">Bouclage infini</div>
<div class="abs cb" style="left:200px;top:137px;width:14px;height:14px"></div>
<div class="abs nw" style="left:6px;top:159px">Nbre de boucles</div>
<div class="abs in" style="left:86px;top:157px;width:53px;height:19px">10<div class="sp"></div></div>
<div class="abs nw" style="left:144px;top:159px">Délai (s)</div>
<div class="abs in" style="left:192px;top:157px;width:38px;height:19px">1<div class="sp"></div></div>
<div class="abs hr" style="left:9px;top:183px;width:225px"></div>
<div class="abs nw" style="left:6px;top:191px">BinX:</div>
<div class="abs in" style="left:36px;top:190px;width:38px;height:19px">1<div class="sp"></div></div>
<div class="abs nw" style="left:85px;top:191px">BinY:</div>
<div class="abs in" style="left:121px;top:190px;width:38px;height:19px">1<div class="sp"></div></div>
<div class="abs cb" style="left:177px;top:192px;width:14px;height:14px;background:#c7cee6;border-color:#9aa3c4"><svg width="12" height="12" viewBox="0 0 12 12" style="left:0;top:0"><path d="M2.500 6l2.500 3 4.500-6.500" stroke="#8a94bd" stroke-width="1.600" fill="none"/></svg></div>
<div class="abs gl nw" style="left:196px;top:192px">Lier</div>
<div class="abs bb" style="left:7px;top:217px;width:73px;height:21px;line-height:19px;border-radius:4px;font-size:11.600px"><span class="nx">Exp Longue</span></div>
<div class="abs bb" style="left:87px;top:217px;width:73px;height:21px;line-height:19px;border-radius:4px;font-size:11.600px"><span class="nx">Exp. courte</span></div>
<div class="abs bb" style="left:167px;top:217px;width:73px;height:21px;line-height:19px;border-radius:4px;font-size:11.600px"><span class="nx">Sequence</span></div>
<div class="abs" style="left:17px;top:242px;width:210px;height:14px;background:#ffff20;color:#6a6a3a;font-size:11.600px;line-height:14px;text-align:center;padding-right:42px">Atik One</div>
<div class="abs tab" style="left:3px;width:60px"><span class="nx" style="transform-origin:0 50%;transform:scaleX(.88)">Fenêtrage</span></div>
<div class="abs tab" style="left:63px;width:48px"><span class="nx" style="transform-origin:0 50%;transform:scaleX(.88)">Caméra</span></div>
<div class="abs tab" style="left:177px;width:50px"><span class="nx" style="transform-origin:0 50%;transform:scaleX(.88)">Roue</span></div>
<div class="abs" style="left:1px;top:279px;width:241px;height:139px;border:1px solid #b3b7cc;background:#e9ebf5"></div>
<div class="abs tab" style="left:111px;top:259px;width:67px;height:22px;background:#eceef7;color:#000;padding-left:6px;line-height:18px"><span class="nx" style="transform-origin:0 50%;transform:scaleX(.88)">Temp. CCD</span></div>
<div class="abs sb" style="left:211px;top:261px;width:16px;height:16px;border-radius:3px"><svg width="14" height="14" viewBox="0 0 14 14" style="left:0;top:0"><path d="M8.500 3.500v7l-4-3.500z" fill="#222"/></svg></div>
<div class="abs sb" style="left:227px;top:261px;width:16px;height:16px;border-radius:3px"><svg width="14" height="14" viewBox="0 0 14 14" style="left:0;top:0"><path d="M5.500 3.500v7l4-3.500z" fill="#222"/></svg></div>
<div class="abs nw" style="left:9px;top:287px;transform:scaleX(.895)">Temperature CCD: -4.95°C</div>
<div class="abs sb" style="left:211px;top:285px;width:18px;height:17px;font-weight:bold;font-size:11px;line-height:15px">G</div>
<div class="abs nw" style="left:9px;top:308px;transform:scaleX(.895)">Temp. CCD requise (°C)</div>
<div class="abs in" style="left:127px;top:306px;width:48px;height:19px;color:#000">0<div class="sp g"></div></div>
<div class="abs" style="left:186px;top:306px;width:43px;height:18px;border:1px solid #cf7a58;border-radius:4px;background:linear-gradient(#fbb394,#f58e66 45%,#f07e54 55%,#f59a76);color:#221;text-align:center;line-height:16px;font-size:12px;box-shadow:0 0 0 1px rgba(255,255,255,.6)"><span class="nx">Appl.</span></div>
<div class="abs nw" style="left:9px;top:333px;transform:scaleX(.895)">Puissance refroidissement (%) : 62</div>
<div class="abs sb" style="left:211px;top:331px;width:18px;height:17px;font-weight:bold;font-size:11px;line-height:15px">G</div>
<div class="abs nw" style="left:9px;top:353px;transform:scaleX(.895)">Consigne de température : -5.0 °C</div>
<div class="abs sb" style="left:10px;top:396px;width:52px;height:18px"><span class="nx">Editer</span></div>
<div class="abs sb dis" style="left:68px;top:396px;width:52px;height:18px"><span class="nx">Stop</span></div>
<div class="abs sb" style="left:126px;top:396px;width:52px;height:18px"><span class="nx">Descen.</span></div>
<div class="abs sb" style="left:184px;top:396px;width:52px;height:18px"><span class="nx">Monter</span></div>
<div class="abs hr" style="left:0;top:422px;width:244px"></div>
<div class="abs" style="left:0;top:425px;width:244px;height:27px;border-top:1px solid #a9adc2;background:linear-gradient(#eceef6,#d3d6e6 55%,#dfe1ed)"></div>
<svg width="16" height="14" viewBox="0 0 16 14" style="left:91px;top:432px"><path d="M0 5h6v-3.500l6 5.500-6 5.500v-3.500h-6z" fill="#e01020"/><rect x="12.500" y="0" width="2.200" height="14" fill="#e01020"/></svg>
<div class="abs nw" style="left:111px;top:433px;color:#000;font-size:12px">Minimiser</div>
</div>
</body></html>
